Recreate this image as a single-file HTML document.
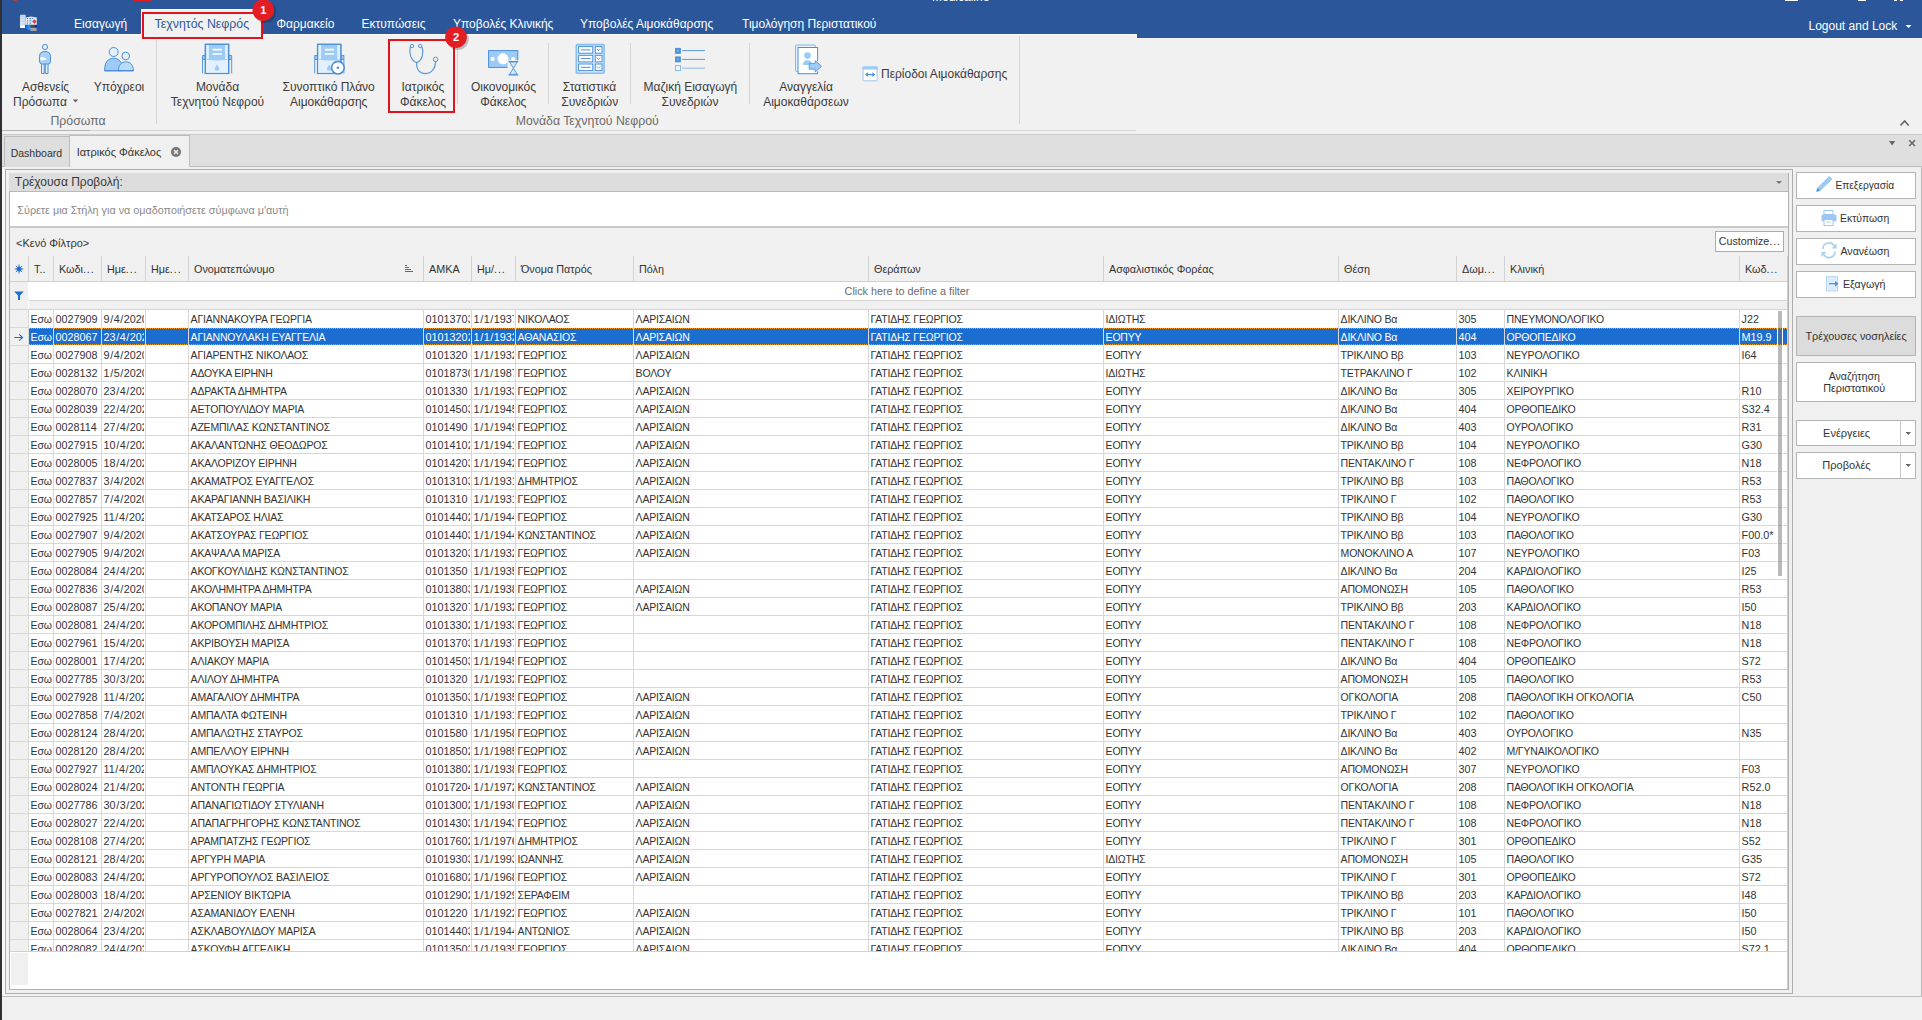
<!DOCTYPE html><html><head><meta charset="utf-8"><style>
html,body{margin:0;padding:0;}
body{width:1922px;height:1020px;position:relative;overflow:hidden;background:#f0f0f0;font-family:"Liberation Sans", sans-serif;}
</style></head><body>
<div style="position:absolute;left:2px;top:0px;width:1920px;height:34px;background:#2b579a"></div>
<div style="position:absolute;left:1136px;top:34px;width:786px;height:4px;background:#2b579a"></div>
<div style="position:absolute;left:2px;top:34px;width:1134px;height:97px;background:#f1f1f1;border-top:1px solid #fbfbfb;box-sizing:border-box"></div>
<div style="position:absolute;left:1136px;top:38px;width:786px;height:97px;background:#f1f1f1"></div>
<div style="position:absolute;left:1136px;top:34px;width:1px;height:4px;background:#fbfbfb"></div>
<div style="position:absolute;left:2px;top:130px;width:88px;height:1px;background:#b4b4b4"></div>
<div style="position:absolute;left:90px;top:130px;width:1046px;height:1px;background:#d4d4d4"></div>
<div style="position:absolute;left:2px;top:134px;width:1920px;height:1px;background:#cacaca"></div>
<div style="position:absolute;left:2px;top:135px;width:1920px;height:31px;background:#dfdfdf"></div>
<div style="position:absolute;left:2px;top:166px;width:1920px;height:1px;background:#bcbcbc"></div>
<div style="position:absolute;left:0px;top:0px;width:2px;height:1020px;background:#2e3033"></div>
<div style="position:absolute;left:932px;top:-13.16px;height:20px;line-height:20px;font-size:12px;color:#fff;white-space:nowrap;">Medicaline</div>
<div style="position:absolute;left:1785px;top:0px;width:13px;height:1px;background:#fff"></div>
<div style="position:absolute;left:1858px;top:0px;width:8px;height:1px;background:#fff"></div>
<div style="position:absolute;left:1894px;top:0px;width:3px;height:1px;background:#fff"></div>
<div style="position:absolute;left:1900px;top:0px;width:3px;height:1px;background:#fff"></div>
<div style="position:absolute;left:134px;top:0px;width:18px;height:1px;background:#e01b24"></div>
<div style="position:absolute;left:13px;top:0px;width:4px;height:1px;background:#c0392b"></div>
<div style="position:absolute;left:74px;top:13.84px;height:20px;line-height:20px;font-size:12px;color:#ffffff;white-space:nowrap;">Εισαγωγή</div>
<div style="position:absolute;left:276.5px;top:13.84px;height:20px;line-height:20px;font-size:12px;color:#ffffff;white-space:nowrap;">Φαρμακείο</div>
<div style="position:absolute;left:361.5px;top:13.84px;height:20px;line-height:20px;font-size:12px;color:#ffffff;white-space:nowrap;">Εκτυπώσεις</div>
<div style="position:absolute;left:453px;top:13.84px;height:20px;line-height:20px;font-size:12px;color:#ffffff;white-space:nowrap;">Υποβολές Κλινικής</div>
<div style="position:absolute;left:580px;top:13.84px;height:20px;line-height:20px;font-size:12px;color:#ffffff;white-space:nowrap;">Υποβολές Αιμοκάθαρσης</div>
<div style="position:absolute;left:742px;top:13.84px;height:20px;line-height:20px;font-size:12px;color:#ffffff;white-space:nowrap;">Τιμολόγηση Περιστατικού</div>
<div style="position:absolute;left:141px;top:9px;width:122px;height:26px;background:#f1f1f1;border-top:1px solid #fafafa;box-sizing:border-box"></div>
<div style="position:absolute;left:154.6px;top:13.72px;height:20px;line-height:20px;font-size:12.35px;color:#2b579a;white-space:nowrap;">Τεχνητός Νεφρός</div>
<div style="position:absolute;left:1808.5px;top:15.84px;height:20px;line-height:20px;font-size:12px;color:#ffffff;white-space:nowrap;">Logout and Lock</div>
<svg style="position:absolute;left:1904px;top:23px" width="10" height="6" viewBox="1904 23 10 6"><path d="M1905.5 25 L1911.5 25 L1908.5 28 Z" fill="#fff"/></svg>
<svg style="position:absolute;left:16px;top:12px" width="26" height="22" viewBox="16 12 26 22">
<defs><linearGradient id="lb" x1="0" y1="0" x2="0" y2="1"><stop offset="0" stop-color="#c9d6ec"/><stop offset="1" stop-color="#e9eef8"/></linearGradient>
<linearGradient id="bb" x1="0" y1="0" x2="1" y2="0"><stop offset="0" stop-color="#0a5fd0"/><stop offset="1" stop-color="#2aa4ff"/></linearGradient></defs>
<rect x="20" y="14.8" width="5.8" height="13.3" rx="1" fill="url(#lb)"/>
<path d="M20.6 16.5 H25 M20.6 19 H25 M20.6 21.5 H25 M20.6 24 H25" stroke="#b5c6e2" stroke-width="0.6"/>
<rect x="20.3" y="26" width="5.2" height="2" fill="#fff"/>
<path d="M26 17.6 L31 16.6 L36.8 17.6 V24.8 H26 Z" fill="#dfe7f5"/>
<g fill="#3f6fc8"><rect x="27" y="18" width="1" height="1"/><rect x="29.5" y="18" width="1.6" height="0.9"/><rect x="32.3" y="18" width="1" height="1"/>
<rect x="27" y="20.3" width="1" height="1"/><rect x="29.5" y="20.3" width="1.6" height="0.9"/>
<rect x="27" y="22.6" width="1" height="1"/><rect x="29.5" y="22.6" width="1.6" height="0.9"/></g>
<path d="M34.4 19.2 L36.6 21.5 L34.4 23.8 L32.2 21.5 Z" fill="#e53935"/>
<path d="M25 24.8 L30.6 25.4 V30.4 L25 28.6 Z" fill="url(#bb)"/>
<rect x="30.6" y="25.2" width="6" height="2.6" fill="#4a4740"/>
<rect x="30.6" y="27.8" width="6" height="3.2" fill="#a3a3b0"/>
<rect x="34.9" y="25.4" width="2" height="1.8" fill="#1515c8"/>
</svg>
<div style="position:absolute;left:156px;top:37px;width:1px;height:87px;background:#d5d5d5"></div>
<div style="position:absolute;left:457px;top:43px;width:1px;height:61px;background:#d5d5d5"></div>
<div style="position:absolute;left:548px;top:43px;width:1px;height:61px;background:#d5d5d5"></div>
<div style="position:absolute;left:630px;top:43px;width:1px;height:61px;background:#d5d5d5"></div>
<div style="position:absolute;left:749px;top:43px;width:1px;height:61px;background:#d5d5d5"></div>
<div style="position:absolute;left:1019px;top:36px;width:1px;height:88px;background:#d5d5d5"></div>
<div style="position:absolute;left:-104.50px;top:76.84px;width:300px;text-align:center;height:20px;line-height:20px;font-size:12px;color:#3b3b3b;white-space:nowrap;">Ασθενείς</div>
<div style="position:absolute;left:13px;top:91.84px;height:20px;line-height:20px;font-size:12px;color:#3b3b3b;white-space:nowrap;">Πρόσωπα</div>
<svg style="position:absolute;left:71px;top:97px" width="10" height="8" viewBox="71 97 10 8"><path d="M72.8 99.6 L78.2 99.6 L75.5 102.4 Z" fill="#666"/></svg>
<div style="position:absolute;left:-31.00px;top:76.84px;width:300px;text-align:center;height:20px;line-height:20px;font-size:12px;color:#3b3b3b;white-space:nowrap;">Υπόχρεοι</div>
<div style="position:absolute;left:-72.00px;top:111.24px;width:300px;text-align:center;height:20px;line-height:20px;font-size:12.3px;color:#6a6a6a;white-space:nowrap;">Πρόσωπα</div>
<div style="position:absolute;left:67.50px;top:76.84px;width:300px;text-align:center;height:20px;line-height:20px;font-size:12px;color:#3b3b3b;white-space:nowrap;">Μονάδα</div>
<div style="position:absolute;left:67.50px;top:91.84px;width:300px;text-align:center;height:20px;line-height:20px;font-size:12px;color:#3b3b3b;white-space:nowrap;">Τεχνητού Νεφρού</div>
<div style="position:absolute;left:178.70px;top:76.84px;width:300px;text-align:center;height:20px;line-height:20px;font-size:12px;color:#3b3b3b;white-space:nowrap;">Συνοπτικό Πλάνο</div>
<div style="position:absolute;left:178.70px;top:91.84px;width:300px;text-align:center;height:20px;line-height:20px;font-size:12px;color:#3b3b3b;white-space:nowrap;">Αιμοκάθαρσης</div>
<div style="position:absolute;left:272.80px;top:76.84px;width:300px;text-align:center;height:20px;line-height:20px;font-size:12px;color:#3b3b3b;white-space:nowrap;">Ιατρικός</div>
<div style="position:absolute;left:273.00px;top:91.84px;width:300px;text-align:center;height:20px;line-height:20px;font-size:12px;color:#3b3b3b;white-space:nowrap;">Φάκελος</div>
<div style="position:absolute;left:353.50px;top:76.84px;width:300px;text-align:center;height:20px;line-height:20px;font-size:12px;color:#3b3b3b;white-space:nowrap;">Οικονομικός</div>
<div style="position:absolute;left:353.30px;top:91.84px;width:300px;text-align:center;height:20px;line-height:20px;font-size:12px;color:#3b3b3b;white-space:nowrap;">Φάκελος</div>
<div style="position:absolute;left:439.50px;top:76.84px;width:300px;text-align:center;height:20px;line-height:20px;font-size:12px;color:#3b3b3b;white-space:nowrap;">Στατιστικά</div>
<div style="position:absolute;left:439.80px;top:91.84px;width:300px;text-align:center;height:20px;line-height:20px;font-size:12px;color:#3b3b3b;white-space:nowrap;">Συνεδριών</div>
<div style="position:absolute;left:540.40px;top:76.84px;width:300px;text-align:center;height:20px;line-height:20px;font-size:12px;color:#3b3b3b;white-space:nowrap;">Μαζική Εισαγωγή</div>
<div style="position:absolute;left:540.00px;top:91.84px;width:300px;text-align:center;height:20px;line-height:20px;font-size:12px;color:#3b3b3b;white-space:nowrap;">Συνεδριών</div>
<div style="position:absolute;left:656.00px;top:76.84px;width:300px;text-align:center;height:20px;line-height:20px;font-size:12px;color:#3b3b3b;white-space:nowrap;">Αναγγελία</div>
<div style="position:absolute;left:656.00px;top:91.84px;width:300px;text-align:center;height:20px;line-height:20px;font-size:12px;color:#3b3b3b;white-space:nowrap;">Αιμοκαθάρσεων</div>
<div style="position:absolute;left:881px;top:64.34px;height:20px;line-height:20px;font-size:12px;color:#3b3b3b;white-space:nowrap;">Περίοδοι Αιμοκάθαρσης</div>
<div style="position:absolute;left:437.30px;top:111.24px;width:300px;text-align:center;height:20px;line-height:20px;font-size:12.3px;color:#6a6a6a;white-space:nowrap;">Μονάδα Τεχνητού Νεφρού</div>
<svg style="position:absolute;left:1898px;top:118px" width="14" height="10" viewBox="1898 118 14 10"><path d="M1900.5 125.5 L1904.6 121 L1908.7 125.5" fill="none" stroke="#666" stroke-width="1.6"/></svg>
<svg style="position:absolute;left:36px;top:42px" width="18" height="34" viewBox="36 42 18 34">
<circle cx="45" cy="47" r="2.6" fill="#e3f0fd" stroke="#4a8fd9" stroke-width="1"/>
<path d="M41.5 63.5 h2.7 v10 h-2.7 z M45.3 63.5 h2.7 v10 h-2.7 z" fill="#e3f0fd" stroke="#4a8fd9" stroke-width="1"/>
<path d="M39.5 56.5 Q39.5 51.5 45 51.5 Q50.5 51.5 50.5 56.5 L50.5 61.5 Q50.5 63.8 48.2 64 L41.5 64 Q39.5 63.5 39.5 61.5 Z" fill="#a9d1f7" stroke="#4a8fd9" stroke-width="1"/>
<path d="M40.2 58.2 Q41 56.5 43 57.3 Q45.5 57.5 46.5 58.8 Q46 60.3 43.5 60.2 L40.8 60.2 Z" fill="#fff"/>
</svg>
<svg style="position:absolute;left:102px;top:45px" width="34" height="28" viewBox="102 45 34 28">
<path d="M104.6 70.7 C104.6 62 108 58.3 113.6 58.3 C119.2 58.3 122.6 62 122.6 70.7 Z" fill="#9ccbf7" stroke="#4a8fd9" stroke-width="1"/>
<circle cx="113.7" cy="52" r="4.5" fill="#e3f0fd" stroke="#4a8fd9" stroke-width="1"/>
<path d="M118.4 70.7 C118.4 65 121.5 61.8 125.9 61.8 C130.3 61.8 133.4 65 133.4 70.7 Z" fill="#b9dbfa" stroke="#4a8fd9" stroke-width="1"/>
<circle cx="125.7" cy="56" r="3.8" fill="#e3f0fd" stroke="#4a8fd9" stroke-width="1"/>
<path d="M104.6 70.7 H133.4" stroke="#4a8fd9" stroke-width="1.3"/>
</svg>
<svg style="position:absolute;left:200px;top:42px" width="34" height="34" viewBox="200 42 34 34">
<path d="M202.5 55.5 h3 v4 h-3 z M228.7 55.5 h3 v4 h-3 z" fill="#9ccbf7" stroke="#4a8fd9" stroke-width="0.9"/>
<path d="M202.5 59.5 V73.5 M231.7 59.5 V73.5" stroke="#4a8fd9" stroke-width="0.9"/>
<rect x="205.3" y="44.3" width="23.4" height="29.2" fill="#e3f0fd" stroke="#4a8fd9" stroke-width="1.1"/>
<path d="M205.8 44.8 H228.2 V59.5 Q217 61.5 205.8 59.5 Z" fill="#9ccbf7"/>
<path d="M206.3 45 v14 h2.6 v-14 z M225.1 45 v14 h2.6 v-14 z" fill="#e3f0fd"/>
<rect x="205.3" y="44.3" width="23.4" height="29.2" fill="none" stroke="#4a8fd9" stroke-width="1.1"/>
<path d="M212.5 48.8 h9 l0.8 1.6 h-9.8 z M212.5 53.2 h9 l0.8 1.6 h-9.8 z" fill="#fff"/>
<path d="M217 64.5 Q219.2 67.5 219.2 68.6 A2.2 2.2 0 0 1 214.8 68.6 Q214.8 67.5 217 64.5 Z" fill="#9ccbf7"/>
</svg>
<svg style="position:absolute;left:312px;top:42px" width="40" height="36" viewBox="312 42 40 36">
<path d="M314.7 55.5 h3 v4 h-3 z M340.9 55.5 h3 v4 h-3 z" fill="#9ccbf7" stroke="#4a8fd9" stroke-width="0.9"/>
<path d="M314.7 59.5 V73.5 M343.9 59.5 V73.5" stroke="#4a8fd9" stroke-width="0.9"/>
<rect x="317.5" y="44.3" width="23.4" height="29.2" fill="#e3f0fd" stroke="#4a8fd9" stroke-width="1.1"/>
<path d="M318.0 44.8 H340.4 V59.5 Q329.2 61.5 318.0 59.5 Z" fill="#9ccbf7"/>
<path d="M318.5 45 v14 h2.6 v-14 z M337.3 45 v14 h2.6 v-14 z" fill="#e3f0fd"/>
<rect x="317.5" y="44.3" width="23.4" height="29.2" fill="none" stroke="#4a8fd9" stroke-width="1.1"/>
<path d="M324.7 48.8 h9 l0.8 1.6 h-9.8 z M324.7 53.2 h9 l0.8 1.6 h-9.8 z" fill="#fff"/>
<path d="M329.2 64.5 Q331.4 67.5 331.4 68.6 A2.2 2.2 0 0 1 327.0 68.6 Q327.0 67.5 329.2 64.5 Z" fill="#9ccbf7"/>

<circle cx="337.9" cy="67.7" r="6.3" fill="#fff" stroke="#4a8fd9" stroke-width="1.6"/>
<circle cx="337.9" cy="67.7" r="1.3" fill="#4a8fd9"/>
</svg>
<svg style="position:absolute;left:404px;top:42px" width="36" height="34" viewBox="404 42 36 34">
<path d="M410.3 46.8 C408.8 52 410.5 60.5 416.6 62.6 C422.7 60.5 424 52 421.9 46.8" fill="none" stroke="#5796d8" stroke-width="1.15"/>
<path d="M416.6 62.6 C416.2 70 420 73.6 425.6 73.6 C431.2 73.6 435.6 68.5 435.6 61.8" fill="none" stroke="#5796d8" stroke-width="1.15"/>
<circle cx="412" cy="46" r="1.7" fill="#e3f0fd" stroke="#5796d8" stroke-width="1"/>
<circle cx="420.2" cy="46" r="1.7" fill="#e3f0fd" stroke="#5796d8" stroke-width="1"/>
<circle cx="435.6" cy="59.4" r="2.3" fill="#e3f0fd" stroke="#5796d8" stroke-width="1"/>
</svg>
<svg style="position:absolute;left:486px;top:48px" width="36" height="30" viewBox="486 48 36 30">
<rect x="488.6" y="50.6" width="29.2" height="16.8" fill="#9ccbf7" stroke="#4a8fd9" stroke-width="1"/>
<circle cx="503" cy="58.8" r="5.5" fill="#fff"/>
<circle cx="492.6" cy="59" r="2.1" fill="#fff"/>
<circle cx="513.3" cy="59" r="2.1" fill="#fff"/>
<rect x="507.6" y="60.3" width="11.5" height="15.5" fill="#f1f1f1"/>
<path d="M508.5 61.5 H518.3 M508.5 74.8 H518.3" stroke="#4a8fd9" stroke-width="1.2"/>
<path d="M509.6 62 L517.2 62 L513.4 68.2 Z M509.6 74.3 L517.2 74.3 L513.4 68.2 Z" fill="#d6eafc" stroke="#4a8fd9" stroke-width="0.9"/>
</svg>
<svg style="position:absolute;left:574px;top:42px" width="32" height="34" viewBox="574 42 32 34">
<rect x="576.3" y="44.6" width="27.8" height="28.6" rx="1" fill="#d9ebfc" stroke="#8bbdec" stroke-width="1.6"/>
<rect x="578.6" y="46.6" width="14.2" height="6.6" fill="#fff" stroke="#4a8fd9" stroke-width="1"/><path d="M580.8 49.9 H590.6" stroke="#4a8fd9" stroke-width="1"/><rect x="595.2" y="46.6" width="6.8" height="6.6" fill="#fff" stroke="#4a8fd9" stroke-width="1"/><path d="M597 49.0 L598.6 50.800000000000004 L600.2 49.0" fill="none" stroke="#4a8fd9" stroke-width="0.8"/><rect x="578.6" y="55.3" width="14.2" height="6.6" fill="#fff" stroke="#4a8fd9" stroke-width="1"/><path d="M580.8 58.599999999999994 H590.6" stroke="#4a8fd9" stroke-width="1"/><rect x="595.2" y="55.3" width="6.8" height="6.6" fill="#fff" stroke="#4a8fd9" stroke-width="1"/><path d="M597 57.699999999999996 L598.6 59.5 L600.2 57.699999999999996" fill="none" stroke="#4a8fd9" stroke-width="0.8"/><rect x="578.6" y="64.0" width="14.2" height="6.6" fill="#fff" stroke="#4a8fd9" stroke-width="1"/><path d="M580.8 67.3 H590.6" stroke="#4a8fd9" stroke-width="1"/><rect x="595.2" y="64.0" width="6.8" height="6.6" fill="#fff" stroke="#4a8fd9" stroke-width="1"/><path d="M597 66.4 L598.6 68.2 L600.2 66.4" fill="none" stroke="#4a8fd9" stroke-width="0.8"/>
</svg>
<svg style="position:absolute;left:673px;top:46px" width="34" height="28" viewBox="673 46 34 28">
<rect x="675.5" y="48.3" width="5" height="5" fill="#4a8fd9" stroke="#4a8fd9" stroke-width="0.8"/>
<rect x="677" y="49.8" width="2" height="2" fill="#7fb3e8"/>
<rect x="675.5" y="56.9" width="5" height="5" fill="#4a8fd9" stroke="#4a8fd9" stroke-width="0.8"/>
<rect x="677" y="58.4" width="2" height="2" fill="#7fb3e8"/>
<rect x="675.5" y="65.6" width="5" height="5" fill="#eef6fe" stroke="#7fb3e8" stroke-width="0.9"/>
<path d="M682.3 50.6 H705 M682.3 59.4 H705" stroke="#4a8fd9" stroke-width="0.9"/>
<path d="M682.3 68.2 H705" stroke="#7fb3e8" stroke-width="0.9"/>
</svg>
<svg style="position:absolute;left:793px;top:42px" width="32" height="34" viewBox="793 42 32 34">
<rect x="795.6" y="45" width="19.6" height="26.4" rx="0.8" fill="#eaf3fc" stroke="#7fb3e8" stroke-width="1"/>
<rect x="798" y="47.5" width="19.6" height="26.2" fill="#fff" stroke="#4a8fd9" stroke-width="1"/>
<circle cx="807.5" cy="55.6" r="3.3" fill="#9ccbf7"/>
<path d="M803 65 C803 61.6 805 60.2 807.5 60.2 C810 60.2 812 61.6 812 65 Z" fill="#9ccbf7"/>
<path d="M816.5 60 L823 66.3 L816.5 72.6 Z" fill="#f1f1f1"/>
<path d="M809.2 63.4 H815.2 V60.6 L821.6 66.3 L815.2 72 V69.2 H809.2 Z" fill="#9ccbf7" stroke="#4a8fd9" stroke-width="0.8"/>
</svg>
<svg style="position:absolute;left:860px;top:64px" width="20" height="20" viewBox="860 64 20 20">
<rect x="863" y="67" width="14.2" height="13.8" rx="1" fill="#fff" stroke="#b9d7f3" stroke-width="1.5"/>
<rect x="862.5" y="66.5" width="15.2" height="3" rx="1" fill="#9ccbf7"/>
<path d="M866.8 74.6 H873.4" stroke="#4a8fd9" stroke-width="1.3"/>
<path d="M865 74.6 L867.8 72.3 V76.9 Z M875.2 74.6 L872.4 72.3 V76.9 Z" fill="#4a8fd9"/>
</svg>
<div style="position:absolute;left:142px;top:12px;width:121px;height:27px;border:2px solid #e1141c;box-sizing:border-box"></div>
<div style="position:absolute;left:388px;top:39px;width:67px;height:74px;border:2px solid #e1141c;box-sizing:border-box"></div>
<svg style="position:absolute;left:250px;top:-2px" width="28" height="28" viewBox="250 -2 28 28">
<circle cx="265.0" cy="12.0" r="11" fill="#000" opacity="0.22"/>
<circle cx="263.3" cy="10.2" r="10.8" fill="#e41d24"/>
</svg>
<div style="position:absolute;left:253.3px;top:0.1999999999999993px;width:20px;height:20px;line-height:20px;text-align:center;color:#fff;font-weight:bold;font-size:11.2px;">1</div>
<svg style="position:absolute;left:443px;top:24px" width="28" height="28" viewBox="443 24 28 28">
<circle cx="457.7" cy="39.0" r="11" fill="#000" opacity="0.22"/>
<circle cx="456" cy="37.2" r="10.8" fill="#e41d24"/>
</svg>
<div style="position:absolute;left:446px;top:27.200000000000003px;width:20px;height:20px;line-height:20px;text-align:center;color:#fff;font-weight:bold;font-size:11.2px;">2</div>
<div style="position:absolute;left:4px;top:136px;width:66px;height:31px;background:#dedede;border:1px solid #bdbdbd;border-bottom:none;box-sizing:border-box"></div>
<div style="position:absolute;left:69px;top:135px;width:121px;height:32px;background:#f0f0f0;border:1px solid #bdbdbd;border-bottom:none;box-sizing:border-box"></div>
<div style="position:absolute;left:10.7px;top:142.56px;height:20px;line-height:20px;font-size:10.5px;color:#333;white-space:nowrap;">Dashboard</div>
<div style="position:absolute;left:76.7px;top:142.39px;height:20px;line-height:20px;font-size:11px;color:#333;white-space:nowrap;">Ιατρικός Φάκελος</div>
<svg style="position:absolute;left:170px;top:146px" width="12" height="12" viewBox="170 146 12 12"><circle cx="176" cy="152" r="5" fill="#767676"/><path d="M174 150 L178 154 M178 150 L174 154" stroke="#f4f4f4" stroke-width="1.4"/></svg>
<svg style="position:absolute;left:1886px;top:138px" width="12" height="10" viewBox="1886 138 12 10"><path d="M1889 141 L1895.2 141 L1892.1 145.5 Z" fill="#666"/></svg>
<svg style="position:absolute;left:1906px;top:137px" width="12" height="12" viewBox="1906 137 12 12"><path d="M1909.2 140.2 L1915 146 M1915 140.2 L1909.2 146" stroke="#666" stroke-width="1.5"/></svg>
<div style="position:absolute;left:2px;top:167px;width:1920px;height:830px;border:1px solid #bcbcbc;border-top:none;border-left:none;box-sizing:border-box;background:#f0f0f0"></div>
<div style="position:absolute;left:2px;top:167px;width:3px;height:829px;background:#f7f7f7"></div>
<div style="position:absolute;left:5px;top:169px;width:1788px;height:825px;border:1px solid #adadad;box-sizing:border-box;background:#f0f0f0"></div>
<div style="position:absolute;left:9px;top:173px;width:1780px;height:817px;border:1px solid #b0b0b0;border-top:none;box-sizing:border-box;background:#fff"></div>
<div style="position:absolute;left:9px;top:173px;width:1779px;height:18px;background:#dddddd"></div>
<div style="position:absolute;left:10px;top:191px;width:1778px;height:1px;background:#b9b9b9"></div>
<div style="position:absolute;left:14.8px;top:171.84px;height:20px;line-height:20px;font-size:12px;color:#383838;white-space:nowrap;">Τρέχουσα Προβολή:</div>
<svg style="position:absolute;left:1774px;top:178px" width="10" height="8" viewBox="1774 178 10 8"><path d="M1776 181 L1782 181 L1779 184 Z" fill="#777"/></svg>
<div style="position:absolute;left:10px;top:192px;width:1778px;height:34px;background:#fff"></div>
<div style="position:absolute;left:10px;top:226px;width:1778px;height:2px;background:#c9c9c9"></div>
<div style="position:absolute;left:17.3px;top:200.26px;height:20px;line-height:20px;font-size:10.8px;color:#8a8a8a;white-space:nowrap;">Σύρετε μια Στήλη για να ομαδοποιήσετε σύμφωνα μ&#x27;αυτή</div>
<div style="position:absolute;left:10px;top:228px;width:1778px;height:28px;background:#f0f0f0"></div>
<div style="position:absolute;left:16px;top:233.39px;height:20px;line-height:20px;font-size:11px;color:#333;white-space:nowrap;">&lt;Κενό Φίλτρο&gt;</div>
<div style="position:absolute;left:1715px;top:231px;width:69px;height:21px;background:#fff;border:1px solid #acacac;box-sizing:border-box"></div>
<div style="position:absolute;left:1718.8px;top:231.29px;height:20px;line-height:20px;font-size:10.7px;color:#333;white-space:nowrap;">Customize<span style="letter-spacing:0.9px">..</span>.</div>
<div style="position:absolute;left:10px;top:256px;width:1778px;height:25px;background:#f0f0f0"></div>
<div style="position:absolute;left:10px;top:281px;width:1778px;height:1px;background:#cfcfcf"></div>
<div style="position:absolute;left:28px;top:256px;width:1px;height:25px;background:#d3d3d3"></div>
<div style="position:absolute;left:53px;top:256px;width:1px;height:25px;background:#d3d3d3"></div>
<div style="position:absolute;left:101px;top:256px;width:1px;height:25px;background:#d3d3d3"></div>
<div style="position:absolute;left:145px;top:256px;width:1px;height:25px;background:#d3d3d3"></div>
<div style="position:absolute;left:188px;top:256px;width:1px;height:25px;background:#d3d3d3"></div>
<div style="position:absolute;left:423px;top:256px;width:1px;height:25px;background:#d3d3d3"></div>
<div style="position:absolute;left:471px;top:256px;width:1px;height:25px;background:#d3d3d3"></div>
<div style="position:absolute;left:515px;top:256px;width:1px;height:25px;background:#d3d3d3"></div>
<div style="position:absolute;left:633px;top:256px;width:1px;height:25px;background:#d3d3d3"></div>
<div style="position:absolute;left:868px;top:256px;width:1px;height:25px;background:#d3d3d3"></div>
<div style="position:absolute;left:1103px;top:256px;width:1px;height:25px;background:#d3d3d3"></div>
<div style="position:absolute;left:1338px;top:256px;width:1px;height:25px;background:#d3d3d3"></div>
<div style="position:absolute;left:1456px;top:256px;width:1px;height:25px;background:#d3d3d3"></div>
<div style="position:absolute;left:1504px;top:256px;width:1px;height:25px;background:#d3d3d3"></div>
<div style="position:absolute;left:1739px;top:256px;width:1px;height:25px;background:#d3d3d3"></div>
<div style="position:absolute;left:34px;top:259.06px;height:20px;line-height:20px;font-size:10.8px;color:#333;white-space:nowrap;letter-spacing:0">Τ..</div>
<div style="position:absolute;left:59px;top:259.06px;height:20px;line-height:20px;font-size:10.8px;color:#333;white-space:nowrap;letter-spacing:0">Κωδι<span style="letter-spacing:0.9px">..</span>.</div>
<div style="position:absolute;left:107px;top:259.06px;height:20px;line-height:20px;font-size:10.8px;color:#333;white-space:nowrap;letter-spacing:0">Ημε<span style="letter-spacing:0.9px">..</span>.</div>
<div style="position:absolute;left:151px;top:259.06px;height:20px;line-height:20px;font-size:10.8px;color:#333;white-space:nowrap;letter-spacing:0">Ημε<span style="letter-spacing:0.9px">..</span>.</div>
<div style="position:absolute;left:194px;top:259.06px;height:20px;line-height:20px;font-size:10.8px;color:#333;white-space:nowrap;letter-spacing:0">Ονοματεπώνυμο</div>
<div style="position:absolute;left:429px;top:259.06px;height:20px;line-height:20px;font-size:10.8px;color:#333;white-space:nowrap;letter-spacing:0">ΑΜΚΑ</div>
<div style="position:absolute;left:477px;top:259.06px;height:20px;line-height:20px;font-size:10.8px;color:#333;white-space:nowrap;letter-spacing:0">Ημ/<span style="letter-spacing:0.9px">..</span>.</div>
<div style="position:absolute;left:521px;top:259.06px;height:20px;line-height:20px;font-size:10.8px;color:#333;white-space:nowrap;letter-spacing:0">Όνομα Πατρός</div>
<div style="position:absolute;left:639px;top:259.06px;height:20px;line-height:20px;font-size:10.8px;color:#333;white-space:nowrap;letter-spacing:0">Πόλη</div>
<div style="position:absolute;left:874px;top:259.06px;height:20px;line-height:20px;font-size:10.8px;color:#333;white-space:nowrap;letter-spacing:0">Θεράπων</div>
<div style="position:absolute;left:1109px;top:259.06px;height:20px;line-height:20px;font-size:10.8px;color:#333;white-space:nowrap;letter-spacing:0">Ασφαλιστικός Φορέας</div>
<div style="position:absolute;left:1344px;top:259.06px;height:20px;line-height:20px;font-size:10.8px;color:#333;white-space:nowrap;letter-spacing:0">Θέση</div>
<div style="position:absolute;left:1462px;top:259.06px;height:20px;line-height:20px;font-size:10.8px;color:#333;white-space:nowrap;letter-spacing:0">Δωμ<span style="letter-spacing:0.9px">..</span>.</div>
<div style="position:absolute;left:1510px;top:259.06px;height:20px;line-height:20px;font-size:10.8px;color:#333;white-space:nowrap;letter-spacing:0">Κλινική</div>
<div style="position:absolute;left:1745px;top:259.06px;height:20px;line-height:20px;font-size:10.8px;color:#333;white-space:nowrap;letter-spacing:0">Κωδ<span style="letter-spacing:0.9px">..</span>.</div>
<svg style="position:absolute;left:12px;top:262px" width="14" height="14" viewBox="12 262 14 14"><g stroke="#1f6fd1" stroke-width="0.9"><path d="M19 264.4 V273.6 M14.6 269 H23.4 M15.9 265.9 L22.1 272.1 M22.1 265.9 L15.9 272.1"/></g><circle cx="19" cy="269" r="2.5" fill="#1f6fd1"/></svg>
<div style="position:absolute;left:405px;top:265px;width:2px;height:1px;background:#6a6a6a"></div>
<div style="position:absolute;left:405px;top:267px;width:4px;height:1px;background:#6a6a6a"></div>
<div style="position:absolute;left:405px;top:269px;width:6px;height:1px;background:#6a6a6a"></div>
<div style="position:absolute;left:405px;top:271px;width:8px;height:1px;background:#6a6a6a"></div>
<div style="position:absolute;left:29px;top:282px;width:1759px;height:18px;background:#fff"></div>
<div style="position:absolute;left:29px;top:300px;width:1759px;height:1px;background:#d6d6d6"></div>
<div style="position:absolute;left:10px;top:282px;width:18px;height:27px;background:#f0f0f0"></div>
<div style="position:absolute;left:29px;top:301px;width:1759px;height:8px;background:#f0f0f0"></div>
<div style="position:absolute;left:757.00px;top:280.86px;width:300px;text-align:center;height:20px;line-height:20px;font-size:10.8px;color:#6b6b6b;white-space:nowrap;">Click here to define a filter</div>
<svg style="position:absolute;left:12px;top:289px" width="14" height="14" viewBox="12 289 14 14"><path d="M14.2 291.5 H23.8 L20 295.5 V300 H18 V295.5 Z" fill="#1f6fd1"/></svg>
<div style="position:absolute;left:10px;top:309px;width:1778px;height:1px;background:#d3d3d3"></div>
<div style="position:absolute;left:0;top:310px;width:1788px;height:641px;overflow:hidden">
<div style="position:absolute;left:10px;top:0px;width:18px;height:17px;background:#f0f0f0"></div>
<div style="position:absolute;left:29px;top:0px;width:22.5px;height:17px;overflow:hidden"><div style="position:absolute;left:1.6px;top:-0.74px;line-height:20px;height:20px;font-size:10.5px;letter-spacing:-0.2px;color:#333;white-space:nowrap">Εσω</div></div>
<div style="position:absolute;left:54px;top:0px;width:45.5px;height:17px;overflow:hidden"><div style="position:absolute;left:1.6px;top:-0.84px;line-height:20px;height:20px;font-size:10.8px;letter-spacing:0;color:#333;white-space:nowrap">0027909</div></div>
<div style="position:absolute;left:102px;top:0px;width:41.5px;height:17px;overflow:hidden"><div style="position:absolute;left:1.6px;top:-0.84px;line-height:20px;height:20px;font-size:10.8px;letter-spacing:0;color:#333;white-space:nowrap">9<span style="margin:0 0.55px">/</span>4<span style="margin:0 0.55px">/</span>2020</div></div>
<div style="position:absolute;left:146px;top:0px;width:40.5px;height:17px;overflow:hidden"><div style="position:absolute;left:1.6px;top:-0.84px;line-height:20px;height:20px;font-size:10.8px;letter-spacing:0;color:#333;white-space:nowrap"></div></div>
<div style="position:absolute;left:189px;top:0px;width:232.5px;height:17px;overflow:hidden"><div style="position:absolute;left:1.6px;top:-0.74px;line-height:20px;height:20px;font-size:10.5px;letter-spacing:-0.2px;color:#333;white-space:nowrap">ΑΓΙΑΝΝΑΚΟΥΡΑ ΓΕΩΡΓΙΑ</div></div>
<div style="position:absolute;left:424px;top:0px;width:45.5px;height:17px;overflow:hidden"><div style="position:absolute;left:1.6px;top:-0.84px;line-height:20px;height:20px;font-size:10.8px;letter-spacing:0;color:#333;white-space:nowrap">01013703456</div></div>
<div style="position:absolute;left:472px;top:0px;width:41.5px;height:17px;overflow:hidden"><div style="position:absolute;left:1.6px;top:-0.84px;line-height:20px;height:20px;font-size:10.8px;letter-spacing:0;color:#333;white-space:nowrap">1<span style="margin:0 0.55px">/</span>1<span style="margin:0 0.55px">/</span>1937</div></div>
<div style="position:absolute;left:516px;top:0px;width:115.5px;height:17px;overflow:hidden"><div style="position:absolute;left:1.6px;top:-0.74px;line-height:20px;height:20px;font-size:10.5px;letter-spacing:-0.2px;color:#333;white-space:nowrap">ΝΙΚΟΛΑΟΣ</div></div>
<div style="position:absolute;left:634px;top:0px;width:232.5px;height:17px;overflow:hidden"><div style="position:absolute;left:1.6px;top:-0.74px;line-height:20px;height:20px;font-size:10.5px;letter-spacing:-0.2px;color:#333;white-space:nowrap">ΛΑΡΙΣΑΙΩΝ</div></div>
<div style="position:absolute;left:869px;top:0px;width:232.5px;height:17px;overflow:hidden"><div style="position:absolute;left:1.6px;top:-0.74px;line-height:20px;height:20px;font-size:10.5px;letter-spacing:-0.2px;color:#333;white-space:nowrap">ΓΑΤΙΔΗΣ ΓΕΩΡΓΙΟΣ</div></div>
<div style="position:absolute;left:1104px;top:0px;width:232.5px;height:17px;overflow:hidden"><div style="position:absolute;left:1.6px;top:-0.74px;line-height:20px;height:20px;font-size:10.5px;letter-spacing:-0.2px;color:#333;white-space:nowrap">ΙΔΙΩΤΗΣ</div></div>
<div style="position:absolute;left:1339px;top:0px;width:115.5px;height:17px;overflow:hidden"><div style="position:absolute;left:1.6px;top:-0.74px;line-height:20px;height:20px;font-size:10.5px;letter-spacing:-0.2px;color:#333;white-space:nowrap">ΔΙΚΛΙΝΟ Βα</div></div>
<div style="position:absolute;left:1457px;top:0px;width:45.5px;height:17px;overflow:hidden"><div style="position:absolute;left:1.6px;top:-0.84px;line-height:20px;height:20px;font-size:10.8px;letter-spacing:0;color:#333;white-space:nowrap">305</div></div>
<div style="position:absolute;left:1505px;top:0px;width:232.5px;height:17px;overflow:hidden"><div style="position:absolute;left:1.6px;top:-0.74px;line-height:20px;height:20px;font-size:10.5px;letter-spacing:-0.2px;color:#333;white-space:nowrap">ΠΝΕΥΜΟΝΟΛΟΓΙΚΟ</div></div>
<div style="position:absolute;left:1740px;top:0px;width:45.5px;height:17px;overflow:hidden"><div style="position:absolute;left:1.6px;top:-0.84px;line-height:20px;height:20px;font-size:10.8px;letter-spacing:0;color:#333;white-space:nowrap">J22</div></div>
<div style="position:absolute;left:10px;top:17px;width:18px;height:1px;background:#d8d8d8"></div>
<div style="position:absolute;left:29px;top:17px;width:1759px;height:1px;background:#f8f8f8"></div>
<div style="position:absolute;left:10px;top:18px;width:18px;height:17px;background:#f0f0f0"></div>
<div style="position:absolute;left:29px;top:18px;width:1759px;height:17px;background:#1c6dd0"></div>
<div style="position:absolute;left:29px;top:18px;width:22.5px;height:17px;overflow:hidden"><div style="position:absolute;left:1.6px;top:-0.74px;line-height:20px;height:20px;font-size:10.5px;letter-spacing:-0.2px;color:#fff;white-space:nowrap">Εσω</div></div>
<div style="position:absolute;left:54px;top:18px;width:45.5px;height:17px;overflow:hidden"><div style="position:absolute;left:1.6px;top:-0.84px;line-height:20px;height:20px;font-size:10.8px;letter-spacing:0;color:#fff;white-space:nowrap">0028067</div></div>
<div style="position:absolute;left:102px;top:18px;width:41.5px;height:17px;overflow:hidden"><div style="position:absolute;left:1.6px;top:-0.84px;line-height:20px;height:20px;font-size:10.8px;letter-spacing:0;color:#fff;white-space:nowrap">23<span style="margin:0 0.55px">/</span>4<span style="margin:0 0.55px">/</span>2020</div></div>
<div style="position:absolute;left:146px;top:18px;width:40.5px;height:17px;overflow:hidden"><div style="position:absolute;left:1.6px;top:-0.84px;line-height:20px;height:20px;font-size:10.8px;letter-spacing:0;color:#fff;white-space:nowrap"></div></div>
<div style="position:absolute;left:189px;top:18px;width:232.5px;height:17px;overflow:hidden"><div style="position:absolute;left:1.6px;top:-0.74px;line-height:20px;height:20px;font-size:10.5px;letter-spacing:-0.2px;color:#fff;white-space:nowrap">ΑΓΙΑΝΝΟΥΛΑΚΗ ΕΥΑΓΓΕΛΙΑ</div></div>
<div style="position:absolute;left:424px;top:18px;width:45.5px;height:17px;overflow:hidden"><div style="position:absolute;left:1.6px;top:-0.84px;line-height:20px;height:20px;font-size:10.8px;letter-spacing:0;color:#fff;white-space:nowrap">01013202345</div></div>
<div style="position:absolute;left:472px;top:18px;width:41.5px;height:17px;overflow:hidden"><div style="position:absolute;left:1.6px;top:-0.84px;line-height:20px;height:20px;font-size:10.8px;letter-spacing:0;color:#fff;white-space:nowrap">1<span style="margin:0 0.55px">/</span>1<span style="margin:0 0.55px">/</span>1932</div></div>
<div style="position:absolute;left:516px;top:18px;width:115.5px;height:17px;overflow:hidden"><div style="position:absolute;left:1.6px;top:-0.74px;line-height:20px;height:20px;font-size:10.5px;letter-spacing:-0.2px;color:#fff;white-space:nowrap">ΑΘΑΝΑΣΙΟΣ</div></div>
<div style="position:absolute;left:634px;top:18px;width:232.5px;height:17px;overflow:hidden"><div style="position:absolute;left:1.6px;top:-0.74px;line-height:20px;height:20px;font-size:10.5px;letter-spacing:-0.2px;color:#fff;white-space:nowrap">ΛΑΡΙΣΑΙΩΝ</div></div>
<div style="position:absolute;left:869px;top:18px;width:232.5px;height:17px;overflow:hidden"><div style="position:absolute;left:1.6px;top:-0.74px;line-height:20px;height:20px;font-size:10.5px;letter-spacing:-0.2px;color:#fff;white-space:nowrap">ΓΑΤΙΔΗΣ ΓΕΩΡΓΙΟΣ</div></div>
<div style="position:absolute;left:1104px;top:18px;width:232.5px;height:17px;overflow:hidden"><div style="position:absolute;left:1.6px;top:-0.74px;line-height:20px;height:20px;font-size:10.5px;letter-spacing:-0.2px;color:#fff;white-space:nowrap">ΕΟΠΥΥ</div></div>
<div style="position:absolute;left:1339px;top:18px;width:115.5px;height:17px;overflow:hidden"><div style="position:absolute;left:1.6px;top:-0.74px;line-height:20px;height:20px;font-size:10.5px;letter-spacing:-0.2px;color:#fff;white-space:nowrap">ΔΙΚΛΙΝΟ Βα</div></div>
<div style="position:absolute;left:1457px;top:18px;width:45.5px;height:17px;overflow:hidden"><div style="position:absolute;left:1.6px;top:-0.84px;line-height:20px;height:20px;font-size:10.8px;letter-spacing:0;color:#fff;white-space:nowrap">404</div></div>
<div style="position:absolute;left:1505px;top:18px;width:232.5px;height:17px;overflow:hidden"><div style="position:absolute;left:1.6px;top:-0.74px;line-height:20px;height:20px;font-size:10.5px;letter-spacing:-0.2px;color:#fff;white-space:nowrap">ΟΡΘΟΠΕΔΙΚΟ</div></div>
<div style="position:absolute;left:1740px;top:18px;width:45.5px;height:17px;overflow:hidden"><div style="position:absolute;left:1.6px;top:-0.84px;line-height:20px;height:20px;font-size:10.8px;letter-spacing:0;color:#fff;white-space:nowrap">M19.9</div></div>
<div style="position:absolute;left:29px;top:18px;width:24px;height:1px;background-image:repeating-linear-gradient(90deg,#f39c2a 0 1px,transparent 1px 2px)"></div>
<div style="position:absolute;left:29px;top:34px;width:24px;height:1px;background-image:repeating-linear-gradient(90deg,#f39c2a 0 1px,transparent 1px 2px)"></div>
<div style="position:absolute;left:54px;top:18px;width:47px;height:1px;background-image:repeating-linear-gradient(90deg,#f39c2a 0 1px,transparent 1px 2px)"></div>
<div style="position:absolute;left:54px;top:34px;width:47px;height:1px;background-image:repeating-linear-gradient(90deg,#f39c2a 0 1px,transparent 1px 2px)"></div>
<div style="position:absolute;left:102px;top:18px;width:43px;height:1px;background-image:repeating-linear-gradient(90deg,#f39c2a 0 1px,transparent 1px 2px)"></div>
<div style="position:absolute;left:102px;top:34px;width:43px;height:1px;background-image:repeating-linear-gradient(90deg,#f39c2a 0 1px,transparent 1px 2px)"></div>
<div style="position:absolute;left:146px;top:18px;width:42px;height:1px;background-image:repeating-linear-gradient(90deg,#f39c2a 0 1px,transparent 1px 2px)"></div>
<div style="position:absolute;left:146px;top:34px;width:42px;height:1px;background-image:repeating-linear-gradient(90deg,#f39c2a 0 1px,transparent 1px 2px)"></div>
<div style="position:absolute;left:189px;top:18px;width:234px;height:1px;background-image:repeating-linear-gradient(90deg,#f39c2a 0 1px,transparent 1px 2px)"></div>
<div style="position:absolute;left:189px;top:34px;width:234px;height:1px;background-image:repeating-linear-gradient(90deg,#f39c2a 0 1px,transparent 1px 2px)"></div>
<div style="position:absolute;left:424px;top:18px;width:47px;height:1px;background-image:repeating-linear-gradient(90deg,#f39c2a 0 1px,transparent 1px 2px)"></div>
<div style="position:absolute;left:424px;top:34px;width:47px;height:1px;background-image:repeating-linear-gradient(90deg,#f39c2a 0 1px,transparent 1px 2px)"></div>
<div style="position:absolute;left:472px;top:18px;width:43px;height:1px;background-image:repeating-linear-gradient(90deg,#f39c2a 0 1px,transparent 1px 2px)"></div>
<div style="position:absolute;left:472px;top:34px;width:43px;height:1px;background-image:repeating-linear-gradient(90deg,#f39c2a 0 1px,transparent 1px 2px)"></div>
<div style="position:absolute;left:516px;top:18px;width:117px;height:1px;background-image:repeating-linear-gradient(90deg,#f39c2a 0 1px,transparent 1px 2px)"></div>
<div style="position:absolute;left:516px;top:34px;width:117px;height:1px;background-image:repeating-linear-gradient(90deg,#f39c2a 0 1px,transparent 1px 2px)"></div>
<div style="position:absolute;left:634px;top:18px;width:234px;height:1px;background-image:repeating-linear-gradient(90deg,#f39c2a 0 1px,transparent 1px 2px)"></div>
<div style="position:absolute;left:634px;top:34px;width:234px;height:1px;background-image:repeating-linear-gradient(90deg,#f39c2a 0 1px,transparent 1px 2px)"></div>
<div style="position:absolute;left:869px;top:18px;width:234px;height:1px;background-image:repeating-linear-gradient(90deg,#f39c2a 0 1px,transparent 1px 2px)"></div>
<div style="position:absolute;left:869px;top:34px;width:234px;height:1px;background-image:repeating-linear-gradient(90deg,#f39c2a 0 1px,transparent 1px 2px)"></div>
<div style="position:absolute;left:1104px;top:18px;width:234px;height:1px;background-image:repeating-linear-gradient(90deg,#f39c2a 0 1px,transparent 1px 2px)"></div>
<div style="position:absolute;left:1104px;top:34px;width:234px;height:1px;background-image:repeating-linear-gradient(90deg,#f39c2a 0 1px,transparent 1px 2px)"></div>
<div style="position:absolute;left:1339px;top:18px;width:117px;height:1px;background-image:repeating-linear-gradient(90deg,#f39c2a 0 1px,transparent 1px 2px)"></div>
<div style="position:absolute;left:1339px;top:34px;width:117px;height:1px;background-image:repeating-linear-gradient(90deg,#f39c2a 0 1px,transparent 1px 2px)"></div>
<div style="position:absolute;left:1457px;top:18px;width:47px;height:1px;background-image:repeating-linear-gradient(90deg,#f39c2a 0 1px,transparent 1px 2px)"></div>
<div style="position:absolute;left:1457px;top:34px;width:47px;height:1px;background-image:repeating-linear-gradient(90deg,#f39c2a 0 1px,transparent 1px 2px)"></div>
<div style="position:absolute;left:1505px;top:18px;width:234px;height:1px;background-image:repeating-linear-gradient(90deg,#f39c2a 0 1px,transparent 1px 2px)"></div>
<div style="position:absolute;left:1505px;top:34px;width:234px;height:1px;background-image:repeating-linear-gradient(90deg,#f39c2a 0 1px,transparent 1px 2px)"></div>
<div style="position:absolute;left:1740px;top:18px;width:47px;height:1px;background-image:repeating-linear-gradient(90deg,#f39c2a 0 1px,transparent 1px 2px)"></div>
<div style="position:absolute;left:1740px;top:34px;width:47px;height:1px;background-image:repeating-linear-gradient(90deg,#f39c2a 0 1px,transparent 1px 2px)"></div>
<div style="position:absolute;left:10px;top:35px;width:18px;height:1px;background:#d8d8d8"></div>
<div style="position:absolute;left:29px;top:35px;width:1759px;height:1px;background:#f8f8f8"></div>
<div style="position:absolute;left:10px;top:36px;width:18px;height:17px;background:#f0f0f0"></div>
<div style="position:absolute;left:29px;top:36px;width:22.5px;height:17px;overflow:hidden"><div style="position:absolute;left:1.6px;top:-0.74px;line-height:20px;height:20px;font-size:10.5px;letter-spacing:-0.2px;color:#333;white-space:nowrap">Εσω</div></div>
<div style="position:absolute;left:54px;top:36px;width:45.5px;height:17px;overflow:hidden"><div style="position:absolute;left:1.6px;top:-0.84px;line-height:20px;height:20px;font-size:10.8px;letter-spacing:0;color:#333;white-space:nowrap">0027908</div></div>
<div style="position:absolute;left:102px;top:36px;width:41.5px;height:17px;overflow:hidden"><div style="position:absolute;left:1.6px;top:-0.84px;line-height:20px;height:20px;font-size:10.8px;letter-spacing:0;color:#333;white-space:nowrap">9<span style="margin:0 0.55px">/</span>4<span style="margin:0 0.55px">/</span>2020</div></div>
<div style="position:absolute;left:146px;top:36px;width:40.5px;height:17px;overflow:hidden"><div style="position:absolute;left:1.6px;top:-0.84px;line-height:20px;height:20px;font-size:10.8px;letter-spacing:0;color:#333;white-space:nowrap"></div></div>
<div style="position:absolute;left:189px;top:36px;width:232.5px;height:17px;overflow:hidden"><div style="position:absolute;left:1.6px;top:-0.74px;line-height:20px;height:20px;font-size:10.5px;letter-spacing:-0.2px;color:#333;white-space:nowrap">ΑΓΙΑΡΕΝΤΗΣ ΝΙΚΟΛΑΟΣ</div></div>
<div style="position:absolute;left:424px;top:36px;width:45.5px;height:17px;overflow:hidden"><div style="position:absolute;left:1.6px;top:-0.84px;line-height:20px;height:20px;font-size:10.8px;letter-spacing:0;color:#333;white-space:nowrap">0101320 345</div></div>
<div style="position:absolute;left:472px;top:36px;width:41.5px;height:17px;overflow:hidden"><div style="position:absolute;left:1.6px;top:-0.84px;line-height:20px;height:20px;font-size:10.8px;letter-spacing:0;color:#333;white-space:nowrap">1<span style="margin:0 0.55px">/</span>1<span style="margin:0 0.55px">/</span>1932</div></div>
<div style="position:absolute;left:516px;top:36px;width:115.5px;height:17px;overflow:hidden"><div style="position:absolute;left:1.6px;top:-0.74px;line-height:20px;height:20px;font-size:10.5px;letter-spacing:-0.2px;color:#333;white-space:nowrap">ΓΕΩΡΓΙΟΣ</div></div>
<div style="position:absolute;left:634px;top:36px;width:232.5px;height:17px;overflow:hidden"><div style="position:absolute;left:1.6px;top:-0.74px;line-height:20px;height:20px;font-size:10.5px;letter-spacing:-0.2px;color:#333;white-space:nowrap">ΛΑΡΙΣΑΙΩΝ</div></div>
<div style="position:absolute;left:869px;top:36px;width:232.5px;height:17px;overflow:hidden"><div style="position:absolute;left:1.6px;top:-0.74px;line-height:20px;height:20px;font-size:10.5px;letter-spacing:-0.2px;color:#333;white-space:nowrap">ΓΑΤΙΔΗΣ ΓΕΩΡΓΙΟΣ</div></div>
<div style="position:absolute;left:1104px;top:36px;width:232.5px;height:17px;overflow:hidden"><div style="position:absolute;left:1.6px;top:-0.74px;line-height:20px;height:20px;font-size:10.5px;letter-spacing:-0.2px;color:#333;white-space:nowrap">ΕΟΠΥΥ</div></div>
<div style="position:absolute;left:1339px;top:36px;width:115.5px;height:17px;overflow:hidden"><div style="position:absolute;left:1.6px;top:-0.74px;line-height:20px;height:20px;font-size:10.5px;letter-spacing:-0.2px;color:#333;white-space:nowrap">ΤΡΙΚΛΙΝΟ Ββ</div></div>
<div style="position:absolute;left:1457px;top:36px;width:45.5px;height:17px;overflow:hidden"><div style="position:absolute;left:1.6px;top:-0.84px;line-height:20px;height:20px;font-size:10.8px;letter-spacing:0;color:#333;white-space:nowrap">103</div></div>
<div style="position:absolute;left:1505px;top:36px;width:232.5px;height:17px;overflow:hidden"><div style="position:absolute;left:1.6px;top:-0.74px;line-height:20px;height:20px;font-size:10.5px;letter-spacing:-0.2px;color:#333;white-space:nowrap">ΝΕΥΡΟΛΟΓΙΚΟ</div></div>
<div style="position:absolute;left:1740px;top:36px;width:45.5px;height:17px;overflow:hidden"><div style="position:absolute;left:1.6px;top:-0.84px;line-height:20px;height:20px;font-size:10.8px;letter-spacing:0;color:#333;white-space:nowrap">I64</div></div>
<div style="position:absolute;left:10px;top:53px;width:1778px;height:1px;background:#d8d8d8"></div>
<div style="position:absolute;left:10px;top:54px;width:18px;height:17px;background:#f0f0f0"></div>
<div style="position:absolute;left:29px;top:54px;width:22.5px;height:17px;overflow:hidden"><div style="position:absolute;left:1.6px;top:-0.74px;line-height:20px;height:20px;font-size:10.5px;letter-spacing:-0.2px;color:#333;white-space:nowrap">Εσω</div></div>
<div style="position:absolute;left:54px;top:54px;width:45.5px;height:17px;overflow:hidden"><div style="position:absolute;left:1.6px;top:-0.84px;line-height:20px;height:20px;font-size:10.8px;letter-spacing:0;color:#333;white-space:nowrap">0028132</div></div>
<div style="position:absolute;left:102px;top:54px;width:41.5px;height:17px;overflow:hidden"><div style="position:absolute;left:1.6px;top:-0.84px;line-height:20px;height:20px;font-size:10.8px;letter-spacing:0;color:#333;white-space:nowrap"> 1<span style="margin:0 0.55px">/</span>5<span style="margin:0 0.55px">/</span>2020</div></div>
<div style="position:absolute;left:146px;top:54px;width:40.5px;height:17px;overflow:hidden"><div style="position:absolute;left:1.6px;top:-0.84px;line-height:20px;height:20px;font-size:10.8px;letter-spacing:0;color:#333;white-space:nowrap"></div></div>
<div style="position:absolute;left:189px;top:54px;width:232.5px;height:17px;overflow:hidden"><div style="position:absolute;left:1.6px;top:-0.74px;line-height:20px;height:20px;font-size:10.5px;letter-spacing:-0.2px;color:#333;white-space:nowrap">ΑΔΟΥΚΑ ΕΙΡΗΝΗ</div></div>
<div style="position:absolute;left:424px;top:54px;width:45.5px;height:17px;overflow:hidden"><div style="position:absolute;left:1.6px;top:-0.84px;line-height:20px;height:20px;font-size:10.8px;letter-spacing:0;color:#333;white-space:nowrap">01018730345</div></div>
<div style="position:absolute;left:472px;top:54px;width:41.5px;height:17px;overflow:hidden"><div style="position:absolute;left:1.6px;top:-0.84px;line-height:20px;height:20px;font-size:10.8px;letter-spacing:0;color:#333;white-space:nowrap">1<span style="margin:0 0.55px">/</span>1<span style="margin:0 0.55px">/</span>1987</div></div>
<div style="position:absolute;left:516px;top:54px;width:115.5px;height:17px;overflow:hidden"><div style="position:absolute;left:1.6px;top:-0.74px;line-height:20px;height:20px;font-size:10.5px;letter-spacing:-0.2px;color:#333;white-space:nowrap">ΓΕΩΡΓΙΟΣ</div></div>
<div style="position:absolute;left:634px;top:54px;width:232.5px;height:17px;overflow:hidden"><div style="position:absolute;left:1.6px;top:-0.74px;line-height:20px;height:20px;font-size:10.5px;letter-spacing:-0.2px;color:#333;white-space:nowrap">ΒΟΛΟΥ</div></div>
<div style="position:absolute;left:869px;top:54px;width:232.5px;height:17px;overflow:hidden"><div style="position:absolute;left:1.6px;top:-0.74px;line-height:20px;height:20px;font-size:10.5px;letter-spacing:-0.2px;color:#333;white-space:nowrap">ΓΑΤΙΔΗΣ ΓΕΩΡΓΙΟΣ</div></div>
<div style="position:absolute;left:1104px;top:54px;width:232.5px;height:17px;overflow:hidden"><div style="position:absolute;left:1.6px;top:-0.74px;line-height:20px;height:20px;font-size:10.5px;letter-spacing:-0.2px;color:#333;white-space:nowrap">ΙΔΙΩΤΗΣ</div></div>
<div style="position:absolute;left:1339px;top:54px;width:115.5px;height:17px;overflow:hidden"><div style="position:absolute;left:1.6px;top:-0.74px;line-height:20px;height:20px;font-size:10.5px;letter-spacing:-0.2px;color:#333;white-space:nowrap">ΤΕΤΡΑΚΛΙΝΟ Γ</div></div>
<div style="position:absolute;left:1457px;top:54px;width:45.5px;height:17px;overflow:hidden"><div style="position:absolute;left:1.6px;top:-0.84px;line-height:20px;height:20px;font-size:10.8px;letter-spacing:0;color:#333;white-space:nowrap">102</div></div>
<div style="position:absolute;left:1505px;top:54px;width:232.5px;height:17px;overflow:hidden"><div style="position:absolute;left:1.6px;top:-0.74px;line-height:20px;height:20px;font-size:10.5px;letter-spacing:-0.2px;color:#333;white-space:nowrap">ΚΛΙΝΙΚΗ</div></div>
<div style="position:absolute;left:1740px;top:54px;width:45.5px;height:17px;overflow:hidden"><div style="position:absolute;left:1.6px;top:-0.84px;line-height:20px;height:20px;font-size:10.8px;letter-spacing:0;color:#333;white-space:nowrap"></div></div>
<div style="position:absolute;left:10px;top:71px;width:1778px;height:1px;background:#d8d8d8"></div>
<div style="position:absolute;left:10px;top:72px;width:18px;height:17px;background:#f0f0f0"></div>
<div style="position:absolute;left:29px;top:72px;width:22.5px;height:17px;overflow:hidden"><div style="position:absolute;left:1.6px;top:-0.74px;line-height:20px;height:20px;font-size:10.5px;letter-spacing:-0.2px;color:#333;white-space:nowrap">Εσω</div></div>
<div style="position:absolute;left:54px;top:72px;width:45.5px;height:17px;overflow:hidden"><div style="position:absolute;left:1.6px;top:-0.84px;line-height:20px;height:20px;font-size:10.8px;letter-spacing:0;color:#333;white-space:nowrap">0028070</div></div>
<div style="position:absolute;left:102px;top:72px;width:41.5px;height:17px;overflow:hidden"><div style="position:absolute;left:1.6px;top:-0.84px;line-height:20px;height:20px;font-size:10.8px;letter-spacing:0;color:#333;white-space:nowrap">23<span style="margin:0 0.55px">/</span>4<span style="margin:0 0.55px">/</span>2020</div></div>
<div style="position:absolute;left:146px;top:72px;width:40.5px;height:17px;overflow:hidden"><div style="position:absolute;left:1.6px;top:-0.84px;line-height:20px;height:20px;font-size:10.8px;letter-spacing:0;color:#333;white-space:nowrap"></div></div>
<div style="position:absolute;left:189px;top:72px;width:232.5px;height:17px;overflow:hidden"><div style="position:absolute;left:1.6px;top:-0.74px;line-height:20px;height:20px;font-size:10.5px;letter-spacing:-0.2px;color:#333;white-space:nowrap">ΑΔΡΑΚΤΑ ΔΗΜΗΤΡΑ</div></div>
<div style="position:absolute;left:424px;top:72px;width:45.5px;height:17px;overflow:hidden"><div style="position:absolute;left:1.6px;top:-0.84px;line-height:20px;height:20px;font-size:10.8px;letter-spacing:0;color:#333;white-space:nowrap">0101330 345</div></div>
<div style="position:absolute;left:472px;top:72px;width:41.5px;height:17px;overflow:hidden"><div style="position:absolute;left:1.6px;top:-0.84px;line-height:20px;height:20px;font-size:10.8px;letter-spacing:0;color:#333;white-space:nowrap">1<span style="margin:0 0.55px">/</span>1<span style="margin:0 0.55px">/</span>1933</div></div>
<div style="position:absolute;left:516px;top:72px;width:115.5px;height:17px;overflow:hidden"><div style="position:absolute;left:1.6px;top:-0.74px;line-height:20px;height:20px;font-size:10.5px;letter-spacing:-0.2px;color:#333;white-space:nowrap">ΓΕΩΡΓΙΟΣ</div></div>
<div style="position:absolute;left:634px;top:72px;width:232.5px;height:17px;overflow:hidden"><div style="position:absolute;left:1.6px;top:-0.74px;line-height:20px;height:20px;font-size:10.5px;letter-spacing:-0.2px;color:#333;white-space:nowrap">ΛΑΡΙΣΑΙΩΝ</div></div>
<div style="position:absolute;left:869px;top:72px;width:232.5px;height:17px;overflow:hidden"><div style="position:absolute;left:1.6px;top:-0.74px;line-height:20px;height:20px;font-size:10.5px;letter-spacing:-0.2px;color:#333;white-space:nowrap">ΓΑΤΙΔΗΣ ΓΕΩΡΓΙΟΣ</div></div>
<div style="position:absolute;left:1104px;top:72px;width:232.5px;height:17px;overflow:hidden"><div style="position:absolute;left:1.6px;top:-0.74px;line-height:20px;height:20px;font-size:10.5px;letter-spacing:-0.2px;color:#333;white-space:nowrap">ΕΟΠΥΥ</div></div>
<div style="position:absolute;left:1339px;top:72px;width:115.5px;height:17px;overflow:hidden"><div style="position:absolute;left:1.6px;top:-0.74px;line-height:20px;height:20px;font-size:10.5px;letter-spacing:-0.2px;color:#333;white-space:nowrap">ΔΙΚΛΙΝΟ Βα</div></div>
<div style="position:absolute;left:1457px;top:72px;width:45.5px;height:17px;overflow:hidden"><div style="position:absolute;left:1.6px;top:-0.84px;line-height:20px;height:20px;font-size:10.8px;letter-spacing:0;color:#333;white-space:nowrap">305</div></div>
<div style="position:absolute;left:1505px;top:72px;width:232.5px;height:17px;overflow:hidden"><div style="position:absolute;left:1.6px;top:-0.74px;line-height:20px;height:20px;font-size:10.5px;letter-spacing:-0.2px;color:#333;white-space:nowrap">ΧΕΙΡΟΥΡΓΙΚΟ</div></div>
<div style="position:absolute;left:1740px;top:72px;width:45.5px;height:17px;overflow:hidden"><div style="position:absolute;left:1.6px;top:-0.84px;line-height:20px;height:20px;font-size:10.8px;letter-spacing:0;color:#333;white-space:nowrap">R10</div></div>
<div style="position:absolute;left:10px;top:89px;width:1778px;height:1px;background:#d8d8d8"></div>
<div style="position:absolute;left:10px;top:90px;width:18px;height:17px;background:#f0f0f0"></div>
<div style="position:absolute;left:29px;top:90px;width:22.5px;height:17px;overflow:hidden"><div style="position:absolute;left:1.6px;top:-0.74px;line-height:20px;height:20px;font-size:10.5px;letter-spacing:-0.2px;color:#333;white-space:nowrap">Εσω</div></div>
<div style="position:absolute;left:54px;top:90px;width:45.5px;height:17px;overflow:hidden"><div style="position:absolute;left:1.6px;top:-0.84px;line-height:20px;height:20px;font-size:10.8px;letter-spacing:0;color:#333;white-space:nowrap">0028039</div></div>
<div style="position:absolute;left:102px;top:90px;width:41.5px;height:17px;overflow:hidden"><div style="position:absolute;left:1.6px;top:-0.84px;line-height:20px;height:20px;font-size:10.8px;letter-spacing:0;color:#333;white-space:nowrap">22<span style="margin:0 0.55px">/</span>4<span style="margin:0 0.55px">/</span>2020</div></div>
<div style="position:absolute;left:146px;top:90px;width:40.5px;height:17px;overflow:hidden"><div style="position:absolute;left:1.6px;top:-0.84px;line-height:20px;height:20px;font-size:10.8px;letter-spacing:0;color:#333;white-space:nowrap"></div></div>
<div style="position:absolute;left:189px;top:90px;width:232.5px;height:17px;overflow:hidden"><div style="position:absolute;left:1.6px;top:-0.74px;line-height:20px;height:20px;font-size:10.5px;letter-spacing:-0.2px;color:#333;white-space:nowrap">ΑΕΤΟΠΟΥΛΙΔΟΥ ΜΑΡΙΑ</div></div>
<div style="position:absolute;left:424px;top:90px;width:45.5px;height:17px;overflow:hidden"><div style="position:absolute;left:1.6px;top:-0.84px;line-height:20px;height:20px;font-size:10.8px;letter-spacing:0;color:#333;white-space:nowrap">01014503456</div></div>
<div style="position:absolute;left:472px;top:90px;width:41.5px;height:17px;overflow:hidden"><div style="position:absolute;left:1.6px;top:-0.84px;line-height:20px;height:20px;font-size:10.8px;letter-spacing:0;color:#333;white-space:nowrap">1<span style="margin:0 0.55px">/</span>1<span style="margin:0 0.55px">/</span>1945</div></div>
<div style="position:absolute;left:516px;top:90px;width:115.5px;height:17px;overflow:hidden"><div style="position:absolute;left:1.6px;top:-0.74px;line-height:20px;height:20px;font-size:10.5px;letter-spacing:-0.2px;color:#333;white-space:nowrap">ΓΕΩΡΓΙΟΣ</div></div>
<div style="position:absolute;left:634px;top:90px;width:232.5px;height:17px;overflow:hidden"><div style="position:absolute;left:1.6px;top:-0.74px;line-height:20px;height:20px;font-size:10.5px;letter-spacing:-0.2px;color:#333;white-space:nowrap">ΛΑΡΙΣΑΙΩΝ</div></div>
<div style="position:absolute;left:869px;top:90px;width:232.5px;height:17px;overflow:hidden"><div style="position:absolute;left:1.6px;top:-0.74px;line-height:20px;height:20px;font-size:10.5px;letter-spacing:-0.2px;color:#333;white-space:nowrap">ΓΑΤΙΔΗΣ ΓΕΩΡΓΙΟΣ</div></div>
<div style="position:absolute;left:1104px;top:90px;width:232.5px;height:17px;overflow:hidden"><div style="position:absolute;left:1.6px;top:-0.74px;line-height:20px;height:20px;font-size:10.5px;letter-spacing:-0.2px;color:#333;white-space:nowrap">ΕΟΠΥΥ</div></div>
<div style="position:absolute;left:1339px;top:90px;width:115.5px;height:17px;overflow:hidden"><div style="position:absolute;left:1.6px;top:-0.74px;line-height:20px;height:20px;font-size:10.5px;letter-spacing:-0.2px;color:#333;white-space:nowrap">ΔΙΚΛΙΝΟ Βα</div></div>
<div style="position:absolute;left:1457px;top:90px;width:45.5px;height:17px;overflow:hidden"><div style="position:absolute;left:1.6px;top:-0.84px;line-height:20px;height:20px;font-size:10.8px;letter-spacing:0;color:#333;white-space:nowrap">404</div></div>
<div style="position:absolute;left:1505px;top:90px;width:232.5px;height:17px;overflow:hidden"><div style="position:absolute;left:1.6px;top:-0.74px;line-height:20px;height:20px;font-size:10.5px;letter-spacing:-0.2px;color:#333;white-space:nowrap">ΟΡΘΟΠΕΔΙΚΟ</div></div>
<div style="position:absolute;left:1740px;top:90px;width:45.5px;height:17px;overflow:hidden"><div style="position:absolute;left:1.6px;top:-0.84px;line-height:20px;height:20px;font-size:10.8px;letter-spacing:0;color:#333;white-space:nowrap">S32.4</div></div>
<div style="position:absolute;left:10px;top:107px;width:1778px;height:1px;background:#d8d8d8"></div>
<div style="position:absolute;left:10px;top:108px;width:18px;height:17px;background:#f0f0f0"></div>
<div style="position:absolute;left:29px;top:108px;width:22.5px;height:17px;overflow:hidden"><div style="position:absolute;left:1.6px;top:-0.74px;line-height:20px;height:20px;font-size:10.5px;letter-spacing:-0.2px;color:#333;white-space:nowrap">Εσω</div></div>
<div style="position:absolute;left:54px;top:108px;width:45.5px;height:17px;overflow:hidden"><div style="position:absolute;left:1.6px;top:-0.84px;line-height:20px;height:20px;font-size:10.8px;letter-spacing:0;color:#333;white-space:nowrap">0028114</div></div>
<div style="position:absolute;left:102px;top:108px;width:41.5px;height:17px;overflow:hidden"><div style="position:absolute;left:1.6px;top:-0.84px;line-height:20px;height:20px;font-size:10.8px;letter-spacing:0;color:#333;white-space:nowrap">27<span style="margin:0 0.55px">/</span>4<span style="margin:0 0.55px">/</span>2020</div></div>
<div style="position:absolute;left:146px;top:108px;width:40.5px;height:17px;overflow:hidden"><div style="position:absolute;left:1.6px;top:-0.84px;line-height:20px;height:20px;font-size:10.8px;letter-spacing:0;color:#333;white-space:nowrap"></div></div>
<div style="position:absolute;left:189px;top:108px;width:232.5px;height:17px;overflow:hidden"><div style="position:absolute;left:1.6px;top:-0.74px;line-height:20px;height:20px;font-size:10.5px;letter-spacing:-0.2px;color:#333;white-space:nowrap">ΑΖΕΜΠΙΛΑΣ ΚΩΝΣΤΑΝΤΙΝΟΣ</div></div>
<div style="position:absolute;left:424px;top:108px;width:45.5px;height:17px;overflow:hidden"><div style="position:absolute;left:1.6px;top:-0.84px;line-height:20px;height:20px;font-size:10.8px;letter-spacing:0;color:#333;white-space:nowrap">0101490 345</div></div>
<div style="position:absolute;left:472px;top:108px;width:41.5px;height:17px;overflow:hidden"><div style="position:absolute;left:1.6px;top:-0.84px;line-height:20px;height:20px;font-size:10.8px;letter-spacing:0;color:#333;white-space:nowrap">1<span style="margin:0 0.55px">/</span>1<span style="margin:0 0.55px">/</span>1949</div></div>
<div style="position:absolute;left:516px;top:108px;width:115.5px;height:17px;overflow:hidden"><div style="position:absolute;left:1.6px;top:-0.74px;line-height:20px;height:20px;font-size:10.5px;letter-spacing:-0.2px;color:#333;white-space:nowrap">ΓΕΩΡΓΙΟΣ</div></div>
<div style="position:absolute;left:634px;top:108px;width:232.5px;height:17px;overflow:hidden"><div style="position:absolute;left:1.6px;top:-0.74px;line-height:20px;height:20px;font-size:10.5px;letter-spacing:-0.2px;color:#333;white-space:nowrap">ΛΑΡΙΣΑΙΩΝ</div></div>
<div style="position:absolute;left:869px;top:108px;width:232.5px;height:17px;overflow:hidden"><div style="position:absolute;left:1.6px;top:-0.74px;line-height:20px;height:20px;font-size:10.5px;letter-spacing:-0.2px;color:#333;white-space:nowrap">ΓΑΤΙΔΗΣ ΓΕΩΡΓΙΟΣ</div></div>
<div style="position:absolute;left:1104px;top:108px;width:232.5px;height:17px;overflow:hidden"><div style="position:absolute;left:1.6px;top:-0.74px;line-height:20px;height:20px;font-size:10.5px;letter-spacing:-0.2px;color:#333;white-space:nowrap">ΕΟΠΥΥ</div></div>
<div style="position:absolute;left:1339px;top:108px;width:115.5px;height:17px;overflow:hidden"><div style="position:absolute;left:1.6px;top:-0.74px;line-height:20px;height:20px;font-size:10.5px;letter-spacing:-0.2px;color:#333;white-space:nowrap">ΔΙΚΛΙΝΟ Βα</div></div>
<div style="position:absolute;left:1457px;top:108px;width:45.5px;height:17px;overflow:hidden"><div style="position:absolute;left:1.6px;top:-0.84px;line-height:20px;height:20px;font-size:10.8px;letter-spacing:0;color:#333;white-space:nowrap">403</div></div>
<div style="position:absolute;left:1505px;top:108px;width:232.5px;height:17px;overflow:hidden"><div style="position:absolute;left:1.6px;top:-0.74px;line-height:20px;height:20px;font-size:10.5px;letter-spacing:-0.2px;color:#333;white-space:nowrap">ΟΥΡΟΛΟΓΙΚΟ</div></div>
<div style="position:absolute;left:1740px;top:108px;width:45.5px;height:17px;overflow:hidden"><div style="position:absolute;left:1.6px;top:-0.84px;line-height:20px;height:20px;font-size:10.8px;letter-spacing:0;color:#333;white-space:nowrap">R31</div></div>
<div style="position:absolute;left:10px;top:125px;width:1778px;height:1px;background:#d8d8d8"></div>
<div style="position:absolute;left:10px;top:126px;width:18px;height:17px;background:#f0f0f0"></div>
<div style="position:absolute;left:29px;top:126px;width:22.5px;height:17px;overflow:hidden"><div style="position:absolute;left:1.6px;top:-0.74px;line-height:20px;height:20px;font-size:10.5px;letter-spacing:-0.2px;color:#333;white-space:nowrap">Εσω</div></div>
<div style="position:absolute;left:54px;top:126px;width:45.5px;height:17px;overflow:hidden"><div style="position:absolute;left:1.6px;top:-0.84px;line-height:20px;height:20px;font-size:10.8px;letter-spacing:0;color:#333;white-space:nowrap">0027915</div></div>
<div style="position:absolute;left:102px;top:126px;width:41.5px;height:17px;overflow:hidden"><div style="position:absolute;left:1.6px;top:-0.84px;line-height:20px;height:20px;font-size:10.8px;letter-spacing:0;color:#333;white-space:nowrap">10<span style="margin:0 0.55px">/</span>4<span style="margin:0 0.55px">/</span>2020</div></div>
<div style="position:absolute;left:146px;top:126px;width:40.5px;height:17px;overflow:hidden"><div style="position:absolute;left:1.6px;top:-0.84px;line-height:20px;height:20px;font-size:10.8px;letter-spacing:0;color:#333;white-space:nowrap"></div></div>
<div style="position:absolute;left:189px;top:126px;width:232.5px;height:17px;overflow:hidden"><div style="position:absolute;left:1.6px;top:-0.74px;line-height:20px;height:20px;font-size:10.5px;letter-spacing:-0.2px;color:#333;white-space:nowrap">ΑΚΑΛΑΝΤΩΝΗΣ ΘΕΟΔΩΡΟΣ</div></div>
<div style="position:absolute;left:424px;top:126px;width:45.5px;height:17px;overflow:hidden"><div style="position:absolute;left:1.6px;top:-0.84px;line-height:20px;height:20px;font-size:10.8px;letter-spacing:0;color:#333;white-space:nowrap">01014102345</div></div>
<div style="position:absolute;left:472px;top:126px;width:41.5px;height:17px;overflow:hidden"><div style="position:absolute;left:1.6px;top:-0.84px;line-height:20px;height:20px;font-size:10.8px;letter-spacing:0;color:#333;white-space:nowrap">1<span style="margin:0 0.55px">/</span>1<span style="margin:0 0.55px">/</span>1941</div></div>
<div style="position:absolute;left:516px;top:126px;width:115.5px;height:17px;overflow:hidden"><div style="position:absolute;left:1.6px;top:-0.74px;line-height:20px;height:20px;font-size:10.5px;letter-spacing:-0.2px;color:#333;white-space:nowrap">ΓΕΩΡΓΙΟΣ</div></div>
<div style="position:absolute;left:634px;top:126px;width:232.5px;height:17px;overflow:hidden"><div style="position:absolute;left:1.6px;top:-0.74px;line-height:20px;height:20px;font-size:10.5px;letter-spacing:-0.2px;color:#333;white-space:nowrap">ΛΑΡΙΣΑΙΩΝ</div></div>
<div style="position:absolute;left:869px;top:126px;width:232.5px;height:17px;overflow:hidden"><div style="position:absolute;left:1.6px;top:-0.74px;line-height:20px;height:20px;font-size:10.5px;letter-spacing:-0.2px;color:#333;white-space:nowrap">ΓΑΤΙΔΗΣ ΓΕΩΡΓΙΟΣ</div></div>
<div style="position:absolute;left:1104px;top:126px;width:232.5px;height:17px;overflow:hidden"><div style="position:absolute;left:1.6px;top:-0.74px;line-height:20px;height:20px;font-size:10.5px;letter-spacing:-0.2px;color:#333;white-space:nowrap">ΕΟΠΥΥ</div></div>
<div style="position:absolute;left:1339px;top:126px;width:115.5px;height:17px;overflow:hidden"><div style="position:absolute;left:1.6px;top:-0.74px;line-height:20px;height:20px;font-size:10.5px;letter-spacing:-0.2px;color:#333;white-space:nowrap">ΤΡΙΚΛΙΝΟ Ββ</div></div>
<div style="position:absolute;left:1457px;top:126px;width:45.5px;height:17px;overflow:hidden"><div style="position:absolute;left:1.6px;top:-0.84px;line-height:20px;height:20px;font-size:10.8px;letter-spacing:0;color:#333;white-space:nowrap">104</div></div>
<div style="position:absolute;left:1505px;top:126px;width:232.5px;height:17px;overflow:hidden"><div style="position:absolute;left:1.6px;top:-0.74px;line-height:20px;height:20px;font-size:10.5px;letter-spacing:-0.2px;color:#333;white-space:nowrap">ΝΕΥΡΟΛΟΓΙΚΟ</div></div>
<div style="position:absolute;left:1740px;top:126px;width:45.5px;height:17px;overflow:hidden"><div style="position:absolute;left:1.6px;top:-0.84px;line-height:20px;height:20px;font-size:10.8px;letter-spacing:0;color:#333;white-space:nowrap">G30</div></div>
<div style="position:absolute;left:10px;top:143px;width:1778px;height:1px;background:#d8d8d8"></div>
<div style="position:absolute;left:10px;top:144px;width:18px;height:17px;background:#f0f0f0"></div>
<div style="position:absolute;left:29px;top:144px;width:22.5px;height:17px;overflow:hidden"><div style="position:absolute;left:1.6px;top:-0.74px;line-height:20px;height:20px;font-size:10.5px;letter-spacing:-0.2px;color:#333;white-space:nowrap">Εσω</div></div>
<div style="position:absolute;left:54px;top:144px;width:45.5px;height:17px;overflow:hidden"><div style="position:absolute;left:1.6px;top:-0.84px;line-height:20px;height:20px;font-size:10.8px;letter-spacing:0;color:#333;white-space:nowrap">0028005</div></div>
<div style="position:absolute;left:102px;top:144px;width:41.5px;height:17px;overflow:hidden"><div style="position:absolute;left:1.6px;top:-0.84px;line-height:20px;height:20px;font-size:10.8px;letter-spacing:0;color:#333;white-space:nowrap">18<span style="margin:0 0.55px">/</span>4<span style="margin:0 0.55px">/</span>2020</div></div>
<div style="position:absolute;left:146px;top:144px;width:40.5px;height:17px;overflow:hidden"><div style="position:absolute;left:1.6px;top:-0.84px;line-height:20px;height:20px;font-size:10.8px;letter-spacing:0;color:#333;white-space:nowrap"></div></div>
<div style="position:absolute;left:189px;top:144px;width:232.5px;height:17px;overflow:hidden"><div style="position:absolute;left:1.6px;top:-0.74px;line-height:20px;height:20px;font-size:10.5px;letter-spacing:-0.2px;color:#333;white-space:nowrap">ΑΚΑΛΟΡΙΖΟΥ ΕΙΡΗΝΗ</div></div>
<div style="position:absolute;left:424px;top:144px;width:45.5px;height:17px;overflow:hidden"><div style="position:absolute;left:1.6px;top:-0.84px;line-height:20px;height:20px;font-size:10.8px;letter-spacing:0;color:#333;white-space:nowrap">01014203456</div></div>
<div style="position:absolute;left:472px;top:144px;width:41.5px;height:17px;overflow:hidden"><div style="position:absolute;left:1.6px;top:-0.84px;line-height:20px;height:20px;font-size:10.8px;letter-spacing:0;color:#333;white-space:nowrap">1<span style="margin:0 0.55px">/</span>1<span style="margin:0 0.55px">/</span>1942</div></div>
<div style="position:absolute;left:516px;top:144px;width:115.5px;height:17px;overflow:hidden"><div style="position:absolute;left:1.6px;top:-0.74px;line-height:20px;height:20px;font-size:10.5px;letter-spacing:-0.2px;color:#333;white-space:nowrap">ΓΕΩΡΓΙΟΣ</div></div>
<div style="position:absolute;left:634px;top:144px;width:232.5px;height:17px;overflow:hidden"><div style="position:absolute;left:1.6px;top:-0.74px;line-height:20px;height:20px;font-size:10.5px;letter-spacing:-0.2px;color:#333;white-space:nowrap">ΛΑΡΙΣΑΙΩΝ</div></div>
<div style="position:absolute;left:869px;top:144px;width:232.5px;height:17px;overflow:hidden"><div style="position:absolute;left:1.6px;top:-0.74px;line-height:20px;height:20px;font-size:10.5px;letter-spacing:-0.2px;color:#333;white-space:nowrap">ΓΑΤΙΔΗΣ ΓΕΩΡΓΙΟΣ</div></div>
<div style="position:absolute;left:1104px;top:144px;width:232.5px;height:17px;overflow:hidden"><div style="position:absolute;left:1.6px;top:-0.74px;line-height:20px;height:20px;font-size:10.5px;letter-spacing:-0.2px;color:#333;white-space:nowrap">ΕΟΠΥΥ</div></div>
<div style="position:absolute;left:1339px;top:144px;width:115.5px;height:17px;overflow:hidden"><div style="position:absolute;left:1.6px;top:-0.74px;line-height:20px;height:20px;font-size:10.5px;letter-spacing:-0.2px;color:#333;white-space:nowrap">ΠΕΝΤΑΚΛΙΝΟ Γ</div></div>
<div style="position:absolute;left:1457px;top:144px;width:45.5px;height:17px;overflow:hidden"><div style="position:absolute;left:1.6px;top:-0.84px;line-height:20px;height:20px;font-size:10.8px;letter-spacing:0;color:#333;white-space:nowrap">108</div></div>
<div style="position:absolute;left:1505px;top:144px;width:232.5px;height:17px;overflow:hidden"><div style="position:absolute;left:1.6px;top:-0.74px;line-height:20px;height:20px;font-size:10.5px;letter-spacing:-0.2px;color:#333;white-space:nowrap">ΝΕΦΡΟΛΟΓΙΚΟ</div></div>
<div style="position:absolute;left:1740px;top:144px;width:45.5px;height:17px;overflow:hidden"><div style="position:absolute;left:1.6px;top:-0.84px;line-height:20px;height:20px;font-size:10.8px;letter-spacing:0;color:#333;white-space:nowrap">N18</div></div>
<div style="position:absolute;left:10px;top:161px;width:1778px;height:1px;background:#d8d8d8"></div>
<div style="position:absolute;left:10px;top:162px;width:18px;height:17px;background:#f0f0f0"></div>
<div style="position:absolute;left:29px;top:162px;width:22.5px;height:17px;overflow:hidden"><div style="position:absolute;left:1.6px;top:-0.74px;line-height:20px;height:20px;font-size:10.5px;letter-spacing:-0.2px;color:#333;white-space:nowrap">Εσω</div></div>
<div style="position:absolute;left:54px;top:162px;width:45.5px;height:17px;overflow:hidden"><div style="position:absolute;left:1.6px;top:-0.84px;line-height:20px;height:20px;font-size:10.8px;letter-spacing:0;color:#333;white-space:nowrap">0027837</div></div>
<div style="position:absolute;left:102px;top:162px;width:41.5px;height:17px;overflow:hidden"><div style="position:absolute;left:1.6px;top:-0.84px;line-height:20px;height:20px;font-size:10.8px;letter-spacing:0;color:#333;white-space:nowrap">3<span style="margin:0 0.55px">/</span>4<span style="margin:0 0.55px">/</span>2020</div></div>
<div style="position:absolute;left:146px;top:162px;width:40.5px;height:17px;overflow:hidden"><div style="position:absolute;left:1.6px;top:-0.84px;line-height:20px;height:20px;font-size:10.8px;letter-spacing:0;color:#333;white-space:nowrap"></div></div>
<div style="position:absolute;left:189px;top:162px;width:232.5px;height:17px;overflow:hidden"><div style="position:absolute;left:1.6px;top:-0.74px;line-height:20px;height:20px;font-size:10.5px;letter-spacing:-0.2px;color:#333;white-space:nowrap">ΑΚΑΜΑΤΡΟΣ ΕΥΑΓΓΕΛΟΣ</div></div>
<div style="position:absolute;left:424px;top:162px;width:45.5px;height:17px;overflow:hidden"><div style="position:absolute;left:1.6px;top:-0.84px;line-height:20px;height:20px;font-size:10.8px;letter-spacing:0;color:#333;white-space:nowrap">01013103456</div></div>
<div style="position:absolute;left:472px;top:162px;width:41.5px;height:17px;overflow:hidden"><div style="position:absolute;left:1.6px;top:-0.84px;line-height:20px;height:20px;font-size:10.8px;letter-spacing:0;color:#333;white-space:nowrap">1<span style="margin:0 0.55px">/</span>1<span style="margin:0 0.55px">/</span>1931</div></div>
<div style="position:absolute;left:516px;top:162px;width:115.5px;height:17px;overflow:hidden"><div style="position:absolute;left:1.6px;top:-0.74px;line-height:20px;height:20px;font-size:10.5px;letter-spacing:-0.2px;color:#333;white-space:nowrap">ΔΗΜΗΤΡΙΟΣ</div></div>
<div style="position:absolute;left:634px;top:162px;width:232.5px;height:17px;overflow:hidden"><div style="position:absolute;left:1.6px;top:-0.74px;line-height:20px;height:20px;font-size:10.5px;letter-spacing:-0.2px;color:#333;white-space:nowrap">ΛΑΡΙΣΑΙΩΝ</div></div>
<div style="position:absolute;left:869px;top:162px;width:232.5px;height:17px;overflow:hidden"><div style="position:absolute;left:1.6px;top:-0.74px;line-height:20px;height:20px;font-size:10.5px;letter-spacing:-0.2px;color:#333;white-space:nowrap">ΓΑΤΙΔΗΣ ΓΕΩΡΓΙΟΣ</div></div>
<div style="position:absolute;left:1104px;top:162px;width:232.5px;height:17px;overflow:hidden"><div style="position:absolute;left:1.6px;top:-0.74px;line-height:20px;height:20px;font-size:10.5px;letter-spacing:-0.2px;color:#333;white-space:nowrap">ΕΟΠΥΥ</div></div>
<div style="position:absolute;left:1339px;top:162px;width:115.5px;height:17px;overflow:hidden"><div style="position:absolute;left:1.6px;top:-0.74px;line-height:20px;height:20px;font-size:10.5px;letter-spacing:-0.2px;color:#333;white-space:nowrap">ΤΡΙΚΛΙΝΟ Ββ</div></div>
<div style="position:absolute;left:1457px;top:162px;width:45.5px;height:17px;overflow:hidden"><div style="position:absolute;left:1.6px;top:-0.84px;line-height:20px;height:20px;font-size:10.8px;letter-spacing:0;color:#333;white-space:nowrap">103</div></div>
<div style="position:absolute;left:1505px;top:162px;width:232.5px;height:17px;overflow:hidden"><div style="position:absolute;left:1.6px;top:-0.74px;line-height:20px;height:20px;font-size:10.5px;letter-spacing:-0.2px;color:#333;white-space:nowrap">ΠΑΘΟΛΟΓΙΚΟ</div></div>
<div style="position:absolute;left:1740px;top:162px;width:45.5px;height:17px;overflow:hidden"><div style="position:absolute;left:1.6px;top:-0.84px;line-height:20px;height:20px;font-size:10.8px;letter-spacing:0;color:#333;white-space:nowrap">R53</div></div>
<div style="position:absolute;left:10px;top:179px;width:1778px;height:1px;background:#d8d8d8"></div>
<div style="position:absolute;left:10px;top:180px;width:18px;height:17px;background:#f0f0f0"></div>
<div style="position:absolute;left:29px;top:180px;width:22.5px;height:17px;overflow:hidden"><div style="position:absolute;left:1.6px;top:-0.74px;line-height:20px;height:20px;font-size:10.5px;letter-spacing:-0.2px;color:#333;white-space:nowrap">Εσω</div></div>
<div style="position:absolute;left:54px;top:180px;width:45.5px;height:17px;overflow:hidden"><div style="position:absolute;left:1.6px;top:-0.84px;line-height:20px;height:20px;font-size:10.8px;letter-spacing:0;color:#333;white-space:nowrap">0027857</div></div>
<div style="position:absolute;left:102px;top:180px;width:41.5px;height:17px;overflow:hidden"><div style="position:absolute;left:1.6px;top:-0.84px;line-height:20px;height:20px;font-size:10.8px;letter-spacing:0;color:#333;white-space:nowrap">7<span style="margin:0 0.55px">/</span>4<span style="margin:0 0.55px">/</span>2020</div></div>
<div style="position:absolute;left:146px;top:180px;width:40.5px;height:17px;overflow:hidden"><div style="position:absolute;left:1.6px;top:-0.84px;line-height:20px;height:20px;font-size:10.8px;letter-spacing:0;color:#333;white-space:nowrap"></div></div>
<div style="position:absolute;left:189px;top:180px;width:232.5px;height:17px;overflow:hidden"><div style="position:absolute;left:1.6px;top:-0.74px;line-height:20px;height:20px;font-size:10.5px;letter-spacing:-0.2px;color:#333;white-space:nowrap">ΑΚΑΡΑΓΙΑΝΝΗ ΒΑΣΙΛΙΚΗ</div></div>
<div style="position:absolute;left:424px;top:180px;width:45.5px;height:17px;overflow:hidden"><div style="position:absolute;left:1.6px;top:-0.84px;line-height:20px;height:20px;font-size:10.8px;letter-spacing:0;color:#333;white-space:nowrap">0101310 345</div></div>
<div style="position:absolute;left:472px;top:180px;width:41.5px;height:17px;overflow:hidden"><div style="position:absolute;left:1.6px;top:-0.84px;line-height:20px;height:20px;font-size:10.8px;letter-spacing:0;color:#333;white-space:nowrap">1<span style="margin:0 0.55px">/</span>1<span style="margin:0 0.55px">/</span>1931</div></div>
<div style="position:absolute;left:516px;top:180px;width:115.5px;height:17px;overflow:hidden"><div style="position:absolute;left:1.6px;top:-0.74px;line-height:20px;height:20px;font-size:10.5px;letter-spacing:-0.2px;color:#333;white-space:nowrap">ΓΕΩΡΓΙΟΣ</div></div>
<div style="position:absolute;left:634px;top:180px;width:232.5px;height:17px;overflow:hidden"><div style="position:absolute;left:1.6px;top:-0.74px;line-height:20px;height:20px;font-size:10.5px;letter-spacing:-0.2px;color:#333;white-space:nowrap">ΛΑΡΙΣΑΙΩΝ</div></div>
<div style="position:absolute;left:869px;top:180px;width:232.5px;height:17px;overflow:hidden"><div style="position:absolute;left:1.6px;top:-0.74px;line-height:20px;height:20px;font-size:10.5px;letter-spacing:-0.2px;color:#333;white-space:nowrap">ΓΑΤΙΔΗΣ ΓΕΩΡΓΙΟΣ</div></div>
<div style="position:absolute;left:1104px;top:180px;width:232.5px;height:17px;overflow:hidden"><div style="position:absolute;left:1.6px;top:-0.74px;line-height:20px;height:20px;font-size:10.5px;letter-spacing:-0.2px;color:#333;white-space:nowrap">ΕΟΠΥΥ</div></div>
<div style="position:absolute;left:1339px;top:180px;width:115.5px;height:17px;overflow:hidden"><div style="position:absolute;left:1.6px;top:-0.74px;line-height:20px;height:20px;font-size:10.5px;letter-spacing:-0.2px;color:#333;white-space:nowrap">ΤΡΙΚΛΙΝΟ Γ</div></div>
<div style="position:absolute;left:1457px;top:180px;width:45.5px;height:17px;overflow:hidden"><div style="position:absolute;left:1.6px;top:-0.84px;line-height:20px;height:20px;font-size:10.8px;letter-spacing:0;color:#333;white-space:nowrap">102</div></div>
<div style="position:absolute;left:1505px;top:180px;width:232.5px;height:17px;overflow:hidden"><div style="position:absolute;left:1.6px;top:-0.74px;line-height:20px;height:20px;font-size:10.5px;letter-spacing:-0.2px;color:#333;white-space:nowrap">ΠΑΘΟΛΟΓΙΚΟ</div></div>
<div style="position:absolute;left:1740px;top:180px;width:45.5px;height:17px;overflow:hidden"><div style="position:absolute;left:1.6px;top:-0.84px;line-height:20px;height:20px;font-size:10.8px;letter-spacing:0;color:#333;white-space:nowrap">R53</div></div>
<div style="position:absolute;left:10px;top:197px;width:1778px;height:1px;background:#d8d8d8"></div>
<div style="position:absolute;left:10px;top:198px;width:18px;height:17px;background:#f0f0f0"></div>
<div style="position:absolute;left:29px;top:198px;width:22.5px;height:17px;overflow:hidden"><div style="position:absolute;left:1.6px;top:-0.74px;line-height:20px;height:20px;font-size:10.5px;letter-spacing:-0.2px;color:#333;white-space:nowrap">Εσω</div></div>
<div style="position:absolute;left:54px;top:198px;width:45.5px;height:17px;overflow:hidden"><div style="position:absolute;left:1.6px;top:-0.84px;line-height:20px;height:20px;font-size:10.8px;letter-spacing:0;color:#333;white-space:nowrap">0027925</div></div>
<div style="position:absolute;left:102px;top:198px;width:41.5px;height:17px;overflow:hidden"><div style="position:absolute;left:1.6px;top:-0.84px;line-height:20px;height:20px;font-size:10.8px;letter-spacing:0;color:#333;white-space:nowrap">11<span style="margin:0 0.55px">/</span>4<span style="margin:0 0.55px">/</span>2020</div></div>
<div style="position:absolute;left:146px;top:198px;width:40.5px;height:17px;overflow:hidden"><div style="position:absolute;left:1.6px;top:-0.84px;line-height:20px;height:20px;font-size:10.8px;letter-spacing:0;color:#333;white-space:nowrap"></div></div>
<div style="position:absolute;left:189px;top:198px;width:232.5px;height:17px;overflow:hidden"><div style="position:absolute;left:1.6px;top:-0.74px;line-height:20px;height:20px;font-size:10.5px;letter-spacing:-0.2px;color:#333;white-space:nowrap">ΑΚΑΤΣΑΡΟΣ ΗΛΙΑΣ</div></div>
<div style="position:absolute;left:424px;top:198px;width:45.5px;height:17px;overflow:hidden"><div style="position:absolute;left:1.6px;top:-0.84px;line-height:20px;height:20px;font-size:10.8px;letter-spacing:0;color:#333;white-space:nowrap">01014402345</div></div>
<div style="position:absolute;left:472px;top:198px;width:41.5px;height:17px;overflow:hidden"><div style="position:absolute;left:1.6px;top:-0.84px;line-height:20px;height:20px;font-size:10.8px;letter-spacing:0;color:#333;white-space:nowrap">1<span style="margin:0 0.55px">/</span>1<span style="margin:0 0.55px">/</span>1944</div></div>
<div style="position:absolute;left:516px;top:198px;width:115.5px;height:17px;overflow:hidden"><div style="position:absolute;left:1.6px;top:-0.74px;line-height:20px;height:20px;font-size:10.5px;letter-spacing:-0.2px;color:#333;white-space:nowrap">ΓΕΩΡΓΙΟΣ</div></div>
<div style="position:absolute;left:634px;top:198px;width:232.5px;height:17px;overflow:hidden"><div style="position:absolute;left:1.6px;top:-0.74px;line-height:20px;height:20px;font-size:10.5px;letter-spacing:-0.2px;color:#333;white-space:nowrap">ΛΑΡΙΣΑΙΩΝ</div></div>
<div style="position:absolute;left:869px;top:198px;width:232.5px;height:17px;overflow:hidden"><div style="position:absolute;left:1.6px;top:-0.74px;line-height:20px;height:20px;font-size:10.5px;letter-spacing:-0.2px;color:#333;white-space:nowrap">ΓΑΤΙΔΗΣ ΓΕΩΡΓΙΟΣ</div></div>
<div style="position:absolute;left:1104px;top:198px;width:232.5px;height:17px;overflow:hidden"><div style="position:absolute;left:1.6px;top:-0.74px;line-height:20px;height:20px;font-size:10.5px;letter-spacing:-0.2px;color:#333;white-space:nowrap">ΕΟΠΥΥ</div></div>
<div style="position:absolute;left:1339px;top:198px;width:115.5px;height:17px;overflow:hidden"><div style="position:absolute;left:1.6px;top:-0.74px;line-height:20px;height:20px;font-size:10.5px;letter-spacing:-0.2px;color:#333;white-space:nowrap">ΤΡΙΚΛΙΝΟ Ββ</div></div>
<div style="position:absolute;left:1457px;top:198px;width:45.5px;height:17px;overflow:hidden"><div style="position:absolute;left:1.6px;top:-0.84px;line-height:20px;height:20px;font-size:10.8px;letter-spacing:0;color:#333;white-space:nowrap">104</div></div>
<div style="position:absolute;left:1505px;top:198px;width:232.5px;height:17px;overflow:hidden"><div style="position:absolute;left:1.6px;top:-0.74px;line-height:20px;height:20px;font-size:10.5px;letter-spacing:-0.2px;color:#333;white-space:nowrap">ΝΕΥΡΟΛΟΓΙΚΟ</div></div>
<div style="position:absolute;left:1740px;top:198px;width:45.5px;height:17px;overflow:hidden"><div style="position:absolute;left:1.6px;top:-0.84px;line-height:20px;height:20px;font-size:10.8px;letter-spacing:0;color:#333;white-space:nowrap">G30</div></div>
<div style="position:absolute;left:10px;top:215px;width:1778px;height:1px;background:#d8d8d8"></div>
<div style="position:absolute;left:10px;top:216px;width:18px;height:17px;background:#f0f0f0"></div>
<div style="position:absolute;left:29px;top:216px;width:22.5px;height:17px;overflow:hidden"><div style="position:absolute;left:1.6px;top:-0.74px;line-height:20px;height:20px;font-size:10.5px;letter-spacing:-0.2px;color:#333;white-space:nowrap">Εσω</div></div>
<div style="position:absolute;left:54px;top:216px;width:45.5px;height:17px;overflow:hidden"><div style="position:absolute;left:1.6px;top:-0.84px;line-height:20px;height:20px;font-size:10.8px;letter-spacing:0;color:#333;white-space:nowrap">0027907</div></div>
<div style="position:absolute;left:102px;top:216px;width:41.5px;height:17px;overflow:hidden"><div style="position:absolute;left:1.6px;top:-0.84px;line-height:20px;height:20px;font-size:10.8px;letter-spacing:0;color:#333;white-space:nowrap">9<span style="margin:0 0.55px">/</span>4<span style="margin:0 0.55px">/</span>2020</div></div>
<div style="position:absolute;left:146px;top:216px;width:40.5px;height:17px;overflow:hidden"><div style="position:absolute;left:1.6px;top:-0.84px;line-height:20px;height:20px;font-size:10.8px;letter-spacing:0;color:#333;white-space:nowrap"></div></div>
<div style="position:absolute;left:189px;top:216px;width:232.5px;height:17px;overflow:hidden"><div style="position:absolute;left:1.6px;top:-0.74px;line-height:20px;height:20px;font-size:10.5px;letter-spacing:-0.2px;color:#333;white-space:nowrap">ΑΚΑΤΣΟΥΡΑΣ ΓΕΩΡΓΙΟΣ</div></div>
<div style="position:absolute;left:424px;top:216px;width:45.5px;height:17px;overflow:hidden"><div style="position:absolute;left:1.6px;top:-0.84px;line-height:20px;height:20px;font-size:10.8px;letter-spacing:0;color:#333;white-space:nowrap">01014403456</div></div>
<div style="position:absolute;left:472px;top:216px;width:41.5px;height:17px;overflow:hidden"><div style="position:absolute;left:1.6px;top:-0.84px;line-height:20px;height:20px;font-size:10.8px;letter-spacing:0;color:#333;white-space:nowrap">1<span style="margin:0 0.55px">/</span>1<span style="margin:0 0.55px">/</span>1944</div></div>
<div style="position:absolute;left:516px;top:216px;width:115.5px;height:17px;overflow:hidden"><div style="position:absolute;left:1.6px;top:-0.74px;line-height:20px;height:20px;font-size:10.5px;letter-spacing:-0.2px;color:#333;white-space:nowrap">ΚΩΝΣΤΑΝΤΙΝΟΣ</div></div>
<div style="position:absolute;left:634px;top:216px;width:232.5px;height:17px;overflow:hidden"><div style="position:absolute;left:1.6px;top:-0.74px;line-height:20px;height:20px;font-size:10.5px;letter-spacing:-0.2px;color:#333;white-space:nowrap">ΛΑΡΙΣΑΙΩΝ</div></div>
<div style="position:absolute;left:869px;top:216px;width:232.5px;height:17px;overflow:hidden"><div style="position:absolute;left:1.6px;top:-0.74px;line-height:20px;height:20px;font-size:10.5px;letter-spacing:-0.2px;color:#333;white-space:nowrap">ΓΑΤΙΔΗΣ ΓΕΩΡΓΙΟΣ</div></div>
<div style="position:absolute;left:1104px;top:216px;width:232.5px;height:17px;overflow:hidden"><div style="position:absolute;left:1.6px;top:-0.74px;line-height:20px;height:20px;font-size:10.5px;letter-spacing:-0.2px;color:#333;white-space:nowrap">ΕΟΠΥΥ</div></div>
<div style="position:absolute;left:1339px;top:216px;width:115.5px;height:17px;overflow:hidden"><div style="position:absolute;left:1.6px;top:-0.74px;line-height:20px;height:20px;font-size:10.5px;letter-spacing:-0.2px;color:#333;white-space:nowrap">ΤΡΙΚΛΙΝΟ Ββ</div></div>
<div style="position:absolute;left:1457px;top:216px;width:45.5px;height:17px;overflow:hidden"><div style="position:absolute;left:1.6px;top:-0.84px;line-height:20px;height:20px;font-size:10.8px;letter-spacing:0;color:#333;white-space:nowrap">103</div></div>
<div style="position:absolute;left:1505px;top:216px;width:232.5px;height:17px;overflow:hidden"><div style="position:absolute;left:1.6px;top:-0.74px;line-height:20px;height:20px;font-size:10.5px;letter-spacing:-0.2px;color:#333;white-space:nowrap">ΠΑΘΟΛΟΓΙΚΟ</div></div>
<div style="position:absolute;left:1740px;top:216px;width:45.5px;height:17px;overflow:hidden"><div style="position:absolute;left:1.6px;top:-0.84px;line-height:20px;height:20px;font-size:10.8px;letter-spacing:0;color:#333;white-space:nowrap">F00.0*</div></div>
<div style="position:absolute;left:10px;top:233px;width:1778px;height:1px;background:#d8d8d8"></div>
<div style="position:absolute;left:10px;top:234px;width:18px;height:17px;background:#f0f0f0"></div>
<div style="position:absolute;left:29px;top:234px;width:22.5px;height:17px;overflow:hidden"><div style="position:absolute;left:1.6px;top:-0.74px;line-height:20px;height:20px;font-size:10.5px;letter-spacing:-0.2px;color:#333;white-space:nowrap">Εσω</div></div>
<div style="position:absolute;left:54px;top:234px;width:45.5px;height:17px;overflow:hidden"><div style="position:absolute;left:1.6px;top:-0.84px;line-height:20px;height:20px;font-size:10.8px;letter-spacing:0;color:#333;white-space:nowrap">0027905</div></div>
<div style="position:absolute;left:102px;top:234px;width:41.5px;height:17px;overflow:hidden"><div style="position:absolute;left:1.6px;top:-0.84px;line-height:20px;height:20px;font-size:10.8px;letter-spacing:0;color:#333;white-space:nowrap">9<span style="margin:0 0.55px">/</span>4<span style="margin:0 0.55px">/</span>2020</div></div>
<div style="position:absolute;left:146px;top:234px;width:40.5px;height:17px;overflow:hidden"><div style="position:absolute;left:1.6px;top:-0.84px;line-height:20px;height:20px;font-size:10.8px;letter-spacing:0;color:#333;white-space:nowrap"></div></div>
<div style="position:absolute;left:189px;top:234px;width:232.5px;height:17px;overflow:hidden"><div style="position:absolute;left:1.6px;top:-0.74px;line-height:20px;height:20px;font-size:10.5px;letter-spacing:-0.2px;color:#333;white-space:nowrap">ΑΚΑΨΑΛΑ ΜΑΡΙΣΑ</div></div>
<div style="position:absolute;left:424px;top:234px;width:45.5px;height:17px;overflow:hidden"><div style="position:absolute;left:1.6px;top:-0.84px;line-height:20px;height:20px;font-size:10.8px;letter-spacing:0;color:#333;white-space:nowrap">01013203456</div></div>
<div style="position:absolute;left:472px;top:234px;width:41.5px;height:17px;overflow:hidden"><div style="position:absolute;left:1.6px;top:-0.84px;line-height:20px;height:20px;font-size:10.8px;letter-spacing:0;color:#333;white-space:nowrap">1<span style="margin:0 0.55px">/</span>1<span style="margin:0 0.55px">/</span>1932</div></div>
<div style="position:absolute;left:516px;top:234px;width:115.5px;height:17px;overflow:hidden"><div style="position:absolute;left:1.6px;top:-0.74px;line-height:20px;height:20px;font-size:10.5px;letter-spacing:-0.2px;color:#333;white-space:nowrap">ΓΕΩΡΓΙΟΣ</div></div>
<div style="position:absolute;left:634px;top:234px;width:232.5px;height:17px;overflow:hidden"><div style="position:absolute;left:1.6px;top:-0.74px;line-height:20px;height:20px;font-size:10.5px;letter-spacing:-0.2px;color:#333;white-space:nowrap">ΛΑΡΙΣΑΙΩΝ</div></div>
<div style="position:absolute;left:869px;top:234px;width:232.5px;height:17px;overflow:hidden"><div style="position:absolute;left:1.6px;top:-0.74px;line-height:20px;height:20px;font-size:10.5px;letter-spacing:-0.2px;color:#333;white-space:nowrap">ΓΑΤΙΔΗΣ ΓΕΩΡΓΙΟΣ</div></div>
<div style="position:absolute;left:1104px;top:234px;width:232.5px;height:17px;overflow:hidden"><div style="position:absolute;left:1.6px;top:-0.74px;line-height:20px;height:20px;font-size:10.5px;letter-spacing:-0.2px;color:#333;white-space:nowrap">ΕΟΠΥΥ</div></div>
<div style="position:absolute;left:1339px;top:234px;width:115.5px;height:17px;overflow:hidden"><div style="position:absolute;left:1.6px;top:-0.74px;line-height:20px;height:20px;font-size:10.5px;letter-spacing:-0.2px;color:#333;white-space:nowrap">ΜΟΝΟΚΛΙΝΟ Α</div></div>
<div style="position:absolute;left:1457px;top:234px;width:45.5px;height:17px;overflow:hidden"><div style="position:absolute;left:1.6px;top:-0.84px;line-height:20px;height:20px;font-size:10.8px;letter-spacing:0;color:#333;white-space:nowrap">107</div></div>
<div style="position:absolute;left:1505px;top:234px;width:232.5px;height:17px;overflow:hidden"><div style="position:absolute;left:1.6px;top:-0.74px;line-height:20px;height:20px;font-size:10.5px;letter-spacing:-0.2px;color:#333;white-space:nowrap">ΝΕΥΡΟΛΟΓΙΚΟ</div></div>
<div style="position:absolute;left:1740px;top:234px;width:45.5px;height:17px;overflow:hidden"><div style="position:absolute;left:1.6px;top:-0.84px;line-height:20px;height:20px;font-size:10.8px;letter-spacing:0;color:#333;white-space:nowrap">F03</div></div>
<div style="position:absolute;left:10px;top:251px;width:1778px;height:1px;background:#d8d8d8"></div>
<div style="position:absolute;left:10px;top:252px;width:18px;height:17px;background:#f0f0f0"></div>
<div style="position:absolute;left:29px;top:252px;width:22.5px;height:17px;overflow:hidden"><div style="position:absolute;left:1.6px;top:-0.74px;line-height:20px;height:20px;font-size:10.5px;letter-spacing:-0.2px;color:#333;white-space:nowrap">Εσω</div></div>
<div style="position:absolute;left:54px;top:252px;width:45.5px;height:17px;overflow:hidden"><div style="position:absolute;left:1.6px;top:-0.84px;line-height:20px;height:20px;font-size:10.8px;letter-spacing:0;color:#333;white-space:nowrap">0028084</div></div>
<div style="position:absolute;left:102px;top:252px;width:41.5px;height:17px;overflow:hidden"><div style="position:absolute;left:1.6px;top:-0.84px;line-height:20px;height:20px;font-size:10.8px;letter-spacing:0;color:#333;white-space:nowrap">24<span style="margin:0 0.55px">/</span>4<span style="margin:0 0.55px">/</span>2020</div></div>
<div style="position:absolute;left:146px;top:252px;width:40.5px;height:17px;overflow:hidden"><div style="position:absolute;left:1.6px;top:-0.84px;line-height:20px;height:20px;font-size:10.8px;letter-spacing:0;color:#333;white-space:nowrap"></div></div>
<div style="position:absolute;left:189px;top:252px;width:232.5px;height:17px;overflow:hidden"><div style="position:absolute;left:1.6px;top:-0.74px;line-height:20px;height:20px;font-size:10.5px;letter-spacing:-0.2px;color:#333;white-space:nowrap">ΑΚΟΓΚΟΥΛΙΔΗΣ ΚΩΝΣΤΑΝΤΙΝΟΣ</div></div>
<div style="position:absolute;left:424px;top:252px;width:45.5px;height:17px;overflow:hidden"><div style="position:absolute;left:1.6px;top:-0.84px;line-height:20px;height:20px;font-size:10.8px;letter-spacing:0;color:#333;white-space:nowrap">0101350 345</div></div>
<div style="position:absolute;left:472px;top:252px;width:41.5px;height:17px;overflow:hidden"><div style="position:absolute;left:1.6px;top:-0.84px;line-height:20px;height:20px;font-size:10.8px;letter-spacing:0;color:#333;white-space:nowrap">1<span style="margin:0 0.55px">/</span>1<span style="margin:0 0.55px">/</span>1935</div></div>
<div style="position:absolute;left:516px;top:252px;width:115.5px;height:17px;overflow:hidden"><div style="position:absolute;left:1.6px;top:-0.74px;line-height:20px;height:20px;font-size:10.5px;letter-spacing:-0.2px;color:#333;white-space:nowrap">ΓΕΩΡΓΙΟΣ</div></div>
<div style="position:absolute;left:634px;top:252px;width:232.5px;height:17px;overflow:hidden"><div style="position:absolute;left:1.6px;top:-0.84px;line-height:20px;height:20px;font-size:10.8px;letter-spacing:0;color:#333;white-space:nowrap"></div></div>
<div style="position:absolute;left:869px;top:252px;width:232.5px;height:17px;overflow:hidden"><div style="position:absolute;left:1.6px;top:-0.74px;line-height:20px;height:20px;font-size:10.5px;letter-spacing:-0.2px;color:#333;white-space:nowrap">ΓΑΤΙΔΗΣ ΓΕΩΡΓΙΟΣ</div></div>
<div style="position:absolute;left:1104px;top:252px;width:232.5px;height:17px;overflow:hidden"><div style="position:absolute;left:1.6px;top:-0.74px;line-height:20px;height:20px;font-size:10.5px;letter-spacing:-0.2px;color:#333;white-space:nowrap">ΕΟΠΥΥ</div></div>
<div style="position:absolute;left:1339px;top:252px;width:115.5px;height:17px;overflow:hidden"><div style="position:absolute;left:1.6px;top:-0.74px;line-height:20px;height:20px;font-size:10.5px;letter-spacing:-0.2px;color:#333;white-space:nowrap">ΔΙΚΛΙΝΟ Βα</div></div>
<div style="position:absolute;left:1457px;top:252px;width:45.5px;height:17px;overflow:hidden"><div style="position:absolute;left:1.6px;top:-0.84px;line-height:20px;height:20px;font-size:10.8px;letter-spacing:0;color:#333;white-space:nowrap">204</div></div>
<div style="position:absolute;left:1505px;top:252px;width:232.5px;height:17px;overflow:hidden"><div style="position:absolute;left:1.6px;top:-0.74px;line-height:20px;height:20px;font-size:10.5px;letter-spacing:-0.2px;color:#333;white-space:nowrap">ΚΑΡΔΙΟΛΟΓΙΚΟ</div></div>
<div style="position:absolute;left:1740px;top:252px;width:45.5px;height:17px;overflow:hidden"><div style="position:absolute;left:1.6px;top:-0.84px;line-height:20px;height:20px;font-size:10.8px;letter-spacing:0;color:#333;white-space:nowrap">I25</div></div>
<div style="position:absolute;left:10px;top:269px;width:1778px;height:1px;background:#d8d8d8"></div>
<div style="position:absolute;left:10px;top:270px;width:18px;height:17px;background:#f0f0f0"></div>
<div style="position:absolute;left:29px;top:270px;width:22.5px;height:17px;overflow:hidden"><div style="position:absolute;left:1.6px;top:-0.74px;line-height:20px;height:20px;font-size:10.5px;letter-spacing:-0.2px;color:#333;white-space:nowrap">Εσω</div></div>
<div style="position:absolute;left:54px;top:270px;width:45.5px;height:17px;overflow:hidden"><div style="position:absolute;left:1.6px;top:-0.84px;line-height:20px;height:20px;font-size:10.8px;letter-spacing:0;color:#333;white-space:nowrap">0027836</div></div>
<div style="position:absolute;left:102px;top:270px;width:41.5px;height:17px;overflow:hidden"><div style="position:absolute;left:1.6px;top:-0.84px;line-height:20px;height:20px;font-size:10.8px;letter-spacing:0;color:#333;white-space:nowrap">3<span style="margin:0 0.55px">/</span>4<span style="margin:0 0.55px">/</span>2020</div></div>
<div style="position:absolute;left:146px;top:270px;width:40.5px;height:17px;overflow:hidden"><div style="position:absolute;left:1.6px;top:-0.84px;line-height:20px;height:20px;font-size:10.8px;letter-spacing:0;color:#333;white-space:nowrap"></div></div>
<div style="position:absolute;left:189px;top:270px;width:232.5px;height:17px;overflow:hidden"><div style="position:absolute;left:1.6px;top:-0.74px;line-height:20px;height:20px;font-size:10.5px;letter-spacing:-0.2px;color:#333;white-space:nowrap">ΑΚΟΛΗΜΗΤΡΑ ΔΗΜΗΤΡΑ</div></div>
<div style="position:absolute;left:424px;top:270px;width:45.5px;height:17px;overflow:hidden"><div style="position:absolute;left:1.6px;top:-0.84px;line-height:20px;height:20px;font-size:10.8px;letter-spacing:0;color:#333;white-space:nowrap">01013803456</div></div>
<div style="position:absolute;left:472px;top:270px;width:41.5px;height:17px;overflow:hidden"><div style="position:absolute;left:1.6px;top:-0.84px;line-height:20px;height:20px;font-size:10.8px;letter-spacing:0;color:#333;white-space:nowrap">1<span style="margin:0 0.55px">/</span>1<span style="margin:0 0.55px">/</span>1938</div></div>
<div style="position:absolute;left:516px;top:270px;width:115.5px;height:17px;overflow:hidden"><div style="position:absolute;left:1.6px;top:-0.74px;line-height:20px;height:20px;font-size:10.5px;letter-spacing:-0.2px;color:#333;white-space:nowrap">ΓΕΩΡΓΙΟΣ</div></div>
<div style="position:absolute;left:634px;top:270px;width:232.5px;height:17px;overflow:hidden"><div style="position:absolute;left:1.6px;top:-0.74px;line-height:20px;height:20px;font-size:10.5px;letter-spacing:-0.2px;color:#333;white-space:nowrap">ΛΑΡΙΣΑΙΩΝ</div></div>
<div style="position:absolute;left:869px;top:270px;width:232.5px;height:17px;overflow:hidden"><div style="position:absolute;left:1.6px;top:-0.74px;line-height:20px;height:20px;font-size:10.5px;letter-spacing:-0.2px;color:#333;white-space:nowrap">ΓΑΤΙΔΗΣ ΓΕΩΡΓΙΟΣ</div></div>
<div style="position:absolute;left:1104px;top:270px;width:232.5px;height:17px;overflow:hidden"><div style="position:absolute;left:1.6px;top:-0.74px;line-height:20px;height:20px;font-size:10.5px;letter-spacing:-0.2px;color:#333;white-space:nowrap">ΕΟΠΥΥ</div></div>
<div style="position:absolute;left:1339px;top:270px;width:115.5px;height:17px;overflow:hidden"><div style="position:absolute;left:1.6px;top:-0.74px;line-height:20px;height:20px;font-size:10.5px;letter-spacing:-0.2px;color:#333;white-space:nowrap">ΑΠΟΜΟΝΩΣΗ</div></div>
<div style="position:absolute;left:1457px;top:270px;width:45.5px;height:17px;overflow:hidden"><div style="position:absolute;left:1.6px;top:-0.84px;line-height:20px;height:20px;font-size:10.8px;letter-spacing:0;color:#333;white-space:nowrap">105</div></div>
<div style="position:absolute;left:1505px;top:270px;width:232.5px;height:17px;overflow:hidden"><div style="position:absolute;left:1.6px;top:-0.74px;line-height:20px;height:20px;font-size:10.5px;letter-spacing:-0.2px;color:#333;white-space:nowrap">ΠΑΘΟΛΟΓΙΚΟ</div></div>
<div style="position:absolute;left:1740px;top:270px;width:45.5px;height:17px;overflow:hidden"><div style="position:absolute;left:1.6px;top:-0.84px;line-height:20px;height:20px;font-size:10.8px;letter-spacing:0;color:#333;white-space:nowrap">R53</div></div>
<div style="position:absolute;left:10px;top:287px;width:1778px;height:1px;background:#d8d8d8"></div>
<div style="position:absolute;left:10px;top:288px;width:18px;height:17px;background:#f0f0f0"></div>
<div style="position:absolute;left:29px;top:288px;width:22.5px;height:17px;overflow:hidden"><div style="position:absolute;left:1.6px;top:-0.74px;line-height:20px;height:20px;font-size:10.5px;letter-spacing:-0.2px;color:#333;white-space:nowrap">Εσω</div></div>
<div style="position:absolute;left:54px;top:288px;width:45.5px;height:17px;overflow:hidden"><div style="position:absolute;left:1.6px;top:-0.84px;line-height:20px;height:20px;font-size:10.8px;letter-spacing:0;color:#333;white-space:nowrap">0028087</div></div>
<div style="position:absolute;left:102px;top:288px;width:41.5px;height:17px;overflow:hidden"><div style="position:absolute;left:1.6px;top:-0.84px;line-height:20px;height:20px;font-size:10.8px;letter-spacing:0;color:#333;white-space:nowrap">25<span style="margin:0 0.55px">/</span>4<span style="margin:0 0.55px">/</span>2020</div></div>
<div style="position:absolute;left:146px;top:288px;width:40.5px;height:17px;overflow:hidden"><div style="position:absolute;left:1.6px;top:-0.84px;line-height:20px;height:20px;font-size:10.8px;letter-spacing:0;color:#333;white-space:nowrap"></div></div>
<div style="position:absolute;left:189px;top:288px;width:232.5px;height:17px;overflow:hidden"><div style="position:absolute;left:1.6px;top:-0.74px;line-height:20px;height:20px;font-size:10.5px;letter-spacing:-0.2px;color:#333;white-space:nowrap">ΑΚΟΠΑΝΟΥ ΜΑΡΙΑ</div></div>
<div style="position:absolute;left:424px;top:288px;width:45.5px;height:17px;overflow:hidden"><div style="position:absolute;left:1.6px;top:-0.84px;line-height:20px;height:20px;font-size:10.8px;letter-spacing:0;color:#333;white-space:nowrap">01013207345</div></div>
<div style="position:absolute;left:472px;top:288px;width:41.5px;height:17px;overflow:hidden"><div style="position:absolute;left:1.6px;top:-0.84px;line-height:20px;height:20px;font-size:10.8px;letter-spacing:0;color:#333;white-space:nowrap">1<span style="margin:0 0.55px">/</span>1<span style="margin:0 0.55px">/</span>1932</div></div>
<div style="position:absolute;left:516px;top:288px;width:115.5px;height:17px;overflow:hidden"><div style="position:absolute;left:1.6px;top:-0.74px;line-height:20px;height:20px;font-size:10.5px;letter-spacing:-0.2px;color:#333;white-space:nowrap">ΓΕΩΡΓΙΟΣ</div></div>
<div style="position:absolute;left:634px;top:288px;width:232.5px;height:17px;overflow:hidden"><div style="position:absolute;left:1.6px;top:-0.74px;line-height:20px;height:20px;font-size:10.5px;letter-spacing:-0.2px;color:#333;white-space:nowrap">ΛΑΡΙΣΑΙΩΝ</div></div>
<div style="position:absolute;left:869px;top:288px;width:232.5px;height:17px;overflow:hidden"><div style="position:absolute;left:1.6px;top:-0.74px;line-height:20px;height:20px;font-size:10.5px;letter-spacing:-0.2px;color:#333;white-space:nowrap">ΓΑΤΙΔΗΣ ΓΕΩΡΓΙΟΣ</div></div>
<div style="position:absolute;left:1104px;top:288px;width:232.5px;height:17px;overflow:hidden"><div style="position:absolute;left:1.6px;top:-0.74px;line-height:20px;height:20px;font-size:10.5px;letter-spacing:-0.2px;color:#333;white-space:nowrap">ΕΟΠΥΥ</div></div>
<div style="position:absolute;left:1339px;top:288px;width:115.5px;height:17px;overflow:hidden"><div style="position:absolute;left:1.6px;top:-0.74px;line-height:20px;height:20px;font-size:10.5px;letter-spacing:-0.2px;color:#333;white-space:nowrap">ΤΡΙΚΛΙΝΟ Ββ</div></div>
<div style="position:absolute;left:1457px;top:288px;width:45.5px;height:17px;overflow:hidden"><div style="position:absolute;left:1.6px;top:-0.84px;line-height:20px;height:20px;font-size:10.8px;letter-spacing:0;color:#333;white-space:nowrap">203</div></div>
<div style="position:absolute;left:1505px;top:288px;width:232.5px;height:17px;overflow:hidden"><div style="position:absolute;left:1.6px;top:-0.74px;line-height:20px;height:20px;font-size:10.5px;letter-spacing:-0.2px;color:#333;white-space:nowrap">ΚΑΡΔΙΟΛΟΓΙΚΟ</div></div>
<div style="position:absolute;left:1740px;top:288px;width:45.5px;height:17px;overflow:hidden"><div style="position:absolute;left:1.6px;top:-0.84px;line-height:20px;height:20px;font-size:10.8px;letter-spacing:0;color:#333;white-space:nowrap">I50</div></div>
<div style="position:absolute;left:10px;top:305px;width:1778px;height:1px;background:#d8d8d8"></div>
<div style="position:absolute;left:10px;top:306px;width:18px;height:17px;background:#f0f0f0"></div>
<div style="position:absolute;left:29px;top:306px;width:22.5px;height:17px;overflow:hidden"><div style="position:absolute;left:1.6px;top:-0.74px;line-height:20px;height:20px;font-size:10.5px;letter-spacing:-0.2px;color:#333;white-space:nowrap">Εσω</div></div>
<div style="position:absolute;left:54px;top:306px;width:45.5px;height:17px;overflow:hidden"><div style="position:absolute;left:1.6px;top:-0.84px;line-height:20px;height:20px;font-size:10.8px;letter-spacing:0;color:#333;white-space:nowrap">0028081</div></div>
<div style="position:absolute;left:102px;top:306px;width:41.5px;height:17px;overflow:hidden"><div style="position:absolute;left:1.6px;top:-0.84px;line-height:20px;height:20px;font-size:10.8px;letter-spacing:0;color:#333;white-space:nowrap">24<span style="margin:0 0.55px">/</span>4<span style="margin:0 0.55px">/</span>2020</div></div>
<div style="position:absolute;left:146px;top:306px;width:40.5px;height:17px;overflow:hidden"><div style="position:absolute;left:1.6px;top:-0.84px;line-height:20px;height:20px;font-size:10.8px;letter-spacing:0;color:#333;white-space:nowrap"></div></div>
<div style="position:absolute;left:189px;top:306px;width:232.5px;height:17px;overflow:hidden"><div style="position:absolute;left:1.6px;top:-0.74px;line-height:20px;height:20px;font-size:10.5px;letter-spacing:-0.2px;color:#333;white-space:nowrap">ΑΚΟΡΟΜΠΙΛΗΣ ΔΗΜΗΤΡΙΟΣ</div></div>
<div style="position:absolute;left:424px;top:306px;width:45.5px;height:17px;overflow:hidden"><div style="position:absolute;left:1.6px;top:-0.84px;line-height:20px;height:20px;font-size:10.8px;letter-spacing:0;color:#333;white-space:nowrap">01013302345</div></div>
<div style="position:absolute;left:472px;top:306px;width:41.5px;height:17px;overflow:hidden"><div style="position:absolute;left:1.6px;top:-0.84px;line-height:20px;height:20px;font-size:10.8px;letter-spacing:0;color:#333;white-space:nowrap">1<span style="margin:0 0.55px">/</span>1<span style="margin:0 0.55px">/</span>1933</div></div>
<div style="position:absolute;left:516px;top:306px;width:115.5px;height:17px;overflow:hidden"><div style="position:absolute;left:1.6px;top:-0.74px;line-height:20px;height:20px;font-size:10.5px;letter-spacing:-0.2px;color:#333;white-space:nowrap">ΓΕΩΡΓΙΟΣ</div></div>
<div style="position:absolute;left:634px;top:306px;width:232.5px;height:17px;overflow:hidden"><div style="position:absolute;left:1.6px;top:-0.84px;line-height:20px;height:20px;font-size:10.8px;letter-spacing:0;color:#333;white-space:nowrap"></div></div>
<div style="position:absolute;left:869px;top:306px;width:232.5px;height:17px;overflow:hidden"><div style="position:absolute;left:1.6px;top:-0.74px;line-height:20px;height:20px;font-size:10.5px;letter-spacing:-0.2px;color:#333;white-space:nowrap">ΓΑΤΙΔΗΣ ΓΕΩΡΓΙΟΣ</div></div>
<div style="position:absolute;left:1104px;top:306px;width:232.5px;height:17px;overflow:hidden"><div style="position:absolute;left:1.6px;top:-0.74px;line-height:20px;height:20px;font-size:10.5px;letter-spacing:-0.2px;color:#333;white-space:nowrap">ΕΟΠΥΥ</div></div>
<div style="position:absolute;left:1339px;top:306px;width:115.5px;height:17px;overflow:hidden"><div style="position:absolute;left:1.6px;top:-0.74px;line-height:20px;height:20px;font-size:10.5px;letter-spacing:-0.2px;color:#333;white-space:nowrap">ΠΕΝΤΑΚΛΙΝΟ Γ</div></div>
<div style="position:absolute;left:1457px;top:306px;width:45.5px;height:17px;overflow:hidden"><div style="position:absolute;left:1.6px;top:-0.84px;line-height:20px;height:20px;font-size:10.8px;letter-spacing:0;color:#333;white-space:nowrap">108</div></div>
<div style="position:absolute;left:1505px;top:306px;width:232.5px;height:17px;overflow:hidden"><div style="position:absolute;left:1.6px;top:-0.74px;line-height:20px;height:20px;font-size:10.5px;letter-spacing:-0.2px;color:#333;white-space:nowrap">ΝΕΦΡΟΛΟΓΙΚΟ</div></div>
<div style="position:absolute;left:1740px;top:306px;width:45.5px;height:17px;overflow:hidden"><div style="position:absolute;left:1.6px;top:-0.84px;line-height:20px;height:20px;font-size:10.8px;letter-spacing:0;color:#333;white-space:nowrap">N18</div></div>
<div style="position:absolute;left:10px;top:323px;width:1778px;height:1px;background:#d8d8d8"></div>
<div style="position:absolute;left:10px;top:324px;width:18px;height:17px;background:#f0f0f0"></div>
<div style="position:absolute;left:29px;top:324px;width:22.5px;height:17px;overflow:hidden"><div style="position:absolute;left:1.6px;top:-0.74px;line-height:20px;height:20px;font-size:10.5px;letter-spacing:-0.2px;color:#333;white-space:nowrap">Εσω</div></div>
<div style="position:absolute;left:54px;top:324px;width:45.5px;height:17px;overflow:hidden"><div style="position:absolute;left:1.6px;top:-0.84px;line-height:20px;height:20px;font-size:10.8px;letter-spacing:0;color:#333;white-space:nowrap">0027961</div></div>
<div style="position:absolute;left:102px;top:324px;width:41.5px;height:17px;overflow:hidden"><div style="position:absolute;left:1.6px;top:-0.84px;line-height:20px;height:20px;font-size:10.8px;letter-spacing:0;color:#333;white-space:nowrap">15<span style="margin:0 0.55px">/</span>4<span style="margin:0 0.55px">/</span>2020</div></div>
<div style="position:absolute;left:146px;top:324px;width:40.5px;height:17px;overflow:hidden"><div style="position:absolute;left:1.6px;top:-0.84px;line-height:20px;height:20px;font-size:10.8px;letter-spacing:0;color:#333;white-space:nowrap"></div></div>
<div style="position:absolute;left:189px;top:324px;width:232.5px;height:17px;overflow:hidden"><div style="position:absolute;left:1.6px;top:-0.74px;line-height:20px;height:20px;font-size:10.5px;letter-spacing:-0.2px;color:#333;white-space:nowrap">ΑΚΡΙΒΟΥΣΗ ΜΑΡΙΣΑ</div></div>
<div style="position:absolute;left:424px;top:324px;width:45.5px;height:17px;overflow:hidden"><div style="position:absolute;left:1.6px;top:-0.84px;line-height:20px;height:20px;font-size:10.8px;letter-spacing:0;color:#333;white-space:nowrap">01013703456</div></div>
<div style="position:absolute;left:472px;top:324px;width:41.5px;height:17px;overflow:hidden"><div style="position:absolute;left:1.6px;top:-0.84px;line-height:20px;height:20px;font-size:10.8px;letter-spacing:0;color:#333;white-space:nowrap">1<span style="margin:0 0.55px">/</span>1<span style="margin:0 0.55px">/</span>1937</div></div>
<div style="position:absolute;left:516px;top:324px;width:115.5px;height:17px;overflow:hidden"><div style="position:absolute;left:1.6px;top:-0.74px;line-height:20px;height:20px;font-size:10.5px;letter-spacing:-0.2px;color:#333;white-space:nowrap">ΓΕΩΡΓΙΟΣ</div></div>
<div style="position:absolute;left:634px;top:324px;width:232.5px;height:17px;overflow:hidden"><div style="position:absolute;left:1.6px;top:-0.84px;line-height:20px;height:20px;font-size:10.8px;letter-spacing:0;color:#333;white-space:nowrap"></div></div>
<div style="position:absolute;left:869px;top:324px;width:232.5px;height:17px;overflow:hidden"><div style="position:absolute;left:1.6px;top:-0.74px;line-height:20px;height:20px;font-size:10.5px;letter-spacing:-0.2px;color:#333;white-space:nowrap">ΓΑΤΙΔΗΣ ΓΕΩΡΓΙΟΣ</div></div>
<div style="position:absolute;left:1104px;top:324px;width:232.5px;height:17px;overflow:hidden"><div style="position:absolute;left:1.6px;top:-0.74px;line-height:20px;height:20px;font-size:10.5px;letter-spacing:-0.2px;color:#333;white-space:nowrap">ΕΟΠΥΥ</div></div>
<div style="position:absolute;left:1339px;top:324px;width:115.5px;height:17px;overflow:hidden"><div style="position:absolute;left:1.6px;top:-0.74px;line-height:20px;height:20px;font-size:10.5px;letter-spacing:-0.2px;color:#333;white-space:nowrap">ΠΕΝΤΑΚΛΙΝΟ Γ</div></div>
<div style="position:absolute;left:1457px;top:324px;width:45.5px;height:17px;overflow:hidden"><div style="position:absolute;left:1.6px;top:-0.84px;line-height:20px;height:20px;font-size:10.8px;letter-spacing:0;color:#333;white-space:nowrap">108</div></div>
<div style="position:absolute;left:1505px;top:324px;width:232.5px;height:17px;overflow:hidden"><div style="position:absolute;left:1.6px;top:-0.74px;line-height:20px;height:20px;font-size:10.5px;letter-spacing:-0.2px;color:#333;white-space:nowrap">ΝΕΦΡΟΛΟΓΙΚΟ</div></div>
<div style="position:absolute;left:1740px;top:324px;width:45.5px;height:17px;overflow:hidden"><div style="position:absolute;left:1.6px;top:-0.84px;line-height:20px;height:20px;font-size:10.8px;letter-spacing:0;color:#333;white-space:nowrap">N18</div></div>
<div style="position:absolute;left:10px;top:341px;width:1778px;height:1px;background:#d8d8d8"></div>
<div style="position:absolute;left:10px;top:342px;width:18px;height:17px;background:#f0f0f0"></div>
<div style="position:absolute;left:29px;top:342px;width:22.5px;height:17px;overflow:hidden"><div style="position:absolute;left:1.6px;top:-0.74px;line-height:20px;height:20px;font-size:10.5px;letter-spacing:-0.2px;color:#333;white-space:nowrap">Εσω</div></div>
<div style="position:absolute;left:54px;top:342px;width:45.5px;height:17px;overflow:hidden"><div style="position:absolute;left:1.6px;top:-0.84px;line-height:20px;height:20px;font-size:10.8px;letter-spacing:0;color:#333;white-space:nowrap">0028001</div></div>
<div style="position:absolute;left:102px;top:342px;width:41.5px;height:17px;overflow:hidden"><div style="position:absolute;left:1.6px;top:-0.84px;line-height:20px;height:20px;font-size:10.8px;letter-spacing:0;color:#333;white-space:nowrap">17<span style="margin:0 0.55px">/</span>4<span style="margin:0 0.55px">/</span>2020</div></div>
<div style="position:absolute;left:146px;top:342px;width:40.5px;height:17px;overflow:hidden"><div style="position:absolute;left:1.6px;top:-0.84px;line-height:20px;height:20px;font-size:10.8px;letter-spacing:0;color:#333;white-space:nowrap"></div></div>
<div style="position:absolute;left:189px;top:342px;width:232.5px;height:17px;overflow:hidden"><div style="position:absolute;left:1.6px;top:-0.74px;line-height:20px;height:20px;font-size:10.5px;letter-spacing:-0.2px;color:#333;white-space:nowrap">ΑΛΙΑΚΟΥ ΜΑΡΙΑ</div></div>
<div style="position:absolute;left:424px;top:342px;width:45.5px;height:17px;overflow:hidden"><div style="position:absolute;left:1.6px;top:-0.84px;line-height:20px;height:20px;font-size:10.8px;letter-spacing:0;color:#333;white-space:nowrap">01014503456</div></div>
<div style="position:absolute;left:472px;top:342px;width:41.5px;height:17px;overflow:hidden"><div style="position:absolute;left:1.6px;top:-0.84px;line-height:20px;height:20px;font-size:10.8px;letter-spacing:0;color:#333;white-space:nowrap">1<span style="margin:0 0.55px">/</span>1<span style="margin:0 0.55px">/</span>1945</div></div>
<div style="position:absolute;left:516px;top:342px;width:115.5px;height:17px;overflow:hidden"><div style="position:absolute;left:1.6px;top:-0.74px;line-height:20px;height:20px;font-size:10.5px;letter-spacing:-0.2px;color:#333;white-space:nowrap">ΓΕΩΡΓΙΟΣ</div></div>
<div style="position:absolute;left:634px;top:342px;width:232.5px;height:17px;overflow:hidden"><div style="position:absolute;left:1.6px;top:-0.84px;line-height:20px;height:20px;font-size:10.8px;letter-spacing:0;color:#333;white-space:nowrap"></div></div>
<div style="position:absolute;left:869px;top:342px;width:232.5px;height:17px;overflow:hidden"><div style="position:absolute;left:1.6px;top:-0.74px;line-height:20px;height:20px;font-size:10.5px;letter-spacing:-0.2px;color:#333;white-space:nowrap">ΓΑΤΙΔΗΣ ΓΕΩΡΓΙΟΣ</div></div>
<div style="position:absolute;left:1104px;top:342px;width:232.5px;height:17px;overflow:hidden"><div style="position:absolute;left:1.6px;top:-0.74px;line-height:20px;height:20px;font-size:10.5px;letter-spacing:-0.2px;color:#333;white-space:nowrap">ΕΟΠΥΥ</div></div>
<div style="position:absolute;left:1339px;top:342px;width:115.5px;height:17px;overflow:hidden"><div style="position:absolute;left:1.6px;top:-0.74px;line-height:20px;height:20px;font-size:10.5px;letter-spacing:-0.2px;color:#333;white-space:nowrap">ΔΙΚΛΙΝΟ Βα</div></div>
<div style="position:absolute;left:1457px;top:342px;width:45.5px;height:17px;overflow:hidden"><div style="position:absolute;left:1.6px;top:-0.84px;line-height:20px;height:20px;font-size:10.8px;letter-spacing:0;color:#333;white-space:nowrap">404</div></div>
<div style="position:absolute;left:1505px;top:342px;width:232.5px;height:17px;overflow:hidden"><div style="position:absolute;left:1.6px;top:-0.74px;line-height:20px;height:20px;font-size:10.5px;letter-spacing:-0.2px;color:#333;white-space:nowrap">ΟΡΘΟΠΕΔΙΚΟ</div></div>
<div style="position:absolute;left:1740px;top:342px;width:45.5px;height:17px;overflow:hidden"><div style="position:absolute;left:1.6px;top:-0.84px;line-height:20px;height:20px;font-size:10.8px;letter-spacing:0;color:#333;white-space:nowrap">S72</div></div>
<div style="position:absolute;left:10px;top:359px;width:1778px;height:1px;background:#d8d8d8"></div>
<div style="position:absolute;left:10px;top:360px;width:18px;height:17px;background:#f0f0f0"></div>
<div style="position:absolute;left:29px;top:360px;width:22.5px;height:17px;overflow:hidden"><div style="position:absolute;left:1.6px;top:-0.74px;line-height:20px;height:20px;font-size:10.5px;letter-spacing:-0.2px;color:#333;white-space:nowrap">Εσω</div></div>
<div style="position:absolute;left:54px;top:360px;width:45.5px;height:17px;overflow:hidden"><div style="position:absolute;left:1.6px;top:-0.84px;line-height:20px;height:20px;font-size:10.8px;letter-spacing:0;color:#333;white-space:nowrap">0027785</div></div>
<div style="position:absolute;left:102px;top:360px;width:41.5px;height:17px;overflow:hidden"><div style="position:absolute;left:1.6px;top:-0.84px;line-height:20px;height:20px;font-size:10.8px;letter-spacing:0;color:#333;white-space:nowrap">30<span style="margin:0 0.55px">/</span>3<span style="margin:0 0.55px">/</span>2020</div></div>
<div style="position:absolute;left:146px;top:360px;width:40.5px;height:17px;overflow:hidden"><div style="position:absolute;left:1.6px;top:-0.84px;line-height:20px;height:20px;font-size:10.8px;letter-spacing:0;color:#333;white-space:nowrap"></div></div>
<div style="position:absolute;left:189px;top:360px;width:232.5px;height:17px;overflow:hidden"><div style="position:absolute;left:1.6px;top:-0.74px;line-height:20px;height:20px;font-size:10.5px;letter-spacing:-0.2px;color:#333;white-space:nowrap">ΑΛΙΛΟΥ ΔΗΜΗΤΡΑ</div></div>
<div style="position:absolute;left:424px;top:360px;width:45.5px;height:17px;overflow:hidden"><div style="position:absolute;left:1.6px;top:-0.84px;line-height:20px;height:20px;font-size:10.8px;letter-spacing:0;color:#333;white-space:nowrap">0101320 345</div></div>
<div style="position:absolute;left:472px;top:360px;width:41.5px;height:17px;overflow:hidden"><div style="position:absolute;left:1.6px;top:-0.84px;line-height:20px;height:20px;font-size:10.8px;letter-spacing:0;color:#333;white-space:nowrap">1<span style="margin:0 0.55px">/</span>1<span style="margin:0 0.55px">/</span>1932</div></div>
<div style="position:absolute;left:516px;top:360px;width:115.5px;height:17px;overflow:hidden"><div style="position:absolute;left:1.6px;top:-0.74px;line-height:20px;height:20px;font-size:10.5px;letter-spacing:-0.2px;color:#333;white-space:nowrap">ΓΕΩΡΓΙΟΣ</div></div>
<div style="position:absolute;left:634px;top:360px;width:232.5px;height:17px;overflow:hidden"><div style="position:absolute;left:1.6px;top:-0.84px;line-height:20px;height:20px;font-size:10.8px;letter-spacing:0;color:#333;white-space:nowrap"></div></div>
<div style="position:absolute;left:869px;top:360px;width:232.5px;height:17px;overflow:hidden"><div style="position:absolute;left:1.6px;top:-0.74px;line-height:20px;height:20px;font-size:10.5px;letter-spacing:-0.2px;color:#333;white-space:nowrap">ΓΑΤΙΔΗΣ ΓΕΩΡΓΙΟΣ</div></div>
<div style="position:absolute;left:1104px;top:360px;width:232.5px;height:17px;overflow:hidden"><div style="position:absolute;left:1.6px;top:-0.74px;line-height:20px;height:20px;font-size:10.5px;letter-spacing:-0.2px;color:#333;white-space:nowrap">ΕΟΠΥΥ</div></div>
<div style="position:absolute;left:1339px;top:360px;width:115.5px;height:17px;overflow:hidden"><div style="position:absolute;left:1.6px;top:-0.74px;line-height:20px;height:20px;font-size:10.5px;letter-spacing:-0.2px;color:#333;white-space:nowrap">ΑΠΟΜΟΝΩΣΗ</div></div>
<div style="position:absolute;left:1457px;top:360px;width:45.5px;height:17px;overflow:hidden"><div style="position:absolute;left:1.6px;top:-0.84px;line-height:20px;height:20px;font-size:10.8px;letter-spacing:0;color:#333;white-space:nowrap">105</div></div>
<div style="position:absolute;left:1505px;top:360px;width:232.5px;height:17px;overflow:hidden"><div style="position:absolute;left:1.6px;top:-0.74px;line-height:20px;height:20px;font-size:10.5px;letter-spacing:-0.2px;color:#333;white-space:nowrap">ΠΑΘΟΛΟΓΙΚΟ</div></div>
<div style="position:absolute;left:1740px;top:360px;width:45.5px;height:17px;overflow:hidden"><div style="position:absolute;left:1.6px;top:-0.84px;line-height:20px;height:20px;font-size:10.8px;letter-spacing:0;color:#333;white-space:nowrap">R53</div></div>
<div style="position:absolute;left:10px;top:377px;width:1778px;height:1px;background:#d8d8d8"></div>
<div style="position:absolute;left:10px;top:378px;width:18px;height:17px;background:#f0f0f0"></div>
<div style="position:absolute;left:29px;top:378px;width:22.5px;height:17px;overflow:hidden"><div style="position:absolute;left:1.6px;top:-0.74px;line-height:20px;height:20px;font-size:10.5px;letter-spacing:-0.2px;color:#333;white-space:nowrap">Εσω</div></div>
<div style="position:absolute;left:54px;top:378px;width:45.5px;height:17px;overflow:hidden"><div style="position:absolute;left:1.6px;top:-0.84px;line-height:20px;height:20px;font-size:10.8px;letter-spacing:0;color:#333;white-space:nowrap">0027928</div></div>
<div style="position:absolute;left:102px;top:378px;width:41.5px;height:17px;overflow:hidden"><div style="position:absolute;left:1.6px;top:-0.84px;line-height:20px;height:20px;font-size:10.8px;letter-spacing:0;color:#333;white-space:nowrap">11<span style="margin:0 0.55px">/</span>4<span style="margin:0 0.55px">/</span>2020</div></div>
<div style="position:absolute;left:146px;top:378px;width:40.5px;height:17px;overflow:hidden"><div style="position:absolute;left:1.6px;top:-0.84px;line-height:20px;height:20px;font-size:10.8px;letter-spacing:0;color:#333;white-space:nowrap"></div></div>
<div style="position:absolute;left:189px;top:378px;width:232.5px;height:17px;overflow:hidden"><div style="position:absolute;left:1.6px;top:-0.74px;line-height:20px;height:20px;font-size:10.5px;letter-spacing:-0.2px;color:#333;white-space:nowrap">ΑΜΑΓΑΛΙΟΥ ΔΗΜΗΤΡΑ</div></div>
<div style="position:absolute;left:424px;top:378px;width:45.5px;height:17px;overflow:hidden"><div style="position:absolute;left:1.6px;top:-0.84px;line-height:20px;height:20px;font-size:10.8px;letter-spacing:0;color:#333;white-space:nowrap">01013503456</div></div>
<div style="position:absolute;left:472px;top:378px;width:41.5px;height:17px;overflow:hidden"><div style="position:absolute;left:1.6px;top:-0.84px;line-height:20px;height:20px;font-size:10.8px;letter-spacing:0;color:#333;white-space:nowrap">1<span style="margin:0 0.55px">/</span>1<span style="margin:0 0.55px">/</span>1935</div></div>
<div style="position:absolute;left:516px;top:378px;width:115.5px;height:17px;overflow:hidden"><div style="position:absolute;left:1.6px;top:-0.74px;line-height:20px;height:20px;font-size:10.5px;letter-spacing:-0.2px;color:#333;white-space:nowrap">ΓΕΩΡΓΙΟΣ</div></div>
<div style="position:absolute;left:634px;top:378px;width:232.5px;height:17px;overflow:hidden"><div style="position:absolute;left:1.6px;top:-0.74px;line-height:20px;height:20px;font-size:10.5px;letter-spacing:-0.2px;color:#333;white-space:nowrap">ΛΑΡΙΣΑΙΩΝ</div></div>
<div style="position:absolute;left:869px;top:378px;width:232.5px;height:17px;overflow:hidden"><div style="position:absolute;left:1.6px;top:-0.74px;line-height:20px;height:20px;font-size:10.5px;letter-spacing:-0.2px;color:#333;white-space:nowrap">ΓΑΤΙΔΗΣ ΓΕΩΡΓΙΟΣ</div></div>
<div style="position:absolute;left:1104px;top:378px;width:232.5px;height:17px;overflow:hidden"><div style="position:absolute;left:1.6px;top:-0.74px;line-height:20px;height:20px;font-size:10.5px;letter-spacing:-0.2px;color:#333;white-space:nowrap">ΕΟΠΥΥ</div></div>
<div style="position:absolute;left:1339px;top:378px;width:115.5px;height:17px;overflow:hidden"><div style="position:absolute;left:1.6px;top:-0.74px;line-height:20px;height:20px;font-size:10.5px;letter-spacing:-0.2px;color:#333;white-space:nowrap">ΟΓΚΟΛΟΓΙΑ</div></div>
<div style="position:absolute;left:1457px;top:378px;width:45.5px;height:17px;overflow:hidden"><div style="position:absolute;left:1.6px;top:-0.84px;line-height:20px;height:20px;font-size:10.8px;letter-spacing:0;color:#333;white-space:nowrap">208</div></div>
<div style="position:absolute;left:1505px;top:378px;width:232.5px;height:17px;overflow:hidden"><div style="position:absolute;left:1.6px;top:-0.74px;line-height:20px;height:20px;font-size:10.5px;letter-spacing:-0.2px;color:#333;white-space:nowrap">ΠΑΘΟΛΟΓΙΚΗ ΟΓΚΟΛΟΓΙΑ</div></div>
<div style="position:absolute;left:1740px;top:378px;width:45.5px;height:17px;overflow:hidden"><div style="position:absolute;left:1.6px;top:-0.84px;line-height:20px;height:20px;font-size:10.8px;letter-spacing:0;color:#333;white-space:nowrap">C50</div></div>
<div style="position:absolute;left:10px;top:395px;width:1778px;height:1px;background:#d8d8d8"></div>
<div style="position:absolute;left:10px;top:396px;width:18px;height:17px;background:#f0f0f0"></div>
<div style="position:absolute;left:29px;top:396px;width:22.5px;height:17px;overflow:hidden"><div style="position:absolute;left:1.6px;top:-0.74px;line-height:20px;height:20px;font-size:10.5px;letter-spacing:-0.2px;color:#333;white-space:nowrap">Εσω</div></div>
<div style="position:absolute;left:54px;top:396px;width:45.5px;height:17px;overflow:hidden"><div style="position:absolute;left:1.6px;top:-0.84px;line-height:20px;height:20px;font-size:10.8px;letter-spacing:0;color:#333;white-space:nowrap">0027858</div></div>
<div style="position:absolute;left:102px;top:396px;width:41.5px;height:17px;overflow:hidden"><div style="position:absolute;left:1.6px;top:-0.84px;line-height:20px;height:20px;font-size:10.8px;letter-spacing:0;color:#333;white-space:nowrap">7<span style="margin:0 0.55px">/</span>4<span style="margin:0 0.55px">/</span>2020</div></div>
<div style="position:absolute;left:146px;top:396px;width:40.5px;height:17px;overflow:hidden"><div style="position:absolute;left:1.6px;top:-0.84px;line-height:20px;height:20px;font-size:10.8px;letter-spacing:0;color:#333;white-space:nowrap"></div></div>
<div style="position:absolute;left:189px;top:396px;width:232.5px;height:17px;overflow:hidden"><div style="position:absolute;left:1.6px;top:-0.74px;line-height:20px;height:20px;font-size:10.5px;letter-spacing:-0.2px;color:#333;white-space:nowrap">ΑΜΠΑΛΤΑ ΦΩΤΕΙΝΗ</div></div>
<div style="position:absolute;left:424px;top:396px;width:45.5px;height:17px;overflow:hidden"><div style="position:absolute;left:1.6px;top:-0.84px;line-height:20px;height:20px;font-size:10.8px;letter-spacing:0;color:#333;white-space:nowrap">0101310 345</div></div>
<div style="position:absolute;left:472px;top:396px;width:41.5px;height:17px;overflow:hidden"><div style="position:absolute;left:1.6px;top:-0.84px;line-height:20px;height:20px;font-size:10.8px;letter-spacing:0;color:#333;white-space:nowrap">1<span style="margin:0 0.55px">/</span>1<span style="margin:0 0.55px">/</span>1931</div></div>
<div style="position:absolute;left:516px;top:396px;width:115.5px;height:17px;overflow:hidden"><div style="position:absolute;left:1.6px;top:-0.74px;line-height:20px;height:20px;font-size:10.5px;letter-spacing:-0.2px;color:#333;white-space:nowrap">ΓΕΩΡΓΙΟΣ</div></div>
<div style="position:absolute;left:634px;top:396px;width:232.5px;height:17px;overflow:hidden"><div style="position:absolute;left:1.6px;top:-0.74px;line-height:20px;height:20px;font-size:10.5px;letter-spacing:-0.2px;color:#333;white-space:nowrap">ΛΑΡΙΣΑΙΩΝ</div></div>
<div style="position:absolute;left:869px;top:396px;width:232.5px;height:17px;overflow:hidden"><div style="position:absolute;left:1.6px;top:-0.74px;line-height:20px;height:20px;font-size:10.5px;letter-spacing:-0.2px;color:#333;white-space:nowrap">ΓΑΤΙΔΗΣ ΓΕΩΡΓΙΟΣ</div></div>
<div style="position:absolute;left:1104px;top:396px;width:232.5px;height:17px;overflow:hidden"><div style="position:absolute;left:1.6px;top:-0.74px;line-height:20px;height:20px;font-size:10.5px;letter-spacing:-0.2px;color:#333;white-space:nowrap">ΕΟΠΥΥ</div></div>
<div style="position:absolute;left:1339px;top:396px;width:115.5px;height:17px;overflow:hidden"><div style="position:absolute;left:1.6px;top:-0.74px;line-height:20px;height:20px;font-size:10.5px;letter-spacing:-0.2px;color:#333;white-space:nowrap">ΤΡΙΚΛΙΝΟ Γ</div></div>
<div style="position:absolute;left:1457px;top:396px;width:45.5px;height:17px;overflow:hidden"><div style="position:absolute;left:1.6px;top:-0.84px;line-height:20px;height:20px;font-size:10.8px;letter-spacing:0;color:#333;white-space:nowrap">102</div></div>
<div style="position:absolute;left:1505px;top:396px;width:232.5px;height:17px;overflow:hidden"><div style="position:absolute;left:1.6px;top:-0.74px;line-height:20px;height:20px;font-size:10.5px;letter-spacing:-0.2px;color:#333;white-space:nowrap">ΠΑΘΟΛΟΓΙΚΟ</div></div>
<div style="position:absolute;left:1740px;top:396px;width:45.5px;height:17px;overflow:hidden"><div style="position:absolute;left:1.6px;top:-0.84px;line-height:20px;height:20px;font-size:10.8px;letter-spacing:0;color:#333;white-space:nowrap"></div></div>
<div style="position:absolute;left:10px;top:413px;width:1778px;height:1px;background:#d8d8d8"></div>
<div style="position:absolute;left:10px;top:414px;width:18px;height:17px;background:#f0f0f0"></div>
<div style="position:absolute;left:29px;top:414px;width:22.5px;height:17px;overflow:hidden"><div style="position:absolute;left:1.6px;top:-0.74px;line-height:20px;height:20px;font-size:10.5px;letter-spacing:-0.2px;color:#333;white-space:nowrap">Εσω</div></div>
<div style="position:absolute;left:54px;top:414px;width:45.5px;height:17px;overflow:hidden"><div style="position:absolute;left:1.6px;top:-0.84px;line-height:20px;height:20px;font-size:10.8px;letter-spacing:0;color:#333;white-space:nowrap">0028124</div></div>
<div style="position:absolute;left:102px;top:414px;width:41.5px;height:17px;overflow:hidden"><div style="position:absolute;left:1.6px;top:-0.84px;line-height:20px;height:20px;font-size:10.8px;letter-spacing:0;color:#333;white-space:nowrap">28<span style="margin:0 0.55px">/</span>4<span style="margin:0 0.55px">/</span>2020</div></div>
<div style="position:absolute;left:146px;top:414px;width:40.5px;height:17px;overflow:hidden"><div style="position:absolute;left:1.6px;top:-0.84px;line-height:20px;height:20px;font-size:10.8px;letter-spacing:0;color:#333;white-space:nowrap"></div></div>
<div style="position:absolute;left:189px;top:414px;width:232.5px;height:17px;overflow:hidden"><div style="position:absolute;left:1.6px;top:-0.74px;line-height:20px;height:20px;font-size:10.5px;letter-spacing:-0.2px;color:#333;white-space:nowrap">ΑΜΠΑΛΩΤΗΣ ΣΤΑΥΡΟΣ</div></div>
<div style="position:absolute;left:424px;top:414px;width:45.5px;height:17px;overflow:hidden"><div style="position:absolute;left:1.6px;top:-0.84px;line-height:20px;height:20px;font-size:10.8px;letter-spacing:0;color:#333;white-space:nowrap">0101580 345</div></div>
<div style="position:absolute;left:472px;top:414px;width:41.5px;height:17px;overflow:hidden"><div style="position:absolute;left:1.6px;top:-0.84px;line-height:20px;height:20px;font-size:10.8px;letter-spacing:0;color:#333;white-space:nowrap">1<span style="margin:0 0.55px">/</span>1<span style="margin:0 0.55px">/</span>1958</div></div>
<div style="position:absolute;left:516px;top:414px;width:115.5px;height:17px;overflow:hidden"><div style="position:absolute;left:1.6px;top:-0.74px;line-height:20px;height:20px;font-size:10.5px;letter-spacing:-0.2px;color:#333;white-space:nowrap">ΓΕΩΡΓΙΟΣ</div></div>
<div style="position:absolute;left:634px;top:414px;width:232.5px;height:17px;overflow:hidden"><div style="position:absolute;left:1.6px;top:-0.74px;line-height:20px;height:20px;font-size:10.5px;letter-spacing:-0.2px;color:#333;white-space:nowrap">ΛΑΡΙΣΑΙΩΝ</div></div>
<div style="position:absolute;left:869px;top:414px;width:232.5px;height:17px;overflow:hidden"><div style="position:absolute;left:1.6px;top:-0.74px;line-height:20px;height:20px;font-size:10.5px;letter-spacing:-0.2px;color:#333;white-space:nowrap">ΓΑΤΙΔΗΣ ΓΕΩΡΓΙΟΣ</div></div>
<div style="position:absolute;left:1104px;top:414px;width:232.5px;height:17px;overflow:hidden"><div style="position:absolute;left:1.6px;top:-0.74px;line-height:20px;height:20px;font-size:10.5px;letter-spacing:-0.2px;color:#333;white-space:nowrap">ΕΟΠΥΥ</div></div>
<div style="position:absolute;left:1339px;top:414px;width:115.5px;height:17px;overflow:hidden"><div style="position:absolute;left:1.6px;top:-0.74px;line-height:20px;height:20px;font-size:10.5px;letter-spacing:-0.2px;color:#333;white-space:nowrap">ΔΙΚΛΙΝΟ Βα</div></div>
<div style="position:absolute;left:1457px;top:414px;width:45.5px;height:17px;overflow:hidden"><div style="position:absolute;left:1.6px;top:-0.84px;line-height:20px;height:20px;font-size:10.8px;letter-spacing:0;color:#333;white-space:nowrap">403</div></div>
<div style="position:absolute;left:1505px;top:414px;width:232.5px;height:17px;overflow:hidden"><div style="position:absolute;left:1.6px;top:-0.74px;line-height:20px;height:20px;font-size:10.5px;letter-spacing:-0.2px;color:#333;white-space:nowrap">ΟΥΡΟΛΟΓΙΚΟ</div></div>
<div style="position:absolute;left:1740px;top:414px;width:45.5px;height:17px;overflow:hidden"><div style="position:absolute;left:1.6px;top:-0.84px;line-height:20px;height:20px;font-size:10.8px;letter-spacing:0;color:#333;white-space:nowrap">N35</div></div>
<div style="position:absolute;left:10px;top:431px;width:1778px;height:1px;background:#d8d8d8"></div>
<div style="position:absolute;left:10px;top:432px;width:18px;height:17px;background:#f0f0f0"></div>
<div style="position:absolute;left:29px;top:432px;width:22.5px;height:17px;overflow:hidden"><div style="position:absolute;left:1.6px;top:-0.74px;line-height:20px;height:20px;font-size:10.5px;letter-spacing:-0.2px;color:#333;white-space:nowrap">Εσω</div></div>
<div style="position:absolute;left:54px;top:432px;width:45.5px;height:17px;overflow:hidden"><div style="position:absolute;left:1.6px;top:-0.84px;line-height:20px;height:20px;font-size:10.8px;letter-spacing:0;color:#333;white-space:nowrap">0028120</div></div>
<div style="position:absolute;left:102px;top:432px;width:41.5px;height:17px;overflow:hidden"><div style="position:absolute;left:1.6px;top:-0.84px;line-height:20px;height:20px;font-size:10.8px;letter-spacing:0;color:#333;white-space:nowrap">28<span style="margin:0 0.55px">/</span>4<span style="margin:0 0.55px">/</span>2020</div></div>
<div style="position:absolute;left:146px;top:432px;width:40.5px;height:17px;overflow:hidden"><div style="position:absolute;left:1.6px;top:-0.84px;line-height:20px;height:20px;font-size:10.8px;letter-spacing:0;color:#333;white-space:nowrap"></div></div>
<div style="position:absolute;left:189px;top:432px;width:232.5px;height:17px;overflow:hidden"><div style="position:absolute;left:1.6px;top:-0.74px;line-height:20px;height:20px;font-size:10.5px;letter-spacing:-0.2px;color:#333;white-space:nowrap">ΑΜΠΕΛΛΟΥ ΕΙΡΗΝΗ</div></div>
<div style="position:absolute;left:424px;top:432px;width:45.5px;height:17px;overflow:hidden"><div style="position:absolute;left:1.6px;top:-0.84px;line-height:20px;height:20px;font-size:10.8px;letter-spacing:0;color:#333;white-space:nowrap">01018502345</div></div>
<div style="position:absolute;left:472px;top:432px;width:41.5px;height:17px;overflow:hidden"><div style="position:absolute;left:1.6px;top:-0.84px;line-height:20px;height:20px;font-size:10.8px;letter-spacing:0;color:#333;white-space:nowrap">1<span style="margin:0 0.55px">/</span>1<span style="margin:0 0.55px">/</span>1985</div></div>
<div style="position:absolute;left:516px;top:432px;width:115.5px;height:17px;overflow:hidden"><div style="position:absolute;left:1.6px;top:-0.74px;line-height:20px;height:20px;font-size:10.5px;letter-spacing:-0.2px;color:#333;white-space:nowrap">ΓΕΩΡΓΙΟΣ</div></div>
<div style="position:absolute;left:634px;top:432px;width:232.5px;height:17px;overflow:hidden"><div style="position:absolute;left:1.6px;top:-0.74px;line-height:20px;height:20px;font-size:10.5px;letter-spacing:-0.2px;color:#333;white-space:nowrap">ΛΑΡΙΣΑΙΩΝ</div></div>
<div style="position:absolute;left:869px;top:432px;width:232.5px;height:17px;overflow:hidden"><div style="position:absolute;left:1.6px;top:-0.74px;line-height:20px;height:20px;font-size:10.5px;letter-spacing:-0.2px;color:#333;white-space:nowrap">ΓΑΤΙΔΗΣ ΓΕΩΡΓΙΟΣ</div></div>
<div style="position:absolute;left:1104px;top:432px;width:232.5px;height:17px;overflow:hidden"><div style="position:absolute;left:1.6px;top:-0.74px;line-height:20px;height:20px;font-size:10.5px;letter-spacing:-0.2px;color:#333;white-space:nowrap">ΕΟΠΥΥ</div></div>
<div style="position:absolute;left:1339px;top:432px;width:115.5px;height:17px;overflow:hidden"><div style="position:absolute;left:1.6px;top:-0.74px;line-height:20px;height:20px;font-size:10.5px;letter-spacing:-0.2px;color:#333;white-space:nowrap">ΔΙΚΛΙΝΟ Βα</div></div>
<div style="position:absolute;left:1457px;top:432px;width:45.5px;height:17px;overflow:hidden"><div style="position:absolute;left:1.6px;top:-0.84px;line-height:20px;height:20px;font-size:10.8px;letter-spacing:0;color:#333;white-space:nowrap">402</div></div>
<div style="position:absolute;left:1505px;top:432px;width:232.5px;height:17px;overflow:hidden"><div style="position:absolute;left:1.6px;top:-0.74px;line-height:20px;height:20px;font-size:10.5px;letter-spacing:-0.2px;color:#333;white-space:nowrap">Μ/ΓΥΝΑΙΚΟΛΟΓΙΚΟ</div></div>
<div style="position:absolute;left:1740px;top:432px;width:45.5px;height:17px;overflow:hidden"><div style="position:absolute;left:1.6px;top:-0.84px;line-height:20px;height:20px;font-size:10.8px;letter-spacing:0;color:#333;white-space:nowrap"></div></div>
<div style="position:absolute;left:10px;top:449px;width:1778px;height:1px;background:#d8d8d8"></div>
<div style="position:absolute;left:10px;top:450px;width:18px;height:17px;background:#f0f0f0"></div>
<div style="position:absolute;left:29px;top:450px;width:22.5px;height:17px;overflow:hidden"><div style="position:absolute;left:1.6px;top:-0.74px;line-height:20px;height:20px;font-size:10.5px;letter-spacing:-0.2px;color:#333;white-space:nowrap">Εσω</div></div>
<div style="position:absolute;left:54px;top:450px;width:45.5px;height:17px;overflow:hidden"><div style="position:absolute;left:1.6px;top:-0.84px;line-height:20px;height:20px;font-size:10.8px;letter-spacing:0;color:#333;white-space:nowrap">0027927</div></div>
<div style="position:absolute;left:102px;top:450px;width:41.5px;height:17px;overflow:hidden"><div style="position:absolute;left:1.6px;top:-0.84px;line-height:20px;height:20px;font-size:10.8px;letter-spacing:0;color:#333;white-space:nowrap">11<span style="margin:0 0.55px">/</span>4<span style="margin:0 0.55px">/</span>2020</div></div>
<div style="position:absolute;left:146px;top:450px;width:40.5px;height:17px;overflow:hidden"><div style="position:absolute;left:1.6px;top:-0.84px;line-height:20px;height:20px;font-size:10.8px;letter-spacing:0;color:#333;white-space:nowrap"></div></div>
<div style="position:absolute;left:189px;top:450px;width:232.5px;height:17px;overflow:hidden"><div style="position:absolute;left:1.6px;top:-0.74px;line-height:20px;height:20px;font-size:10.5px;letter-spacing:-0.2px;color:#333;white-space:nowrap">ΑΜΠΛΟΥΚΑΣ ΔΗΜΗΤΡΙΟΣ</div></div>
<div style="position:absolute;left:424px;top:450px;width:45.5px;height:17px;overflow:hidden"><div style="position:absolute;left:1.6px;top:-0.84px;line-height:20px;height:20px;font-size:10.8px;letter-spacing:0;color:#333;white-space:nowrap">01013802345</div></div>
<div style="position:absolute;left:472px;top:450px;width:41.5px;height:17px;overflow:hidden"><div style="position:absolute;left:1.6px;top:-0.84px;line-height:20px;height:20px;font-size:10.8px;letter-spacing:0;color:#333;white-space:nowrap">1<span style="margin:0 0.55px">/</span>1<span style="margin:0 0.55px">/</span>1938</div></div>
<div style="position:absolute;left:516px;top:450px;width:115.5px;height:17px;overflow:hidden"><div style="position:absolute;left:1.6px;top:-0.74px;line-height:20px;height:20px;font-size:10.5px;letter-spacing:-0.2px;color:#333;white-space:nowrap">ΓΕΩΡΓΙΟΣ</div></div>
<div style="position:absolute;left:634px;top:450px;width:232.5px;height:17px;overflow:hidden"><div style="position:absolute;left:1.6px;top:-0.84px;line-height:20px;height:20px;font-size:10.8px;letter-spacing:0;color:#333;white-space:nowrap"></div></div>
<div style="position:absolute;left:869px;top:450px;width:232.5px;height:17px;overflow:hidden"><div style="position:absolute;left:1.6px;top:-0.74px;line-height:20px;height:20px;font-size:10.5px;letter-spacing:-0.2px;color:#333;white-space:nowrap">ΓΑΤΙΔΗΣ ΓΕΩΡΓΙΟΣ</div></div>
<div style="position:absolute;left:1104px;top:450px;width:232.5px;height:17px;overflow:hidden"><div style="position:absolute;left:1.6px;top:-0.74px;line-height:20px;height:20px;font-size:10.5px;letter-spacing:-0.2px;color:#333;white-space:nowrap">ΕΟΠΥΥ</div></div>
<div style="position:absolute;left:1339px;top:450px;width:115.5px;height:17px;overflow:hidden"><div style="position:absolute;left:1.6px;top:-0.74px;line-height:20px;height:20px;font-size:10.5px;letter-spacing:-0.2px;color:#333;white-space:nowrap">ΑΠΟΜΟΝΩΣΗ</div></div>
<div style="position:absolute;left:1457px;top:450px;width:45.5px;height:17px;overflow:hidden"><div style="position:absolute;left:1.6px;top:-0.84px;line-height:20px;height:20px;font-size:10.8px;letter-spacing:0;color:#333;white-space:nowrap">307</div></div>
<div style="position:absolute;left:1505px;top:450px;width:232.5px;height:17px;overflow:hidden"><div style="position:absolute;left:1.6px;top:-0.74px;line-height:20px;height:20px;font-size:10.5px;letter-spacing:-0.2px;color:#333;white-space:nowrap">ΝΕΥΡΟΛΟΓΙΚΟ</div></div>
<div style="position:absolute;left:1740px;top:450px;width:45.5px;height:17px;overflow:hidden"><div style="position:absolute;left:1.6px;top:-0.84px;line-height:20px;height:20px;font-size:10.8px;letter-spacing:0;color:#333;white-space:nowrap">F03</div></div>
<div style="position:absolute;left:10px;top:467px;width:1778px;height:1px;background:#d8d8d8"></div>
<div style="position:absolute;left:10px;top:468px;width:18px;height:17px;background:#f0f0f0"></div>
<div style="position:absolute;left:29px;top:468px;width:22.5px;height:17px;overflow:hidden"><div style="position:absolute;left:1.6px;top:-0.74px;line-height:20px;height:20px;font-size:10.5px;letter-spacing:-0.2px;color:#333;white-space:nowrap">Εσω</div></div>
<div style="position:absolute;left:54px;top:468px;width:45.5px;height:17px;overflow:hidden"><div style="position:absolute;left:1.6px;top:-0.84px;line-height:20px;height:20px;font-size:10.8px;letter-spacing:0;color:#333;white-space:nowrap">0028024</div></div>
<div style="position:absolute;left:102px;top:468px;width:41.5px;height:17px;overflow:hidden"><div style="position:absolute;left:1.6px;top:-0.84px;line-height:20px;height:20px;font-size:10.8px;letter-spacing:0;color:#333;white-space:nowrap">21<span style="margin:0 0.55px">/</span>4<span style="margin:0 0.55px">/</span>2020</div></div>
<div style="position:absolute;left:146px;top:468px;width:40.5px;height:17px;overflow:hidden"><div style="position:absolute;left:1.6px;top:-0.84px;line-height:20px;height:20px;font-size:10.8px;letter-spacing:0;color:#333;white-space:nowrap"></div></div>
<div style="position:absolute;left:189px;top:468px;width:232.5px;height:17px;overflow:hidden"><div style="position:absolute;left:1.6px;top:-0.74px;line-height:20px;height:20px;font-size:10.5px;letter-spacing:-0.2px;color:#333;white-space:nowrap">ΑΝΤΟΝΤΗ ΓΕΩΡΓΙΑ</div></div>
<div style="position:absolute;left:424px;top:468px;width:45.5px;height:17px;overflow:hidden"><div style="position:absolute;left:1.6px;top:-0.84px;line-height:20px;height:20px;font-size:10.8px;letter-spacing:0;color:#333;white-space:nowrap">01017204345</div></div>
<div style="position:absolute;left:472px;top:468px;width:41.5px;height:17px;overflow:hidden"><div style="position:absolute;left:1.6px;top:-0.84px;line-height:20px;height:20px;font-size:10.8px;letter-spacing:0;color:#333;white-space:nowrap">1<span style="margin:0 0.55px">/</span>1<span style="margin:0 0.55px">/</span>1972</div></div>
<div style="position:absolute;left:516px;top:468px;width:115.5px;height:17px;overflow:hidden"><div style="position:absolute;left:1.6px;top:-0.74px;line-height:20px;height:20px;font-size:10.5px;letter-spacing:-0.2px;color:#333;white-space:nowrap">ΚΩΝΣΤΑΝΤΙΝΟΣ</div></div>
<div style="position:absolute;left:634px;top:468px;width:232.5px;height:17px;overflow:hidden"><div style="position:absolute;left:1.6px;top:-0.74px;line-height:20px;height:20px;font-size:10.5px;letter-spacing:-0.2px;color:#333;white-space:nowrap">ΛΑΡΙΣΑΙΩΝ</div></div>
<div style="position:absolute;left:869px;top:468px;width:232.5px;height:17px;overflow:hidden"><div style="position:absolute;left:1.6px;top:-0.74px;line-height:20px;height:20px;font-size:10.5px;letter-spacing:-0.2px;color:#333;white-space:nowrap">ΓΑΤΙΔΗΣ ΓΕΩΡΓΙΟΣ</div></div>
<div style="position:absolute;left:1104px;top:468px;width:232.5px;height:17px;overflow:hidden"><div style="position:absolute;left:1.6px;top:-0.74px;line-height:20px;height:20px;font-size:10.5px;letter-spacing:-0.2px;color:#333;white-space:nowrap">ΕΟΠΥΥ</div></div>
<div style="position:absolute;left:1339px;top:468px;width:115.5px;height:17px;overflow:hidden"><div style="position:absolute;left:1.6px;top:-0.74px;line-height:20px;height:20px;font-size:10.5px;letter-spacing:-0.2px;color:#333;white-space:nowrap">ΟΓΚΟΛΟΓΙΑ</div></div>
<div style="position:absolute;left:1457px;top:468px;width:45.5px;height:17px;overflow:hidden"><div style="position:absolute;left:1.6px;top:-0.84px;line-height:20px;height:20px;font-size:10.8px;letter-spacing:0;color:#333;white-space:nowrap">208</div></div>
<div style="position:absolute;left:1505px;top:468px;width:232.5px;height:17px;overflow:hidden"><div style="position:absolute;left:1.6px;top:-0.74px;line-height:20px;height:20px;font-size:10.5px;letter-spacing:-0.2px;color:#333;white-space:nowrap">ΠΑΘΟΛΟΓΙΚΗ ΟΓΚΟΛΟΓΙΑ</div></div>
<div style="position:absolute;left:1740px;top:468px;width:45.5px;height:17px;overflow:hidden"><div style="position:absolute;left:1.6px;top:-0.84px;line-height:20px;height:20px;font-size:10.8px;letter-spacing:0;color:#333;white-space:nowrap">R52.0</div></div>
<div style="position:absolute;left:10px;top:485px;width:1778px;height:1px;background:#d8d8d8"></div>
<div style="position:absolute;left:10px;top:486px;width:18px;height:17px;background:#f0f0f0"></div>
<div style="position:absolute;left:29px;top:486px;width:22.5px;height:17px;overflow:hidden"><div style="position:absolute;left:1.6px;top:-0.74px;line-height:20px;height:20px;font-size:10.5px;letter-spacing:-0.2px;color:#333;white-space:nowrap">Εσω</div></div>
<div style="position:absolute;left:54px;top:486px;width:45.5px;height:17px;overflow:hidden"><div style="position:absolute;left:1.6px;top:-0.84px;line-height:20px;height:20px;font-size:10.8px;letter-spacing:0;color:#333;white-space:nowrap">0027786</div></div>
<div style="position:absolute;left:102px;top:486px;width:41.5px;height:17px;overflow:hidden"><div style="position:absolute;left:1.6px;top:-0.84px;line-height:20px;height:20px;font-size:10.8px;letter-spacing:0;color:#333;white-space:nowrap">30<span style="margin:0 0.55px">/</span>3<span style="margin:0 0.55px">/</span>2020</div></div>
<div style="position:absolute;left:146px;top:486px;width:40.5px;height:17px;overflow:hidden"><div style="position:absolute;left:1.6px;top:-0.84px;line-height:20px;height:20px;font-size:10.8px;letter-spacing:0;color:#333;white-space:nowrap"></div></div>
<div style="position:absolute;left:189px;top:486px;width:232.5px;height:17px;overflow:hidden"><div style="position:absolute;left:1.6px;top:-0.74px;line-height:20px;height:20px;font-size:10.5px;letter-spacing:-0.2px;color:#333;white-space:nowrap">ΑΠΑΝΑΓΙΩΤΙΔΟΥ ΣΤΥΛΙΑΝΗ</div></div>
<div style="position:absolute;left:424px;top:486px;width:45.5px;height:17px;overflow:hidden"><div style="position:absolute;left:1.6px;top:-0.84px;line-height:20px;height:20px;font-size:10.8px;letter-spacing:0;color:#333;white-space:nowrap">01013002345</div></div>
<div style="position:absolute;left:472px;top:486px;width:41.5px;height:17px;overflow:hidden"><div style="position:absolute;left:1.6px;top:-0.84px;line-height:20px;height:20px;font-size:10.8px;letter-spacing:0;color:#333;white-space:nowrap">1<span style="margin:0 0.55px">/</span>1<span style="margin:0 0.55px">/</span>1930</div></div>
<div style="position:absolute;left:516px;top:486px;width:115.5px;height:17px;overflow:hidden"><div style="position:absolute;left:1.6px;top:-0.74px;line-height:20px;height:20px;font-size:10.5px;letter-spacing:-0.2px;color:#333;white-space:nowrap">ΓΕΩΡΓΙΟΣ</div></div>
<div style="position:absolute;left:634px;top:486px;width:232.5px;height:17px;overflow:hidden"><div style="position:absolute;left:1.6px;top:-0.74px;line-height:20px;height:20px;font-size:10.5px;letter-spacing:-0.2px;color:#333;white-space:nowrap">ΛΑΡΙΣΑΙΩΝ</div></div>
<div style="position:absolute;left:869px;top:486px;width:232.5px;height:17px;overflow:hidden"><div style="position:absolute;left:1.6px;top:-0.74px;line-height:20px;height:20px;font-size:10.5px;letter-spacing:-0.2px;color:#333;white-space:nowrap">ΓΑΤΙΔΗΣ ΓΕΩΡΓΙΟΣ</div></div>
<div style="position:absolute;left:1104px;top:486px;width:232.5px;height:17px;overflow:hidden"><div style="position:absolute;left:1.6px;top:-0.74px;line-height:20px;height:20px;font-size:10.5px;letter-spacing:-0.2px;color:#333;white-space:nowrap">ΕΟΠΥΥ</div></div>
<div style="position:absolute;left:1339px;top:486px;width:115.5px;height:17px;overflow:hidden"><div style="position:absolute;left:1.6px;top:-0.74px;line-height:20px;height:20px;font-size:10.5px;letter-spacing:-0.2px;color:#333;white-space:nowrap">ΠΕΝΤΑΚΛΙΝΟ Γ</div></div>
<div style="position:absolute;left:1457px;top:486px;width:45.5px;height:17px;overflow:hidden"><div style="position:absolute;left:1.6px;top:-0.84px;line-height:20px;height:20px;font-size:10.8px;letter-spacing:0;color:#333;white-space:nowrap">108</div></div>
<div style="position:absolute;left:1505px;top:486px;width:232.5px;height:17px;overflow:hidden"><div style="position:absolute;left:1.6px;top:-0.74px;line-height:20px;height:20px;font-size:10.5px;letter-spacing:-0.2px;color:#333;white-space:nowrap">ΝΕΦΡΟΛΟΓΙΚΟ</div></div>
<div style="position:absolute;left:1740px;top:486px;width:45.5px;height:17px;overflow:hidden"><div style="position:absolute;left:1.6px;top:-0.84px;line-height:20px;height:20px;font-size:10.8px;letter-spacing:0;color:#333;white-space:nowrap">N18</div></div>
<div style="position:absolute;left:10px;top:503px;width:1778px;height:1px;background:#d8d8d8"></div>
<div style="position:absolute;left:10px;top:504px;width:18px;height:17px;background:#f0f0f0"></div>
<div style="position:absolute;left:29px;top:504px;width:22.5px;height:17px;overflow:hidden"><div style="position:absolute;left:1.6px;top:-0.74px;line-height:20px;height:20px;font-size:10.5px;letter-spacing:-0.2px;color:#333;white-space:nowrap">Εσω</div></div>
<div style="position:absolute;left:54px;top:504px;width:45.5px;height:17px;overflow:hidden"><div style="position:absolute;left:1.6px;top:-0.84px;line-height:20px;height:20px;font-size:10.8px;letter-spacing:0;color:#333;white-space:nowrap">0028027</div></div>
<div style="position:absolute;left:102px;top:504px;width:41.5px;height:17px;overflow:hidden"><div style="position:absolute;left:1.6px;top:-0.84px;line-height:20px;height:20px;font-size:10.8px;letter-spacing:0;color:#333;white-space:nowrap">22<span style="margin:0 0.55px">/</span>4<span style="margin:0 0.55px">/</span>2020</div></div>
<div style="position:absolute;left:146px;top:504px;width:40.5px;height:17px;overflow:hidden"><div style="position:absolute;left:1.6px;top:-0.84px;line-height:20px;height:20px;font-size:10.8px;letter-spacing:0;color:#333;white-space:nowrap"></div></div>
<div style="position:absolute;left:189px;top:504px;width:232.5px;height:17px;overflow:hidden"><div style="position:absolute;left:1.6px;top:-0.74px;line-height:20px;height:20px;font-size:10.5px;letter-spacing:-0.2px;color:#333;white-space:nowrap">ΑΠΑΠΑΓΡΗΓΟΡΗΣ ΚΩΝΣΤΑΝΤΙΝΟΣ</div></div>
<div style="position:absolute;left:424px;top:504px;width:45.5px;height:17px;overflow:hidden"><div style="position:absolute;left:1.6px;top:-0.84px;line-height:20px;height:20px;font-size:10.8px;letter-spacing:0;color:#333;white-space:nowrap">01014303456</div></div>
<div style="position:absolute;left:472px;top:504px;width:41.5px;height:17px;overflow:hidden"><div style="position:absolute;left:1.6px;top:-0.84px;line-height:20px;height:20px;font-size:10.8px;letter-spacing:0;color:#333;white-space:nowrap">1<span style="margin:0 0.55px">/</span>1<span style="margin:0 0.55px">/</span>1943</div></div>
<div style="position:absolute;left:516px;top:504px;width:115.5px;height:17px;overflow:hidden"><div style="position:absolute;left:1.6px;top:-0.74px;line-height:20px;height:20px;font-size:10.5px;letter-spacing:-0.2px;color:#333;white-space:nowrap">ΓΕΩΡΓΙΟΣ</div></div>
<div style="position:absolute;left:634px;top:504px;width:232.5px;height:17px;overflow:hidden"><div style="position:absolute;left:1.6px;top:-0.74px;line-height:20px;height:20px;font-size:10.5px;letter-spacing:-0.2px;color:#333;white-space:nowrap">ΛΑΡΙΣΑΙΩΝ</div></div>
<div style="position:absolute;left:869px;top:504px;width:232.5px;height:17px;overflow:hidden"><div style="position:absolute;left:1.6px;top:-0.74px;line-height:20px;height:20px;font-size:10.5px;letter-spacing:-0.2px;color:#333;white-space:nowrap">ΓΑΤΙΔΗΣ ΓΕΩΡΓΙΟΣ</div></div>
<div style="position:absolute;left:1104px;top:504px;width:232.5px;height:17px;overflow:hidden"><div style="position:absolute;left:1.6px;top:-0.74px;line-height:20px;height:20px;font-size:10.5px;letter-spacing:-0.2px;color:#333;white-space:nowrap">ΕΟΠΥΥ</div></div>
<div style="position:absolute;left:1339px;top:504px;width:115.5px;height:17px;overflow:hidden"><div style="position:absolute;left:1.6px;top:-0.74px;line-height:20px;height:20px;font-size:10.5px;letter-spacing:-0.2px;color:#333;white-space:nowrap">ΠΕΝΤΑΚΛΙΝΟ Γ</div></div>
<div style="position:absolute;left:1457px;top:504px;width:45.5px;height:17px;overflow:hidden"><div style="position:absolute;left:1.6px;top:-0.84px;line-height:20px;height:20px;font-size:10.8px;letter-spacing:0;color:#333;white-space:nowrap">108</div></div>
<div style="position:absolute;left:1505px;top:504px;width:232.5px;height:17px;overflow:hidden"><div style="position:absolute;left:1.6px;top:-0.74px;line-height:20px;height:20px;font-size:10.5px;letter-spacing:-0.2px;color:#333;white-space:nowrap">ΝΕΦΡΟΛΟΓΙΚΟ</div></div>
<div style="position:absolute;left:1740px;top:504px;width:45.5px;height:17px;overflow:hidden"><div style="position:absolute;left:1.6px;top:-0.84px;line-height:20px;height:20px;font-size:10.8px;letter-spacing:0;color:#333;white-space:nowrap">N18</div></div>
<div style="position:absolute;left:10px;top:521px;width:1778px;height:1px;background:#d8d8d8"></div>
<div style="position:absolute;left:10px;top:522px;width:18px;height:17px;background:#f0f0f0"></div>
<div style="position:absolute;left:29px;top:522px;width:22.5px;height:17px;overflow:hidden"><div style="position:absolute;left:1.6px;top:-0.74px;line-height:20px;height:20px;font-size:10.5px;letter-spacing:-0.2px;color:#333;white-space:nowrap">Εσω</div></div>
<div style="position:absolute;left:54px;top:522px;width:45.5px;height:17px;overflow:hidden"><div style="position:absolute;left:1.6px;top:-0.84px;line-height:20px;height:20px;font-size:10.8px;letter-spacing:0;color:#333;white-space:nowrap">0028108</div></div>
<div style="position:absolute;left:102px;top:522px;width:41.5px;height:17px;overflow:hidden"><div style="position:absolute;left:1.6px;top:-0.84px;line-height:20px;height:20px;font-size:10.8px;letter-spacing:0;color:#333;white-space:nowrap">27<span style="margin:0 0.55px">/</span>4<span style="margin:0 0.55px">/</span>2020</div></div>
<div style="position:absolute;left:146px;top:522px;width:40.5px;height:17px;overflow:hidden"><div style="position:absolute;left:1.6px;top:-0.84px;line-height:20px;height:20px;font-size:10.8px;letter-spacing:0;color:#333;white-space:nowrap"></div></div>
<div style="position:absolute;left:189px;top:522px;width:232.5px;height:17px;overflow:hidden"><div style="position:absolute;left:1.6px;top:-0.74px;line-height:20px;height:20px;font-size:10.5px;letter-spacing:-0.2px;color:#333;white-space:nowrap">ΑΡΑΜΠΑΤΖΗΣ ΓΕΩΡΓΙΟΣ</div></div>
<div style="position:absolute;left:424px;top:522px;width:45.5px;height:17px;overflow:hidden"><div style="position:absolute;left:1.6px;top:-0.84px;line-height:20px;height:20px;font-size:10.8px;letter-spacing:0;color:#333;white-space:nowrap">01017602345</div></div>
<div style="position:absolute;left:472px;top:522px;width:41.5px;height:17px;overflow:hidden"><div style="position:absolute;left:1.6px;top:-0.84px;line-height:20px;height:20px;font-size:10.8px;letter-spacing:0;color:#333;white-space:nowrap">1<span style="margin:0 0.55px">/</span>1<span style="margin:0 0.55px">/</span>1976</div></div>
<div style="position:absolute;left:516px;top:522px;width:115.5px;height:17px;overflow:hidden"><div style="position:absolute;left:1.6px;top:-0.74px;line-height:20px;height:20px;font-size:10.5px;letter-spacing:-0.2px;color:#333;white-space:nowrap">ΔΗΜΗΤΡΙΟΣ</div></div>
<div style="position:absolute;left:634px;top:522px;width:232.5px;height:17px;overflow:hidden"><div style="position:absolute;left:1.6px;top:-0.74px;line-height:20px;height:20px;font-size:10.5px;letter-spacing:-0.2px;color:#333;white-space:nowrap">ΛΑΡΙΣΑΙΩΝ</div></div>
<div style="position:absolute;left:869px;top:522px;width:232.5px;height:17px;overflow:hidden"><div style="position:absolute;left:1.6px;top:-0.74px;line-height:20px;height:20px;font-size:10.5px;letter-spacing:-0.2px;color:#333;white-space:nowrap">ΓΑΤΙΔΗΣ ΓΕΩΡΓΙΟΣ</div></div>
<div style="position:absolute;left:1104px;top:522px;width:232.5px;height:17px;overflow:hidden"><div style="position:absolute;left:1.6px;top:-0.74px;line-height:20px;height:20px;font-size:10.5px;letter-spacing:-0.2px;color:#333;white-space:nowrap">ΕΟΠΥΥ</div></div>
<div style="position:absolute;left:1339px;top:522px;width:115.5px;height:17px;overflow:hidden"><div style="position:absolute;left:1.6px;top:-0.74px;line-height:20px;height:20px;font-size:10.5px;letter-spacing:-0.2px;color:#333;white-space:nowrap">ΤΡΙΚΛΙΝΟ Γ</div></div>
<div style="position:absolute;left:1457px;top:522px;width:45.5px;height:17px;overflow:hidden"><div style="position:absolute;left:1.6px;top:-0.84px;line-height:20px;height:20px;font-size:10.8px;letter-spacing:0;color:#333;white-space:nowrap">301</div></div>
<div style="position:absolute;left:1505px;top:522px;width:232.5px;height:17px;overflow:hidden"><div style="position:absolute;left:1.6px;top:-0.74px;line-height:20px;height:20px;font-size:10.5px;letter-spacing:-0.2px;color:#333;white-space:nowrap">ΟΡΘΟΠΕΔΙΚΟ</div></div>
<div style="position:absolute;left:1740px;top:522px;width:45.5px;height:17px;overflow:hidden"><div style="position:absolute;left:1.6px;top:-0.84px;line-height:20px;height:20px;font-size:10.8px;letter-spacing:0;color:#333;white-space:nowrap">S52</div></div>
<div style="position:absolute;left:10px;top:539px;width:1778px;height:1px;background:#d8d8d8"></div>
<div style="position:absolute;left:10px;top:540px;width:18px;height:17px;background:#f0f0f0"></div>
<div style="position:absolute;left:29px;top:540px;width:22.5px;height:17px;overflow:hidden"><div style="position:absolute;left:1.6px;top:-0.74px;line-height:20px;height:20px;font-size:10.5px;letter-spacing:-0.2px;color:#333;white-space:nowrap">Εσω</div></div>
<div style="position:absolute;left:54px;top:540px;width:45.5px;height:17px;overflow:hidden"><div style="position:absolute;left:1.6px;top:-0.84px;line-height:20px;height:20px;font-size:10.8px;letter-spacing:0;color:#333;white-space:nowrap">0028121</div></div>
<div style="position:absolute;left:102px;top:540px;width:41.5px;height:17px;overflow:hidden"><div style="position:absolute;left:1.6px;top:-0.84px;line-height:20px;height:20px;font-size:10.8px;letter-spacing:0;color:#333;white-space:nowrap">28<span style="margin:0 0.55px">/</span>4<span style="margin:0 0.55px">/</span>2020</div></div>
<div style="position:absolute;left:146px;top:540px;width:40.5px;height:17px;overflow:hidden"><div style="position:absolute;left:1.6px;top:-0.84px;line-height:20px;height:20px;font-size:10.8px;letter-spacing:0;color:#333;white-space:nowrap"></div></div>
<div style="position:absolute;left:189px;top:540px;width:232.5px;height:17px;overflow:hidden"><div style="position:absolute;left:1.6px;top:-0.74px;line-height:20px;height:20px;font-size:10.5px;letter-spacing:-0.2px;color:#333;white-space:nowrap">ΑΡΓΥΡΗ ΜΑΡΙΑ</div></div>
<div style="position:absolute;left:424px;top:540px;width:45.5px;height:17px;overflow:hidden"><div style="position:absolute;left:1.6px;top:-0.84px;line-height:20px;height:20px;font-size:10.8px;letter-spacing:0;color:#333;white-space:nowrap">01019303456</div></div>
<div style="position:absolute;left:472px;top:540px;width:41.5px;height:17px;overflow:hidden"><div style="position:absolute;left:1.6px;top:-0.84px;line-height:20px;height:20px;font-size:10.8px;letter-spacing:0;color:#333;white-space:nowrap">1<span style="margin:0 0.55px">/</span>1<span style="margin:0 0.55px">/</span>1993</div></div>
<div style="position:absolute;left:516px;top:540px;width:115.5px;height:17px;overflow:hidden"><div style="position:absolute;left:1.6px;top:-0.74px;line-height:20px;height:20px;font-size:10.5px;letter-spacing:-0.2px;color:#333;white-space:nowrap">ΙΩΑΝΝΗΣ</div></div>
<div style="position:absolute;left:634px;top:540px;width:232.5px;height:17px;overflow:hidden"><div style="position:absolute;left:1.6px;top:-0.74px;line-height:20px;height:20px;font-size:10.5px;letter-spacing:-0.2px;color:#333;white-space:nowrap">ΛΑΡΙΣΑΙΩΝ</div></div>
<div style="position:absolute;left:869px;top:540px;width:232.5px;height:17px;overflow:hidden"><div style="position:absolute;left:1.6px;top:-0.74px;line-height:20px;height:20px;font-size:10.5px;letter-spacing:-0.2px;color:#333;white-space:nowrap">ΓΑΤΙΔΗΣ ΓΕΩΡΓΙΟΣ</div></div>
<div style="position:absolute;left:1104px;top:540px;width:232.5px;height:17px;overflow:hidden"><div style="position:absolute;left:1.6px;top:-0.74px;line-height:20px;height:20px;font-size:10.5px;letter-spacing:-0.2px;color:#333;white-space:nowrap">ΙΔΙΩΤΗΣ</div></div>
<div style="position:absolute;left:1339px;top:540px;width:115.5px;height:17px;overflow:hidden"><div style="position:absolute;left:1.6px;top:-0.74px;line-height:20px;height:20px;font-size:10.5px;letter-spacing:-0.2px;color:#333;white-space:nowrap">ΑΠΟΜΟΝΩΣΗ</div></div>
<div style="position:absolute;left:1457px;top:540px;width:45.5px;height:17px;overflow:hidden"><div style="position:absolute;left:1.6px;top:-0.84px;line-height:20px;height:20px;font-size:10.8px;letter-spacing:0;color:#333;white-space:nowrap">105</div></div>
<div style="position:absolute;left:1505px;top:540px;width:232.5px;height:17px;overflow:hidden"><div style="position:absolute;left:1.6px;top:-0.74px;line-height:20px;height:20px;font-size:10.5px;letter-spacing:-0.2px;color:#333;white-space:nowrap">ΠΑΘΟΛΟΓΙΚΟ</div></div>
<div style="position:absolute;left:1740px;top:540px;width:45.5px;height:17px;overflow:hidden"><div style="position:absolute;left:1.6px;top:-0.84px;line-height:20px;height:20px;font-size:10.8px;letter-spacing:0;color:#333;white-space:nowrap">G35</div></div>
<div style="position:absolute;left:10px;top:557px;width:1778px;height:1px;background:#d8d8d8"></div>
<div style="position:absolute;left:10px;top:558px;width:18px;height:17px;background:#f0f0f0"></div>
<div style="position:absolute;left:29px;top:558px;width:22.5px;height:17px;overflow:hidden"><div style="position:absolute;left:1.6px;top:-0.74px;line-height:20px;height:20px;font-size:10.5px;letter-spacing:-0.2px;color:#333;white-space:nowrap">Εσω</div></div>
<div style="position:absolute;left:54px;top:558px;width:45.5px;height:17px;overflow:hidden"><div style="position:absolute;left:1.6px;top:-0.84px;line-height:20px;height:20px;font-size:10.8px;letter-spacing:0;color:#333;white-space:nowrap">0028083</div></div>
<div style="position:absolute;left:102px;top:558px;width:41.5px;height:17px;overflow:hidden"><div style="position:absolute;left:1.6px;top:-0.84px;line-height:20px;height:20px;font-size:10.8px;letter-spacing:0;color:#333;white-space:nowrap">24<span style="margin:0 0.55px">/</span>4<span style="margin:0 0.55px">/</span>2020</div></div>
<div style="position:absolute;left:146px;top:558px;width:40.5px;height:17px;overflow:hidden"><div style="position:absolute;left:1.6px;top:-0.84px;line-height:20px;height:20px;font-size:10.8px;letter-spacing:0;color:#333;white-space:nowrap"></div></div>
<div style="position:absolute;left:189px;top:558px;width:232.5px;height:17px;overflow:hidden"><div style="position:absolute;left:1.6px;top:-0.74px;line-height:20px;height:20px;font-size:10.5px;letter-spacing:-0.2px;color:#333;white-space:nowrap">ΑΡΓΥΡΟΠΟΥΛΟΣ ΒΑΣΙΛΕΙΟΣ</div></div>
<div style="position:absolute;left:424px;top:558px;width:45.5px;height:17px;overflow:hidden"><div style="position:absolute;left:1.6px;top:-0.84px;line-height:20px;height:20px;font-size:10.8px;letter-spacing:0;color:#333;white-space:nowrap">01016802345</div></div>
<div style="position:absolute;left:472px;top:558px;width:41.5px;height:17px;overflow:hidden"><div style="position:absolute;left:1.6px;top:-0.84px;line-height:20px;height:20px;font-size:10.8px;letter-spacing:0;color:#333;white-space:nowrap">1<span style="margin:0 0.55px">/</span>1<span style="margin:0 0.55px">/</span>1968</div></div>
<div style="position:absolute;left:516px;top:558px;width:115.5px;height:17px;overflow:hidden"><div style="position:absolute;left:1.6px;top:-0.74px;line-height:20px;height:20px;font-size:10.5px;letter-spacing:-0.2px;color:#333;white-space:nowrap">ΓΕΩΡΓΙΟΣ</div></div>
<div style="position:absolute;left:634px;top:558px;width:232.5px;height:17px;overflow:hidden"><div style="position:absolute;left:1.6px;top:-0.74px;line-height:20px;height:20px;font-size:10.5px;letter-spacing:-0.2px;color:#333;white-space:nowrap">ΛΑΡΙΣΑΙΩΝ</div></div>
<div style="position:absolute;left:869px;top:558px;width:232.5px;height:17px;overflow:hidden"><div style="position:absolute;left:1.6px;top:-0.74px;line-height:20px;height:20px;font-size:10.5px;letter-spacing:-0.2px;color:#333;white-space:nowrap">ΓΑΤΙΔΗΣ ΓΕΩΡΓΙΟΣ</div></div>
<div style="position:absolute;left:1104px;top:558px;width:232.5px;height:17px;overflow:hidden"><div style="position:absolute;left:1.6px;top:-0.74px;line-height:20px;height:20px;font-size:10.5px;letter-spacing:-0.2px;color:#333;white-space:nowrap">ΕΟΠΥΥ</div></div>
<div style="position:absolute;left:1339px;top:558px;width:115.5px;height:17px;overflow:hidden"><div style="position:absolute;left:1.6px;top:-0.74px;line-height:20px;height:20px;font-size:10.5px;letter-spacing:-0.2px;color:#333;white-space:nowrap">ΤΡΙΚΛΙΝΟ Γ</div></div>
<div style="position:absolute;left:1457px;top:558px;width:45.5px;height:17px;overflow:hidden"><div style="position:absolute;left:1.6px;top:-0.84px;line-height:20px;height:20px;font-size:10.8px;letter-spacing:0;color:#333;white-space:nowrap">301</div></div>
<div style="position:absolute;left:1505px;top:558px;width:232.5px;height:17px;overflow:hidden"><div style="position:absolute;left:1.6px;top:-0.74px;line-height:20px;height:20px;font-size:10.5px;letter-spacing:-0.2px;color:#333;white-space:nowrap">ΟΡΘΟΠΕΔΙΚΟ</div></div>
<div style="position:absolute;left:1740px;top:558px;width:45.5px;height:17px;overflow:hidden"><div style="position:absolute;left:1.6px;top:-0.84px;line-height:20px;height:20px;font-size:10.8px;letter-spacing:0;color:#333;white-space:nowrap">S72</div></div>
<div style="position:absolute;left:10px;top:575px;width:1778px;height:1px;background:#d8d8d8"></div>
<div style="position:absolute;left:10px;top:576px;width:18px;height:17px;background:#f0f0f0"></div>
<div style="position:absolute;left:29px;top:576px;width:22.5px;height:17px;overflow:hidden"><div style="position:absolute;left:1.6px;top:-0.74px;line-height:20px;height:20px;font-size:10.5px;letter-spacing:-0.2px;color:#333;white-space:nowrap">Εσω</div></div>
<div style="position:absolute;left:54px;top:576px;width:45.5px;height:17px;overflow:hidden"><div style="position:absolute;left:1.6px;top:-0.84px;line-height:20px;height:20px;font-size:10.8px;letter-spacing:0;color:#333;white-space:nowrap">0028003</div></div>
<div style="position:absolute;left:102px;top:576px;width:41.5px;height:17px;overflow:hidden"><div style="position:absolute;left:1.6px;top:-0.84px;line-height:20px;height:20px;font-size:10.8px;letter-spacing:0;color:#333;white-space:nowrap">18<span style="margin:0 0.55px">/</span>4<span style="margin:0 0.55px">/</span>2020</div></div>
<div style="position:absolute;left:146px;top:576px;width:40.5px;height:17px;overflow:hidden"><div style="position:absolute;left:1.6px;top:-0.84px;line-height:20px;height:20px;font-size:10.8px;letter-spacing:0;color:#333;white-space:nowrap"></div></div>
<div style="position:absolute;left:189px;top:576px;width:232.5px;height:17px;overflow:hidden"><div style="position:absolute;left:1.6px;top:-0.74px;line-height:20px;height:20px;font-size:10.5px;letter-spacing:-0.2px;color:#333;white-space:nowrap">ΑΡΣΕΝΙΟΥ ΒΙΚΤΩΡΙΑ</div></div>
<div style="position:absolute;left:424px;top:576px;width:45.5px;height:17px;overflow:hidden"><div style="position:absolute;left:1.6px;top:-0.84px;line-height:20px;height:20px;font-size:10.8px;letter-spacing:0;color:#333;white-space:nowrap">01012902345</div></div>
<div style="position:absolute;left:472px;top:576px;width:41.5px;height:17px;overflow:hidden"><div style="position:absolute;left:1.6px;top:-0.84px;line-height:20px;height:20px;font-size:10.8px;letter-spacing:0;color:#333;white-space:nowrap">1<span style="margin:0 0.55px">/</span>1<span style="margin:0 0.55px">/</span>1929</div></div>
<div style="position:absolute;left:516px;top:576px;width:115.5px;height:17px;overflow:hidden"><div style="position:absolute;left:1.6px;top:-0.74px;line-height:20px;height:20px;font-size:10.5px;letter-spacing:-0.2px;color:#333;white-space:nowrap">ΣΕΡΑΦΕΙΜ</div></div>
<div style="position:absolute;left:634px;top:576px;width:232.5px;height:17px;overflow:hidden"><div style="position:absolute;left:1.6px;top:-0.84px;line-height:20px;height:20px;font-size:10.8px;letter-spacing:0;color:#333;white-space:nowrap"></div></div>
<div style="position:absolute;left:869px;top:576px;width:232.5px;height:17px;overflow:hidden"><div style="position:absolute;left:1.6px;top:-0.74px;line-height:20px;height:20px;font-size:10.5px;letter-spacing:-0.2px;color:#333;white-space:nowrap">ΓΑΤΙΔΗΣ ΓΕΩΡΓΙΟΣ</div></div>
<div style="position:absolute;left:1104px;top:576px;width:232.5px;height:17px;overflow:hidden"><div style="position:absolute;left:1.6px;top:-0.74px;line-height:20px;height:20px;font-size:10.5px;letter-spacing:-0.2px;color:#333;white-space:nowrap">ΕΟΠΥΥ</div></div>
<div style="position:absolute;left:1339px;top:576px;width:115.5px;height:17px;overflow:hidden"><div style="position:absolute;left:1.6px;top:-0.74px;line-height:20px;height:20px;font-size:10.5px;letter-spacing:-0.2px;color:#333;white-space:nowrap">ΤΡΙΚΛΙΝΟ Ββ</div></div>
<div style="position:absolute;left:1457px;top:576px;width:45.5px;height:17px;overflow:hidden"><div style="position:absolute;left:1.6px;top:-0.84px;line-height:20px;height:20px;font-size:10.8px;letter-spacing:0;color:#333;white-space:nowrap">203</div></div>
<div style="position:absolute;left:1505px;top:576px;width:232.5px;height:17px;overflow:hidden"><div style="position:absolute;left:1.6px;top:-0.74px;line-height:20px;height:20px;font-size:10.5px;letter-spacing:-0.2px;color:#333;white-space:nowrap">ΚΑΡΔΙΟΛΟΓΙΚΟ</div></div>
<div style="position:absolute;left:1740px;top:576px;width:45.5px;height:17px;overflow:hidden"><div style="position:absolute;left:1.6px;top:-0.84px;line-height:20px;height:20px;font-size:10.8px;letter-spacing:0;color:#333;white-space:nowrap">I48</div></div>
<div style="position:absolute;left:10px;top:593px;width:1778px;height:1px;background:#d8d8d8"></div>
<div style="position:absolute;left:10px;top:594px;width:18px;height:17px;background:#f0f0f0"></div>
<div style="position:absolute;left:29px;top:594px;width:22.5px;height:17px;overflow:hidden"><div style="position:absolute;left:1.6px;top:-0.74px;line-height:20px;height:20px;font-size:10.5px;letter-spacing:-0.2px;color:#333;white-space:nowrap">Εσω</div></div>
<div style="position:absolute;left:54px;top:594px;width:45.5px;height:17px;overflow:hidden"><div style="position:absolute;left:1.6px;top:-0.84px;line-height:20px;height:20px;font-size:10.8px;letter-spacing:0;color:#333;white-space:nowrap">0027821</div></div>
<div style="position:absolute;left:102px;top:594px;width:41.5px;height:17px;overflow:hidden"><div style="position:absolute;left:1.6px;top:-0.84px;line-height:20px;height:20px;font-size:10.8px;letter-spacing:0;color:#333;white-space:nowrap">2<span style="margin:0 0.55px">/</span>4<span style="margin:0 0.55px">/</span>2020</div></div>
<div style="position:absolute;left:146px;top:594px;width:40.5px;height:17px;overflow:hidden"><div style="position:absolute;left:1.6px;top:-0.84px;line-height:20px;height:20px;font-size:10.8px;letter-spacing:0;color:#333;white-space:nowrap"></div></div>
<div style="position:absolute;left:189px;top:594px;width:232.5px;height:17px;overflow:hidden"><div style="position:absolute;left:1.6px;top:-0.74px;line-height:20px;height:20px;font-size:10.5px;letter-spacing:-0.2px;color:#333;white-space:nowrap">ΑΣΑΜΑΝΙΔΟΥ ΕΛΕΝΗ</div></div>
<div style="position:absolute;left:424px;top:594px;width:45.5px;height:17px;overflow:hidden"><div style="position:absolute;left:1.6px;top:-0.84px;line-height:20px;height:20px;font-size:10.8px;letter-spacing:0;color:#333;white-space:nowrap">0101220 345</div></div>
<div style="position:absolute;left:472px;top:594px;width:41.5px;height:17px;overflow:hidden"><div style="position:absolute;left:1.6px;top:-0.84px;line-height:20px;height:20px;font-size:10.8px;letter-spacing:0;color:#333;white-space:nowrap">1<span style="margin:0 0.55px">/</span>1<span style="margin:0 0.55px">/</span>1922</div></div>
<div style="position:absolute;left:516px;top:594px;width:115.5px;height:17px;overflow:hidden"><div style="position:absolute;left:1.6px;top:-0.74px;line-height:20px;height:20px;font-size:10.5px;letter-spacing:-0.2px;color:#333;white-space:nowrap">ΓΕΩΡΓΙΟΣ</div></div>
<div style="position:absolute;left:634px;top:594px;width:232.5px;height:17px;overflow:hidden"><div style="position:absolute;left:1.6px;top:-0.74px;line-height:20px;height:20px;font-size:10.5px;letter-spacing:-0.2px;color:#333;white-space:nowrap">ΛΑΡΙΣΑΙΩΝ</div></div>
<div style="position:absolute;left:869px;top:594px;width:232.5px;height:17px;overflow:hidden"><div style="position:absolute;left:1.6px;top:-0.74px;line-height:20px;height:20px;font-size:10.5px;letter-spacing:-0.2px;color:#333;white-space:nowrap">ΓΑΤΙΔΗΣ ΓΕΩΡΓΙΟΣ</div></div>
<div style="position:absolute;left:1104px;top:594px;width:232.5px;height:17px;overflow:hidden"><div style="position:absolute;left:1.6px;top:-0.74px;line-height:20px;height:20px;font-size:10.5px;letter-spacing:-0.2px;color:#333;white-space:nowrap">ΕΟΠΥΥ</div></div>
<div style="position:absolute;left:1339px;top:594px;width:115.5px;height:17px;overflow:hidden"><div style="position:absolute;left:1.6px;top:-0.74px;line-height:20px;height:20px;font-size:10.5px;letter-spacing:-0.2px;color:#333;white-space:nowrap">ΤΡΙΚΛΙΝΟ Γ</div></div>
<div style="position:absolute;left:1457px;top:594px;width:45.5px;height:17px;overflow:hidden"><div style="position:absolute;left:1.6px;top:-0.84px;line-height:20px;height:20px;font-size:10.8px;letter-spacing:0;color:#333;white-space:nowrap">101</div></div>
<div style="position:absolute;left:1505px;top:594px;width:232.5px;height:17px;overflow:hidden"><div style="position:absolute;left:1.6px;top:-0.74px;line-height:20px;height:20px;font-size:10.5px;letter-spacing:-0.2px;color:#333;white-space:nowrap">ΠΑΘΟΛΟΓΙΚΟ</div></div>
<div style="position:absolute;left:1740px;top:594px;width:45.5px;height:17px;overflow:hidden"><div style="position:absolute;left:1.6px;top:-0.84px;line-height:20px;height:20px;font-size:10.8px;letter-spacing:0;color:#333;white-space:nowrap">I50</div></div>
<div style="position:absolute;left:10px;top:611px;width:1778px;height:1px;background:#d8d8d8"></div>
<div style="position:absolute;left:10px;top:612px;width:18px;height:17px;background:#f0f0f0"></div>
<div style="position:absolute;left:29px;top:612px;width:22.5px;height:17px;overflow:hidden"><div style="position:absolute;left:1.6px;top:-0.74px;line-height:20px;height:20px;font-size:10.5px;letter-spacing:-0.2px;color:#333;white-space:nowrap">Εσω</div></div>
<div style="position:absolute;left:54px;top:612px;width:45.5px;height:17px;overflow:hidden"><div style="position:absolute;left:1.6px;top:-0.84px;line-height:20px;height:20px;font-size:10.8px;letter-spacing:0;color:#333;white-space:nowrap">0028064</div></div>
<div style="position:absolute;left:102px;top:612px;width:41.5px;height:17px;overflow:hidden"><div style="position:absolute;left:1.6px;top:-0.84px;line-height:20px;height:20px;font-size:10.8px;letter-spacing:0;color:#333;white-space:nowrap">23<span style="margin:0 0.55px">/</span>4<span style="margin:0 0.55px">/</span>2020</div></div>
<div style="position:absolute;left:146px;top:612px;width:40.5px;height:17px;overflow:hidden"><div style="position:absolute;left:1.6px;top:-0.84px;line-height:20px;height:20px;font-size:10.8px;letter-spacing:0;color:#333;white-space:nowrap"></div></div>
<div style="position:absolute;left:189px;top:612px;width:232.5px;height:17px;overflow:hidden"><div style="position:absolute;left:1.6px;top:-0.74px;line-height:20px;height:20px;font-size:10.5px;letter-spacing:-0.2px;color:#333;white-space:nowrap">ΑΣΚΛΑΒΟΥΛΙΔΟΥ ΜΑΡΙΣΑ</div></div>
<div style="position:absolute;left:424px;top:612px;width:45.5px;height:17px;overflow:hidden"><div style="position:absolute;left:1.6px;top:-0.84px;line-height:20px;height:20px;font-size:10.8px;letter-spacing:0;color:#333;white-space:nowrap">01014403456</div></div>
<div style="position:absolute;left:472px;top:612px;width:41.5px;height:17px;overflow:hidden"><div style="position:absolute;left:1.6px;top:-0.84px;line-height:20px;height:20px;font-size:10.8px;letter-spacing:0;color:#333;white-space:nowrap">1<span style="margin:0 0.55px">/</span>1<span style="margin:0 0.55px">/</span>1944</div></div>
<div style="position:absolute;left:516px;top:612px;width:115.5px;height:17px;overflow:hidden"><div style="position:absolute;left:1.6px;top:-0.74px;line-height:20px;height:20px;font-size:10.5px;letter-spacing:-0.2px;color:#333;white-space:nowrap">ΑΝΤΩΝΙΟΣ</div></div>
<div style="position:absolute;left:634px;top:612px;width:232.5px;height:17px;overflow:hidden"><div style="position:absolute;left:1.6px;top:-0.74px;line-height:20px;height:20px;font-size:10.5px;letter-spacing:-0.2px;color:#333;white-space:nowrap">ΛΑΡΙΣΑΙΩΝ</div></div>
<div style="position:absolute;left:869px;top:612px;width:232.5px;height:17px;overflow:hidden"><div style="position:absolute;left:1.6px;top:-0.74px;line-height:20px;height:20px;font-size:10.5px;letter-spacing:-0.2px;color:#333;white-space:nowrap">ΓΑΤΙΔΗΣ ΓΕΩΡΓΙΟΣ</div></div>
<div style="position:absolute;left:1104px;top:612px;width:232.5px;height:17px;overflow:hidden"><div style="position:absolute;left:1.6px;top:-0.74px;line-height:20px;height:20px;font-size:10.5px;letter-spacing:-0.2px;color:#333;white-space:nowrap">ΕΟΠΥΥ</div></div>
<div style="position:absolute;left:1339px;top:612px;width:115.5px;height:17px;overflow:hidden"><div style="position:absolute;left:1.6px;top:-0.74px;line-height:20px;height:20px;font-size:10.5px;letter-spacing:-0.2px;color:#333;white-space:nowrap">ΤΡΙΚΛΙΝΟ Ββ</div></div>
<div style="position:absolute;left:1457px;top:612px;width:45.5px;height:17px;overflow:hidden"><div style="position:absolute;left:1.6px;top:-0.84px;line-height:20px;height:20px;font-size:10.8px;letter-spacing:0;color:#333;white-space:nowrap">203</div></div>
<div style="position:absolute;left:1505px;top:612px;width:232.5px;height:17px;overflow:hidden"><div style="position:absolute;left:1.6px;top:-0.74px;line-height:20px;height:20px;font-size:10.5px;letter-spacing:-0.2px;color:#333;white-space:nowrap">ΚΑΡΔΙΟΛΟΓΙΚΟ</div></div>
<div style="position:absolute;left:1740px;top:612px;width:45.5px;height:17px;overflow:hidden"><div style="position:absolute;left:1.6px;top:-0.84px;line-height:20px;height:20px;font-size:10.8px;letter-spacing:0;color:#333;white-space:nowrap">I50</div></div>
<div style="position:absolute;left:10px;top:629px;width:1778px;height:1px;background:#d8d8d8"></div>
<div style="position:absolute;left:10px;top:630px;width:18px;height:17px;background:#f0f0f0"></div>
<div style="position:absolute;left:29px;top:630px;width:22.5px;height:17px;overflow:hidden"><div style="position:absolute;left:1.6px;top:-0.74px;line-height:20px;height:20px;font-size:10.5px;letter-spacing:-0.2px;color:#333;white-space:nowrap">Εσω</div></div>
<div style="position:absolute;left:54px;top:630px;width:45.5px;height:17px;overflow:hidden"><div style="position:absolute;left:1.6px;top:-0.84px;line-height:20px;height:20px;font-size:10.8px;letter-spacing:0;color:#333;white-space:nowrap">0028082</div></div>
<div style="position:absolute;left:102px;top:630px;width:41.5px;height:17px;overflow:hidden"><div style="position:absolute;left:1.6px;top:-0.84px;line-height:20px;height:20px;font-size:10.8px;letter-spacing:0;color:#333;white-space:nowrap">24<span style="margin:0 0.55px">/</span>4<span style="margin:0 0.55px">/</span>2020</div></div>
<div style="position:absolute;left:146px;top:630px;width:40.5px;height:17px;overflow:hidden"><div style="position:absolute;left:1.6px;top:-0.84px;line-height:20px;height:20px;font-size:10.8px;letter-spacing:0;color:#333;white-space:nowrap"></div></div>
<div style="position:absolute;left:189px;top:630px;width:232.5px;height:17px;overflow:hidden"><div style="position:absolute;left:1.6px;top:-0.74px;line-height:20px;height:20px;font-size:10.5px;letter-spacing:-0.2px;color:#333;white-space:nowrap">ΑΣΚΟΥΦΗ ΑΓΓΕΛΙΚΗ</div></div>
<div style="position:absolute;left:424px;top:630px;width:45.5px;height:17px;overflow:hidden"><div style="position:absolute;left:1.6px;top:-0.84px;line-height:20px;height:20px;font-size:10.8px;letter-spacing:0;color:#333;white-space:nowrap">01013503456</div></div>
<div style="position:absolute;left:472px;top:630px;width:41.5px;height:17px;overflow:hidden"><div style="position:absolute;left:1.6px;top:-0.84px;line-height:20px;height:20px;font-size:10.8px;letter-spacing:0;color:#333;white-space:nowrap">1<span style="margin:0 0.55px">/</span>1<span style="margin:0 0.55px">/</span>1935</div></div>
<div style="position:absolute;left:516px;top:630px;width:115.5px;height:17px;overflow:hidden"><div style="position:absolute;left:1.6px;top:-0.74px;line-height:20px;height:20px;font-size:10.5px;letter-spacing:-0.2px;color:#333;white-space:nowrap">ΓΕΩΡΓΙΟΣ</div></div>
<div style="position:absolute;left:634px;top:630px;width:232.5px;height:17px;overflow:hidden"><div style="position:absolute;left:1.6px;top:-0.74px;line-height:20px;height:20px;font-size:10.5px;letter-spacing:-0.2px;color:#333;white-space:nowrap">ΛΑΡΙΣΑΙΩΝ</div></div>
<div style="position:absolute;left:869px;top:630px;width:232.5px;height:17px;overflow:hidden"><div style="position:absolute;left:1.6px;top:-0.74px;line-height:20px;height:20px;font-size:10.5px;letter-spacing:-0.2px;color:#333;white-space:nowrap">ΓΑΤΙΔΗΣ ΓΕΩΡΓΙΟΣ</div></div>
<div style="position:absolute;left:1104px;top:630px;width:232.5px;height:17px;overflow:hidden"><div style="position:absolute;left:1.6px;top:-0.74px;line-height:20px;height:20px;font-size:10.5px;letter-spacing:-0.2px;color:#333;white-space:nowrap">ΕΟΠΥΥ</div></div>
<div style="position:absolute;left:1339px;top:630px;width:115.5px;height:17px;overflow:hidden"><div style="position:absolute;left:1.6px;top:-0.74px;line-height:20px;height:20px;font-size:10.5px;letter-spacing:-0.2px;color:#333;white-space:nowrap">ΔΙΚΛΙΝΟ Βα</div></div>
<div style="position:absolute;left:1457px;top:630px;width:45.5px;height:17px;overflow:hidden"><div style="position:absolute;left:1.6px;top:-0.84px;line-height:20px;height:20px;font-size:10.8px;letter-spacing:0;color:#333;white-space:nowrap">404</div></div>
<div style="position:absolute;left:1505px;top:630px;width:232.5px;height:17px;overflow:hidden"><div style="position:absolute;left:1.6px;top:-0.74px;line-height:20px;height:20px;font-size:10.5px;letter-spacing:-0.2px;color:#333;white-space:nowrap">ΟΡΘΟΠΕΔΙΚΟ</div></div>
<div style="position:absolute;left:1740px;top:630px;width:45.5px;height:17px;overflow:hidden"><div style="position:absolute;left:1.6px;top:-0.84px;line-height:20px;height:20px;font-size:10.8px;letter-spacing:0;color:#333;white-space:nowrap">S72.1</div></div>
<div style="position:absolute;left:10px;top:647px;width:1778px;height:1px;background:#d8d8d8"></div>
</div>
<div style="position:absolute;left:28px;top:310px;width:1px;height:641px;background:#d8d8d8"></div>
<div style="position:absolute;left:53px;top:310px;width:1px;height:641px;background:#d8d8d8"></div>
<div style="position:absolute;left:101px;top:310px;width:1px;height:641px;background:#d8d8d8"></div>
<div style="position:absolute;left:145px;top:310px;width:1px;height:641px;background:#d8d8d8"></div>
<div style="position:absolute;left:188px;top:310px;width:1px;height:641px;background:#d8d8d8"></div>
<div style="position:absolute;left:423px;top:310px;width:1px;height:641px;background:#d8d8d8"></div>
<div style="position:absolute;left:471px;top:310px;width:1px;height:641px;background:#d8d8d8"></div>
<div style="position:absolute;left:515px;top:310px;width:1px;height:641px;background:#d8d8d8"></div>
<div style="position:absolute;left:633px;top:310px;width:1px;height:641px;background:#d8d8d8"></div>
<div style="position:absolute;left:868px;top:310px;width:1px;height:641px;background:#d8d8d8"></div>
<div style="position:absolute;left:1103px;top:310px;width:1px;height:641px;background:#d8d8d8"></div>
<div style="position:absolute;left:1338px;top:310px;width:1px;height:641px;background:#d8d8d8"></div>
<div style="position:absolute;left:1456px;top:310px;width:1px;height:641px;background:#d8d8d8"></div>
<div style="position:absolute;left:1504px;top:310px;width:1px;height:641px;background:#d8d8d8"></div>
<div style="position:absolute;left:1739px;top:310px;width:1px;height:641px;background:#d8d8d8"></div>
<div style="position:absolute;left:10px;top:951px;width:1778px;height:1px;background:#d0d0d0"></div>
<svg style="position:absolute;left:12px;top:331px" width="14" height="12" viewBox="12 331 14 12"><path d="M14.3 337.5 H22.5 M19.2 334.3 L22.6 337.5 L19.2 340.7" fill="none" stroke="#1f6fd1" stroke-width="1.1"/></svg>
<div style="position:absolute;left:1787px;top:256px;width:1px;height:733px;background:#cfcfcf"></div>
<div style="position:absolute;left:11px;top:953px;width:17px;height:32px;background:#f0f0f0"></div>
<div style="position:absolute;left:1777px;top:310px;width:1px;height:266px;background:#fff"></div>
<div style="position:absolute;left:1782px;top:310px;width:1px;height:266px;background:#fff"></div>
<div style="position:absolute;left:1778px;top:311px;width:4px;height:265px;background:rgba(110,110,110,0.48)"></div>
<div style="position:absolute;left:1796px;top:172px;width:120px;height:27px;background:#fff;border:1px solid #b4b4b4;box-sizing:border-box"></div>
<div style="position:absolute;left:1796px;top:205px;width:120px;height:27px;background:#fff;border:1px solid #b4b4b4;box-sizing:border-box"></div>
<div style="position:absolute;left:1796px;top:238px;width:120px;height:27px;background:#fff;border:1px solid #b4b4b4;box-sizing:border-box"></div>
<div style="position:absolute;left:1796px;top:271px;width:120px;height:27px;background:#fff;border:1px solid #b4b4b4;box-sizing:border-box"></div>
<div style="position:absolute;left:1835.5px;top:175.57px;height:20px;line-height:20px;font-size:10.2px;color:#333;white-space:nowrap;">Επεξεργασία</div>
<div style="position:absolute;left:1840px;top:208.50px;height:20px;line-height:20px;font-size:10.4px;color:#333;white-space:nowrap;">Εκτύπωση</div>
<div style="position:absolute;left:1840.5px;top:241.43px;height:20px;line-height:20px;font-size:10.6px;color:#333;white-space:nowrap;">Ανανέωση</div>
<div style="position:absolute;left:1843px;top:274.43px;height:20px;line-height:20px;font-size:10.6px;color:#333;white-space:nowrap;">Εξαγωγή</div>
<svg style="position:absolute;left:1814px;top:175px" width="20" height="20" viewBox="1814 175 20 20"><path d="M1816.6 191.6 L1817.6 188 L1829.4 176.4 L1831.9 178.9 L1820.1 190.6 Z" fill="#9ccbf7" stroke="#7fb3e8" stroke-width="0.7"/><path d="M1816.6 191.6 L1817.6 188 L1820.1 190.6 Z" fill="#4a8fd9"/></svg>
<svg style="position:absolute;left:1819px;top:208px" width="20" height="20" viewBox="1819 208 20 20"><rect x="1824" y="210.5" width="9" height="4" fill="#fff" stroke="#9cc7f0" stroke-width="1"/><rect x="1821.5" y="214.5" width="15" height="7" rx="1.5" fill="#9cc7f0"/><rect x="1824" y="219.5" width="9" height="6" fill="#fff" stroke="#9cc7f0" stroke-width="1"/><path d="M1825.5 222 H1831.5" stroke="#9cc7f0" stroke-width="0.8"/></svg>
<svg style="position:absolute;left:1819px;top:241px" width="20" height="20" viewBox="1819 241 20 20"><path d="M1823 249 A6 6 0 0 1 1834.5 246.5" fill="none" stroke="#a9cff3" stroke-width="1.6"/><path d="M1836.5 243.5 V248.5 H1831.5 Z" fill="#a9cff3"/><path d="M1835 251.5 A6 6 0 0 1 1823.5 254" fill="none" stroke="#a9cff3" stroke-width="1.6"/><path d="M1821.5 257 V252 H1826.5 Z" fill="#a9cff3"/></svg>
<svg style="position:absolute;left:1824px;top:274px" width="18" height="20" viewBox="1824 274 18 20"><rect x="1826.5" y="276.5" width="11" height="14.5" fill="#dcecfc" stroke="#b9d8f5" stroke-width="1"/><path d="M1829 283.7 H1836" stroke="#4a8fd9" stroke-width="1.2"/><path d="M1835 281 L1838.5 283.7 L1835 286.4 Z" fill="#4a8fd9"/></svg>
<div style="position:absolute;left:1796px;top:316px;width:120px;height:40px;background:#dcdcdc;border:1px solid #b4b4b4;box-sizing:border-box"></div>
<div style="position:absolute;left:1706.00px;top:326.46px;width:300px;text-align:center;height:20px;line-height:20px;font-size:10.8px;color:#333;white-space:nowrap;">Τρέχουσες νοσηλείες</div>
<div style="position:absolute;left:1796px;top:362px;width:120px;height:40px;background:#fff;border:1px solid #b4b4b4;box-sizing:border-box"></div>
<div style="position:absolute;left:1704.30px;top:365.73px;width:300px;text-align:center;height:20px;line-height:20px;font-size:10.6px;color:#333;white-space:nowrap;">Αναζήτηση</div>
<div style="position:absolute;left:1704.20px;top:377.86px;width:300px;text-align:center;height:20px;line-height:20px;font-size:10.8px;color:#333;white-space:nowrap;">Περιστατικού</div>
<div style="position:absolute;left:1796px;top:420px;width:120px;height:26px;background:#fff;border:1px solid #b4b4b4;box-sizing:border-box"></div>
<div style="position:absolute;left:1900px;top:421px;width:1px;height:24px;background:#c8c8c8"></div>
<div style="position:absolute;left:1696.60px;top:423.49px;width:300px;text-align:center;height:20px;line-height:20px;font-size:11px;color:#333;white-space:nowrap;">Ενέργειες</div>
<svg style="position:absolute;left:1903px;top:429px" width="12" height="8" viewBox="1903 429 12 8"><path d="M1905.5 432 L1911 432 L1908.25 435 Z" fill="#666"/></svg>
<div style="position:absolute;left:1796px;top:452px;width:120px;height:27px;background:#fff;border:1px solid #b4b4b4;box-sizing:border-box"></div>
<div style="position:absolute;left:1900px;top:453px;width:1px;height:25px;background:#c8c8c8"></div>
<div style="position:absolute;left:1696.50px;top:455.19px;width:300px;text-align:center;height:20px;line-height:20px;font-size:11px;color:#333;white-space:nowrap;">Προβολές</div>
<svg style="position:absolute;left:1903px;top:461px" width="12" height="8" viewBox="1903 461 12 8"><path d="M1905.5 464 L1911 464 L1908.25 467 Z" fill="#666"/></svg>
</body></html>
